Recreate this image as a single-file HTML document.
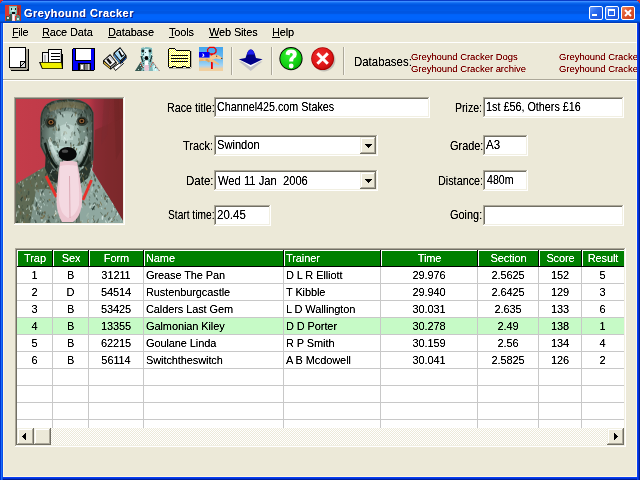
<!DOCTYPE html><html><head><meta charset="utf-8"><style>
html,body{margin:0;padding:0;}body{width:640px;height:480px;overflow:hidden;position:relative;background:#ece9d8;font-family:"Liberation Sans",sans-serif;}
div{box-sizing:border-box;}svg{position:absolute;display:block;}body{will-change:transform;}
</style></head><body>
<svg width="0" height="0" style="position:absolute"><filter id="tc" x="0" y="0" width="1" height="1"><feComponentTransfer><feFuncA type="linear" slope="1.6" intercept="-0.15"/></feComponentTransfer></filter></svg>
<div style="position:absolute;left:0px;top:0px;width:640px;height:480px;background:#0831d9;"></div>
<div style="position:absolute;left:0px;top:23px;width:1px;height:457px;background:#0032d0;"></div>
<div style="position:absolute;left:1px;top:23px;width:1px;height:457px;background:#1a6ef8;"></div>
<div style="position:absolute;left:2px;top:23px;width:1px;height:457px;background:#0a4ee8;"></div>
<div style="position:absolute;left:637px;top:23px;width:1px;height:457px;background:#0a3ef4;"></div>
<div style="position:absolute;left:3px;top:477px;width:634px;height:1px;background:#0a3ef4;"></div>
<div style="position:absolute;left:638px;top:23px;width:1px;height:457px;background:#0032d4;"></div>
<div style="position:absolute;left:3px;top:478px;width:634px;height:1px;background:#0032d4;"></div>
<div style="position:absolute;left:639px;top:23px;width:1px;height:457px;background:#001c94;"></div>
<div style="position:absolute;left:3px;top:479px;width:634px;height:1px;background:#001c94;"></div>
<div style="position:absolute;left:3px;top:23px;width:634px;height:454px;background:#ece9d8;"></div>
<div style="position:absolute;left:3px;top:23px;width:1px;height:454px;background:#fdf6e3;"></div>
<div style="position:absolute;left:3px;top:23px;width:634px;height:1px;background:#fdf6e3;"></div>
<div style="position:absolute;left:3px;top:476px;width:634px;height:1px;background:#fdf6e3;"></div>
<div style="position:absolute;left:636px;top:23px;width:1px;height:454px;background:#fdf6e3;"></div>
<div style="position:absolute;left:0px;top:0px;width:640px;height:23px;background:linear-gradient(180deg,#0a3cc8 0px,#0a3cc8 1px,#3a8cff 1px,#3a8cff 2px,#1a74f4 2px,#1a74f4 3px,#0a62ea 3px,#0a62ea 4px,#005ae6 4px,#005ae6 5px,#0054e0 5px,#0054e0 6px,#0056e4 6px,#0056e4 7px,#0058e6 7px,#0058e6 8px,#0058e6 8px,#0058e6 9px,#0058e6 9px,#0058e6 10px,#005ae8 10px,#005ae8 11px,#0056e2 11px,#0056e2 12px,#0056e2 12px,#0056e2 13px,#0058e6 13px,#0058e6 14px,#0062f8 14px,#0062f8 15px,#0064fc 15px,#0064fc 16px,#0064fc 16px,#0064fc 17px,#0064fc 17px,#0064fc 18px,#0064fc 18px,#0064fc 19px,#0062fa 19px,#0062fa 20px,#005ef2 20px,#005ef2 21px,#0050d6 21px,#0050d6 22px,#003cbc 22px,#003cbc 23px);"></div>
<div style="position:absolute;left:0px;top:0px;width:3px;height:1px;background:#d8322a;"></div>
<div style="position:absolute;left:0px;top:1px;width:1px;height:2px;background:#d8322a;"></div>
<div style="position:absolute;left:1px;top:1px;width:1px;height:1px;background:#6a3a8a;"></div>
<div style="position:absolute;left:637px;top:0px;width:3px;height:1px;background:#d8322a;"></div>
<div style="position:absolute;left:639px;top:1px;width:1px;height:2px;background:#d8322a;"></div>
<div style="position:absolute;left:638px;top:1px;width:1px;height:1px;background:#6a3a8a;"></div>
<svg style="left:5px;top:5px" width="16" height="16" viewBox="0 0 16 16" shape-rendering="crispEdges">
<rect width="16" height="16" fill="#d83830"/><rect x="12" y="0" width="4" height="16" fill="#b83028"/><rect x="13" y="3" width="1" height="9" fill="#902420"/>
<path d="M4 1h8v8h-1v2h-6v-2h-1z" fill="#78b8b0"/>
<rect x="5" y="2" width="6" height="5" fill="#a8dcd4"/>
<rect x="6" y="3" width="1" height="2" fill="#1a2a28"/><rect x="10" y="3" width="1" height="2" fill="#1a2a28"/>
<rect x="7" y="5" width="2" height="1" fill="#e8f8f4"/>
<rect x="7" y="7" width="3" height="2" fill="#080808"/>
<path d="M1 16v-5h3l1-2h2v7z" fill="#3a5a50"/><path d="M15 16v-4l-2-2h-2v6z" fill="#5a8a80"/>
<rect x="2" y="12" width="2" height="2" fill="#c8e8e0"/><rect x="12" y="13" width="2" height="2" fill="#d0f0e8"/>
<rect x="4" y="11" width="1" height="1" fill="#f03020"/><rect x="11" y="11" width="1" height="1" fill="#f03020"/>
<rect x="7" y="9" width="3" height="7" fill="#f4d4dc"/><rect x="8" y="10" width="1" height="5" fill="#ffffff"/>
</svg>
<div style="position:absolute;left:24px;top:7px;font-size:11px;line-height:13px;color:#fff;white-space:pre;filter:url(#tc);font-weight:bold;letter-spacing:0.42px;text-shadow:1px 1px 0 #0a1e8a;">Greyhound Cracker</div>
<div style="position:absolute;left:589px;top:6px;width:14px;height:14px;border:1px solid #fff;border-radius:2px;background:linear-gradient(135deg,#6a9cff 0,#2a6cf0 40%,#1a50d8 100%);"></div>
<div style="position:absolute;left:605px;top:6px;width:14px;height:14px;border:1px solid #fff;border-radius:2px;background:linear-gradient(135deg,#6a9cff 0,#2a6cf0 40%,#1a50d8 100%);"></div>
<div style="position:absolute;left:621px;top:6px;width:14px;height:14px;border:1px solid #fff;border-radius:2px;background:linear-gradient(135deg,#f08a60 0,#e05a30 40%,#c83c18 100%);"></div>
<div style="position:absolute;left:592px;top:14px;width:5px;height:2px;background:#fff;"></div>
<div style="position:absolute;left:608px;top:9px;width:7px;height:7px;border:1px solid #fff;border-top-width:2px;"></div>
<svg style="left:624px;top:9px" width="8" height="8" viewBox="0 0 8 8"><path d="M1 1L7 7M7 1L1 7" stroke="#fff" stroke-width="2"/></svg>
<div style="position:absolute;left:12px;top:26px;font-size:11px;line-height:13px;color:#000;white-space:pre;filter:url(#tc);letter-spacing:-0.4px;"><u>F</u>ile</div>
<div style="position:absolute;left:42px;top:26px;font-size:11px;line-height:13px;color:#000;white-space:pre;filter:url(#tc);letter-spacing:-0.15px;"><u>R</u>ace Data</div>
<div style="position:absolute;left:108px;top:26px;font-size:11px;line-height:13px;color:#000;white-space:pre;filter:url(#tc);letter-spacing:-0.15px;"><u>D</u>atabase</div>
<div style="position:absolute;left:169px;top:26px;font-size:11px;line-height:13px;color:#000;white-space:pre;filter:url(#tc);letter-spacing:-0.15px;"><u>T</u>ools</div>
<div style="position:absolute;left:209px;top:26px;font-size:11px;line-height:13px;color:#000;white-space:pre;filter:url(#tc);letter-spacing:-0.15px;"><u>W</u>eb Sites</div>
<div style="position:absolute;left:272px;top:26px;font-size:11px;line-height:13px;color:#000;white-space:pre;filter:url(#tc);letter-spacing:-0.15px;"><u>H</u>elp</div>
<div style="position:absolute;left:3px;top:42px;width:634px;height:1px;background:#fff;"></div>
<div style="position:absolute;left:3px;top:79px;width:634px;height:1px;background:#aca899;"></div>
<div style="position:absolute;left:3px;top:80px;width:634px;height:1px;background:#fff;"></div>
<div style="position:absolute;left:231px;top:47px;width:1px;height:28px;background:#aca899;"></div>
<div style="position:absolute;left:232px;top:47px;width:1px;height:28px;background:#f8f6ee;"></div>
<div style="position:absolute;left:271px;top:47px;width:1px;height:28px;background:#aca899;"></div>
<div style="position:absolute;left:272px;top:47px;width:1px;height:28px;background:#f8f6ee;"></div>
<div style="position:absolute;left:343px;top:47px;width:1px;height:28px;background:#aca899;"></div>
<div style="position:absolute;left:344px;top:47px;width:1px;height:28px;background:#f8f6ee;"></div>
<svg style="left:0;top:43px" width="640" height="36" viewBox="0 43 640 36" shape-rendering="crispEdges">
<!-- 1 new page -->
<g>
<rect x="11" y="68" width="18" height="3" fill="#000"/>
<rect x="10" y="68" width="18" height="2" fill="#aca899"/>
<rect x="27" y="49" width="2" height="22" fill="#000"/>
<rect x="26" y="49" width="2" height="20" fill="#aca899"/>
<rect x="9" y="47" width="17" height="21" fill="#000"/>
<rect x="10" y="48" width="15" height="19" fill="#fff"/>
<rect x="20" y="61" width="6" height="7" fill="#000"/>
<rect x="21" y="62" width="4" height="5" fill="#d8d8d8"/>
<path d="M21 66L25 62" stroke="#000" stroke-width="1" shape-rendering="auto"/>
</g>
<!-- 2 open folder -->
<g>
<rect x="42" y="52" width="7" height="12" fill="#000"/>
<rect x="43" y="53" width="5" height="10" fill="#f0f0f0"/>
<rect x="44" y="55" width="2" height="8" fill="#c0c0c0"/>
<rect x="48" y="49" width="14" height="14" fill="#000"/>
<rect x="49" y="50" width="12" height="13" fill="#fff"/>
<rect x="60" y="51" width="1" height="12" fill="#c0c0c0"/>
<rect x="51" y="53" width="9" height="1" fill="#000"/>
<rect x="51" y="56" width="9" height="1" fill="#000"/>
<rect x="51" y="59" width="9" height="1" fill="#000"/>
<rect x="62" y="54" width="1" height="15" fill="#000"/>
<path d="M39 62H62L63 69H42Z" fill="#000" shape-rendering="auto"/>
<path d="M40.5 62.8H61.3L62 68.2H42.6Z" fill="#f0f000" shape-rendering="auto"/>
</g>
<!-- 3 floppy -->
<g>
<rect x="72" y="48" width="23" height="23" rx="2" fill="#000"/>
<rect x="73" y="49" width="21" height="21" fill="#0000f8"/>
<rect x="75" y="49" width="16" height="12" fill="#000"/>
<rect x="76" y="49" width="15" height="11" fill="#fff"/>
<rect x="78" y="63" width="13" height="8" fill="#000"/>
<rect x="80" y="64" width="10" height="6" fill="#808080"/>
<rect x="81" y="65" width="2" height="4" fill="#fff"/>
<rect x="84" y="64" width="1" height="6" fill="#404040"/>
<rect x="88" y="64" width="1" height="6" fill="#d0d0d0"/>
</g>
<!-- 4 printer/computer iso -->
<g shape-rendering="auto">
<!-- paper strip -->
<path d="M113.5 67.5L121.5 61.5L123.5 63.5L115.5 70.5Z" fill="#fff" stroke="#000" stroke-width="0.9"/>
<!-- computer -->
<path d="M113.4 53L120.1 47.1L126.6 55.75L120.4 61.7Z" fill="#000"/>
<path d="M114.8 53.2L120.1 48.6L125.2 55.6L120.4 60.2Z" fill="#b8e4fc"/>
<path d="M115.5 54.2L117.3 52.6M116.5 55.5L118.3 53.9M117.5 56.8L119.3 55.2M118.5 58.1L120.3 56.5" stroke="#70b8e8" stroke-width="0.7"/>
<path d="M118 51L120.1 49.2L124 54.5L121.6 56.5Z" fill="#fff"/>
<path d="M118.2 51.6L119.5 50.5L122.3 55.4L123.6 54.3L124.2 55.2L121.4 57.6Z" fill="#000"/>
<path d="M113.4 53L120.4 61.7L120.4 64.6L113.4 56Z" fill="#000"/>
<path d="M114.2 54.6L119.8 61.6L119.8 63.2L114.2 56.2Z" fill="#50a0f0"/>
<path d="M120.4 61.7L126.6 55.75L126.6 58.6L120.4 64.6Z" fill="#000"/>
<path d="M121 62.4L126 57.6L126 58.3L121 63.2Z" fill="#0a60e8"/>
<!-- printer -->
<path d="M103 60.4L110.1 54.1L116.6 62.2L116.6 64.2L110.7 69.8L103 63.6Z" fill="#000"/>
<path d="M104.3 60.4L110.1 55.4L115.3 62L110.3 66.2Z" fill="#fafafa"/>
<path d="M103.8 61.6L110 66.9L110 68.6L103.8 63.2Z" fill="#e8c040"/>
<path d="M110.8 66.9L115.8 62.8L115.8 64L110.8 68.6Z" fill="#b0b0b0"/>
<path d="M106.2 59.6L108.2 57.9L112 62.8L110 64.5Z" fill="#101010"/>
<path d="M108.8 57L110.1 55.9L113.6 60.2L112.4 61.3Z" fill="#c8c8d0"/>
</g>
<!-- 5 dog head -->
<g shape-rendering="auto">
<path d="M135 71L141.5 61L152 61L159.5 71Z" fill="#80b8b8"/>
<path d="M135 71L140 63L143 66L141 71Z" fill="#385850"/>
<path d="M152 64L159.5 71L153 71Z" fill="#c8f0f0"/>
<path d="M141 48Q146 46 152 48L152.5 60L149 63L144 63L141 60Z" fill="#80bcbc"/>
<path d="M144.5 49L148.5 49L149 58L144 58Z" fill="#e0fafa"/>
</g>
<g shape-rendering="crispEdges"><rect x="142" y="65" width="1" height="1" fill="#90d0d0" opacity="0.8"/><rect x="155" y="65" width="1" height="1" fill="#ffffff" opacity="0.8"/><rect x="150" y="55" width="1" height="1" fill="#90d0d0" opacity="0.8"/><rect x="142" y="53" width="1" height="1" fill="#e0fff8" opacity="0.8"/><rect x="150" y="64" width="1" height="1" fill="#90d0d0" opacity="0.8"/><rect x="150" y="59" width="1" height="1" fill="#e0fff8" opacity="0.8"/><rect x="151" y="59" width="1" height="1" fill="#e0fff8" opacity="0.8"/><rect x="140" y="65" width="1" height="1" fill="#ffffff" opacity="0.8"/><rect x="144" y="47" width="1" height="1" fill="#203838" opacity="0.8"/><rect x="150" y="66" width="1" height="1" fill="#e0fff8" opacity="0.8"/><rect x="147" y="69" width="1" height="1" fill="#406860" opacity="0.8"/><rect x="147" y="70" width="1" height="1" fill="#90d0d0" opacity="0.8"/><rect x="149" y="51" width="1" height="1" fill="#203838" opacity="0.8"/><rect x="141" y="55" width="1" height="1" fill="#e0fff8" opacity="0.8"/><rect x="148" y="67" width="1" height="1" fill="#203838" opacity="0.8"/><rect x="148" y="63" width="1" height="1" fill="#406860" opacity="0.8"/><rect x="152" y="65" width="1" height="1" fill="#406860" opacity="0.8"/><rect x="145" y="68" width="1" height="1" fill="#ffffff" opacity="0.8"/><rect x="143" y="66" width="1" height="1" fill="#e0fff8" opacity="0.8"/><rect x="152" y="65" width="1" height="1" fill="#90d0d0" opacity="0.8"/><rect x="138" y="69" width="1" height="1" fill="#e0fff8" opacity="0.8"/><rect x="141" y="67" width="1" height="1" fill="#90d0d0" opacity="0.8"/><rect x="143" y="56" width="1" height="1" fill="#ffffff" opacity="0.8"/><rect x="144" y="60" width="1" height="1" fill="#406860" opacity="0.8"/><rect x="154" y="66" width="1" height="1" fill="#ffffff" opacity="0.8"/><rect x="147" y="69" width="1" height="1" fill="#90d0d0" opacity="0.8"/><rect x="145" y="64" width="1" height="1" fill="#203838" opacity="0.8"/><rect x="151" y="54" width="1" height="1" fill="#ffffff" opacity="0.8"/><rect x="144" y="47" width="1" height="1" fill="#ffffff" opacity="0.8"/><rect x="152" y="48" width="1" height="1" fill="#d8f8f8" opacity="0.8"/><rect x="148" y="56" width="1" height="1" fill="#90d0d0" opacity="0.8"/><rect x="143" y="51" width="1" height="1" fill="#e0fff8" opacity="0.8"/><rect x="145" y="58" width="1" height="1" fill="#d8f8f8" opacity="0.8"/><rect x="147" y="59" width="1" height="1" fill="#406860" opacity="0.8"/><rect x="151" y="59" width="1" height="1" fill="#e0fff8" opacity="0.8"/><rect x="154" y="68" width="1" height="1" fill="#90d0d0" opacity="0.8"/><rect x="151" y="55" width="1" height="1" fill="#406860" opacity="0.8"/><rect x="155" y="70" width="1" height="1" fill="#e0fff8" opacity="0.8"/><rect x="142" y="56" width="1" height="1" fill="#406860" opacity="0.8"/><rect x="143" y="63" width="1" height="1" fill="#203838" opacity="0.8"/><rect x="152" y="57" width="1" height="1" fill="#ffffff" opacity="0.8"/><rect x="148" y="65" width="1" height="1" fill="#203838" opacity="0.8"/><rect x="154" y="65" width="1" height="1" fill="#e0fff8" opacity="0.8"/><rect x="155" y="67" width="1" height="1" fill="#203838" opacity="0.8"/><rect x="149" y="58" width="1" height="1" fill="#e0fff8" opacity="0.8"/><rect x="146" y="66" width="1" height="1" fill="#e0fff8" opacity="0.8"/><rect x="143" y="70" width="1" height="1" fill="#406860" opacity="0.8"/><rect x="143" y="67" width="1" height="1" fill="#406860" opacity="0.8"/><rect x="144" y="65" width="1" height="1" fill="#90d0d0" opacity="0.8"/><rect x="145" y="52" width="1" height="1" fill="#203838" opacity="0.8"/><rect x="144" y="59" width="1" height="1" fill="#ffffff" opacity="0.8"/><rect x="153" y="68" width="1" height="1" fill="#e0fff8" opacity="0.8"/><rect x="151" y="54" width="1" height="1" fill="#e0fff8" opacity="0.8"/><rect x="143" y="54" width="1" height="1" fill="#203838" opacity="0.8"/><rect x="140" y="68" width="1" height="1" fill="#406860" opacity="0.8"/><rect x="155" y="69" width="1" height="1" fill="#ffffff" opacity="0.8"/><rect x="145" y="57" width="1" height="1" fill="#e0fff8" opacity="0.8"/></g>
<g shape-rendering="auto">
<path d="M141 56L143 62M152 56L150 62" stroke="#183030" stroke-width="1.2"/>
<circle cx="142.8" cy="51" r="1.4" fill="#102020"/><circle cx="150" cy="51" r="1.4" fill="#102020"/>
<circle cx="146.4" cy="58" r="1.9" fill="#000"/>
<path d="M144.8 60.5L148.2 60.5L148.8 70.5L144.5 70.5Z" fill="#fff"/>
<path d="M144.6 65L148.6 65L148.8 70.5L144.5 70.5Z" fill="#f0c4d4"/>
<path d="M140.5 62L143 68M152.5 62.5L150 68" stroke="#e03020" stroke-width="1" stroke-dasharray="1 1"/>
<path d="M153 62L159.5 71" stroke="#a03030" stroke-width="0.8" stroke-dasharray="1 1"/>
</g>
<!-- 6 yellow folder -->
<g shape-rendering="crispEdges"><rect x="169" y="49" width="6" height="1" fill="#fff"/><rect x="169" y="50" width="8" height="1" fill="#fff"/><rect x="169" y="51" width="21" height="15" fill="#fff"/><rect x="169" y="66" width="4" height="1" fill="#fff"/><rect x="176" y="66" width="7" height="1" fill="#fff"/><rect x="186" y="66" width="4" height="1" fill="#fff"/><rect x="169" y="49" width="1" height="1" fill="#ffff40"/><rect x="171" y="49" width="1" height="1" fill="#ffff40"/><rect x="173" y="49" width="1" height="1" fill="#ffff40"/><rect x="170" y="50" width="1" height="1" fill="#ffff40"/><rect x="172" y="50" width="1" height="1" fill="#ffff40"/><rect x="174" y="50" width="1" height="1" fill="#ffff40"/><rect x="176" y="50" width="1" height="1" fill="#ffff40"/><rect x="169" y="51" width="1" height="1" fill="#ffff40"/><rect x="171" y="51" width="1" height="1" fill="#ffff40"/><rect x="173" y="51" width="1" height="1" fill="#ffff40"/><rect x="175" y="51" width="1" height="1" fill="#ffff40"/><rect x="177" y="51" width="1" height="1" fill="#ffff40"/><rect x="179" y="51" width="1" height="1" fill="#ffff40"/><rect x="181" y="51" width="1" height="1" fill="#ffff40"/><rect x="183" y="51" width="1" height="1" fill="#ffff40"/><rect x="185" y="51" width="1" height="1" fill="#ffff40"/><rect x="187" y="51" width="1" height="1" fill="#ffff40"/><rect x="189" y="51" width="1" height="1" fill="#ffff40"/><rect x="170" y="52" width="1" height="1" fill="#ffff40"/><rect x="172" y="52" width="1" height="1" fill="#ffff40"/><rect x="174" y="52" width="1" height="1" fill="#ffff40"/><rect x="176" y="52" width="1" height="1" fill="#ffff40"/><rect x="178" y="52" width="1" height="1" fill="#ffff40"/><rect x="180" y="52" width="1" height="1" fill="#ffff40"/><rect x="182" y="52" width="1" height="1" fill="#ffff40"/><rect x="184" y="52" width="1" height="1" fill="#ffff40"/><rect x="186" y="52" width="1" height="1" fill="#ffff40"/><rect x="188" y="52" width="1" height="1" fill="#ffff40"/><rect x="169" y="53" width="1" height="1" fill="#ffff40"/><rect x="171" y="53" width="1" height="1" fill="#ffff40"/><rect x="173" y="53" width="1" height="1" fill="#ffff40"/><rect x="175" y="53" width="1" height="1" fill="#ffff40"/><rect x="177" y="53" width="1" height="1" fill="#ffff40"/><rect x="179" y="53" width="1" height="1" fill="#ffff40"/><rect x="181" y="53" width="1" height="1" fill="#ffff40"/><rect x="183" y="53" width="1" height="1" fill="#ffff40"/><rect x="185" y="53" width="1" height="1" fill="#ffff40"/><rect x="187" y="53" width="1" height="1" fill="#ffff40"/><rect x="189" y="53" width="1" height="1" fill="#ffff40"/><rect x="170" y="54" width="1" height="1" fill="#ffff40"/><rect x="172" y="54" width="1" height="1" fill="#ffff40"/><rect x="174" y="54" width="1" height="1" fill="#ffff40"/><rect x="176" y="54" width="1" height="1" fill="#ffff40"/><rect x="178" y="54" width="1" height="1" fill="#ffff40"/><rect x="180" y="54" width="1" height="1" fill="#ffff40"/><rect x="182" y="54" width="1" height="1" fill="#ffff40"/><rect x="184" y="54" width="1" height="1" fill="#ffff40"/><rect x="186" y="54" width="1" height="1" fill="#ffff40"/><rect x="188" y="54" width="1" height="1" fill="#ffff40"/><rect x="169" y="55" width="1" height="1" fill="#ffff40"/><rect x="171" y="55" width="1" height="1" fill="#ffff40"/><rect x="173" y="55" width="1" height="1" fill="#ffff40"/><rect x="175" y="55" width="1" height="1" fill="#ffff40"/><rect x="177" y="55" width="1" height="1" fill="#ffff40"/><rect x="179" y="55" width="1" height="1" fill="#ffff40"/><rect x="181" y="55" width="1" height="1" fill="#ffff40"/><rect x="183" y="55" width="1" height="1" fill="#ffff40"/><rect x="185" y="55" width="1" height="1" fill="#ffff40"/><rect x="187" y="55" width="1" height="1" fill="#ffff40"/><rect x="189" y="55" width="1" height="1" fill="#ffff40"/><rect x="170" y="56" width="1" height="1" fill="#ffff40"/><rect x="172" y="56" width="1" height="1" fill="#ffff40"/><rect x="174" y="56" width="1" height="1" fill="#ffff40"/><rect x="176" y="56" width="1" height="1" fill="#ffff40"/><rect x="178" y="56" width="1" height="1" fill="#ffff40"/><rect x="180" y="56" width="1" height="1" fill="#ffff40"/><rect x="182" y="56" width="1" height="1" fill="#ffff40"/><rect x="184" y="56" width="1" height="1" fill="#ffff40"/><rect x="186" y="56" width="1" height="1" fill="#ffff40"/><rect x="188" y="56" width="1" height="1" fill="#ffff40"/><rect x="169" y="57" width="1" height="1" fill="#ffff40"/><rect x="171" y="57" width="1" height="1" fill="#ffff40"/><rect x="173" y="57" width="1" height="1" fill="#ffff40"/><rect x="175" y="57" width="1" height="1" fill="#ffff40"/><rect x="177" y="57" width="1" height="1" fill="#ffff40"/><rect x="179" y="57" width="1" height="1" fill="#ffff40"/><rect x="181" y="57" width="1" height="1" fill="#ffff40"/><rect x="183" y="57" width="1" height="1" fill="#ffff40"/><rect x="185" y="57" width="1" height="1" fill="#ffff40"/><rect x="187" y="57" width="1" height="1" fill="#ffff40"/><rect x="189" y="57" width="1" height="1" fill="#ffff40"/><rect x="170" y="58" width="1" height="1" fill="#ffff40"/><rect x="172" y="58" width="1" height="1" fill="#ffff40"/><rect x="174" y="58" width="1" height="1" fill="#ffff40"/><rect x="176" y="58" width="1" height="1" fill="#ffff40"/><rect x="178" y="58" width="1" height="1" fill="#ffff40"/><rect x="180" y="58" width="1" height="1" fill="#ffff40"/><rect x="182" y="58" width="1" height="1" fill="#ffff40"/><rect x="184" y="58" width="1" height="1" fill="#ffff40"/><rect x="186" y="58" width="1" height="1" fill="#ffff40"/><rect x="188" y="58" width="1" height="1" fill="#ffff40"/><rect x="169" y="59" width="1" height="1" fill="#ffff40"/><rect x="171" y="59" width="1" height="1" fill="#ffff40"/><rect x="173" y="59" width="1" height="1" fill="#ffff40"/><rect x="175" y="59" width="1" height="1" fill="#ffff40"/><rect x="177" y="59" width="1" height="1" fill="#ffff40"/><rect x="179" y="59" width="1" height="1" fill="#ffff40"/><rect x="181" y="59" width="1" height="1" fill="#ffff40"/><rect x="183" y="59" width="1" height="1" fill="#ffff40"/><rect x="185" y="59" width="1" height="1" fill="#ffff40"/><rect x="187" y="59" width="1" height="1" fill="#ffff40"/><rect x="189" y="59" width="1" height="1" fill="#ffff40"/><rect x="170" y="60" width="1" height="1" fill="#ffff40"/><rect x="172" y="60" width="1" height="1" fill="#ffff40"/><rect x="174" y="60" width="1" height="1" fill="#ffff40"/><rect x="176" y="60" width="1" height="1" fill="#ffff40"/><rect x="178" y="60" width="1" height="1" fill="#ffff40"/><rect x="180" y="60" width="1" height="1" fill="#ffff40"/><rect x="182" y="60" width="1" height="1" fill="#ffff40"/><rect x="184" y="60" width="1" height="1" fill="#ffff40"/><rect x="186" y="60" width="1" height="1" fill="#ffff40"/><rect x="188" y="60" width="1" height="1" fill="#ffff40"/><rect x="169" y="61" width="1" height="1" fill="#ffff40"/><rect x="171" y="61" width="1" height="1" fill="#ffff40"/><rect x="173" y="61" width="1" height="1" fill="#ffff40"/><rect x="175" y="61" width="1" height="1" fill="#ffff40"/><rect x="177" y="61" width="1" height="1" fill="#ffff40"/><rect x="179" y="61" width="1" height="1" fill="#ffff40"/><rect x="181" y="61" width="1" height="1" fill="#ffff40"/><rect x="183" y="61" width="1" height="1" fill="#ffff40"/><rect x="185" y="61" width="1" height="1" fill="#ffff40"/><rect x="187" y="61" width="1" height="1" fill="#ffff40"/><rect x="189" y="61" width="1" height="1" fill="#ffff40"/><rect x="170" y="62" width="1" height="1" fill="#ffff40"/><rect x="172" y="62" width="1" height="1" fill="#ffff40"/><rect x="174" y="62" width="1" height="1" fill="#ffff40"/><rect x="176" y="62" width="1" height="1" fill="#ffff40"/><rect x="178" y="62" width="1" height="1" fill="#ffff40"/><rect x="180" y="62" width="1" height="1" fill="#ffff40"/><rect x="182" y="62" width="1" height="1" fill="#ffff40"/><rect x="184" y="62" width="1" height="1" fill="#ffff40"/><rect x="186" y="62" width="1" height="1" fill="#ffff40"/><rect x="188" y="62" width="1" height="1" fill="#ffff40"/><rect x="169" y="63" width="1" height="1" fill="#ffff40"/><rect x="171" y="63" width="1" height="1" fill="#ffff40"/><rect x="173" y="63" width="1" height="1" fill="#ffff40"/><rect x="175" y="63" width="1" height="1" fill="#ffff40"/><rect x="177" y="63" width="1" height="1" fill="#ffff40"/><rect x="179" y="63" width="1" height="1" fill="#ffff40"/><rect x="181" y="63" width="1" height="1" fill="#ffff40"/><rect x="183" y="63" width="1" height="1" fill="#ffff40"/><rect x="185" y="63" width="1" height="1" fill="#ffff40"/><rect x="187" y="63" width="1" height="1" fill="#ffff40"/><rect x="189" y="63" width="1" height="1" fill="#ffff40"/><rect x="170" y="64" width="1" height="1" fill="#ffff40"/><rect x="172" y="64" width="1" height="1" fill="#ffff40"/><rect x="174" y="64" width="1" height="1" fill="#ffff40"/><rect x="176" y="64" width="1" height="1" fill="#ffff40"/><rect x="178" y="64" width="1" height="1" fill="#ffff40"/><rect x="180" y="64" width="1" height="1" fill="#ffff40"/><rect x="182" y="64" width="1" height="1" fill="#ffff40"/><rect x="184" y="64" width="1" height="1" fill="#ffff40"/><rect x="186" y="64" width="1" height="1" fill="#ffff40"/><rect x="188" y="64" width="1" height="1" fill="#ffff40"/><rect x="169" y="65" width="1" height="1" fill="#ffff40"/><rect x="171" y="65" width="1" height="1" fill="#ffff40"/><rect x="173" y="65" width="1" height="1" fill="#ffff40"/><rect x="175" y="65" width="1" height="1" fill="#ffff40"/><rect x="177" y="65" width="1" height="1" fill="#ffff40"/><rect x="179" y="65" width="1" height="1" fill="#ffff40"/><rect x="181" y="65" width="1" height="1" fill="#ffff40"/><rect x="183" y="65" width="1" height="1" fill="#ffff40"/><rect x="185" y="65" width="1" height="1" fill="#ffff40"/><rect x="187" y="65" width="1" height="1" fill="#ffff40"/><rect x="189" y="65" width="1" height="1" fill="#ffff40"/><rect x="170" y="66" width="1" height="1" fill="#ffff40"/><rect x="172" y="66" width="1" height="1" fill="#ffff40"/><rect x="176" y="66" width="1" height="1" fill="#ffff40"/><rect x="178" y="66" width="1" height="1" fill="#ffff40"/><rect x="180" y="66" width="1" height="1" fill="#ffff40"/><rect x="182" y="66" width="1" height="1" fill="#ffff40"/><rect x="186" y="66" width="1" height="1" fill="#ffff40"/><rect x="188" y="66" width="1" height="1" fill="#ffff40"/><rect x="171" y="55" width="17" height="1" fill="#000"/><rect x="171" y="58" width="17" height="1" fill="#000"/><rect x="171" y="61" width="17" height="1" fill="#000"/><rect x="169" y="48" width="6" height="1" fill="#000"/><rect x="175" y="49" width="1" height="1" fill="#000"/><rect x="176" y="50" width="1" height="1" fill="#000"/><rect x="177" y="50" width="13" height="1" fill="#000"/><rect x="168" y="49" width="1" height="18" fill="#000"/><rect x="190" y="51" width="1" height="16" fill="#000"/><rect x="169" y="67" width="4" height="1" fill="#000"/><rect x="173" y="66" width="3" height="1" fill="#000"/><rect x="176" y="67" width="7" height="1" fill="#000"/><rect x="183" y="66" width="3" height="1" fill="#000"/><rect x="186" y="67" width="4" height="1" fill="#000"/><rect x="172" y="66" width="1" height="1" fill="#000"/><rect x="175" y="66" width="1" height="1" fill="#000"/><rect x="182" y="66" width="1" height="1" fill="#000"/><rect x="185" y="66" width="1" height="1" fill="#000"/><rect x="169" y="68" width="22" height="1" fill="#b8b4a0"/><rect x="191" y="51" width="1" height="17" fill="#b8b4a0"/></g>
<defs>
<pattern id="dith" width="3" height="2" patternUnits="userSpaceOnUse"><rect width="3" height="2" fill="#fff"/><rect width="1" height="1" fill="#f4f000"/><rect x="2" y="1" width="1" height="1" fill="#f4f000"/></pattern>
<linearGradient id="sky" x1="0" y1="0" x2="0" y2="1"><stop offset="0" stop-color="#40a4ee"/><stop offset="0.5" stop-color="#70bcf0"/><stop offset="0.8" stop-color="#a8d8f4"/><stop offset="1" stop-color="#b0d8f0"/></linearGradient>
<radialGradient id="gr" cx="0.4" cy="0.35" r="0.75"><stop offset="0" stop-color="#30f030"/><stop offset="0.7" stop-color="#10cc10"/><stop offset="1" stop-color="#00a000"/></radialGradient>
<radialGradient id="rd" cx="0.4" cy="0.35" r="0.75"><stop offset="0" stop-color="#f03030"/><stop offset="0.7" stop-color="#dc1414"/><stop offset="1" stop-color="#b00808"/></radialGradient>
<linearGradient id="hat" x1="0" y1="0" x2="0" y2="1"><stop offset="0" stop-color="#4060ff"/><stop offset="0.4" stop-color="#0000c0"/><stop offset="1" stop-color="#000080"/></linearGradient>
</defs>
<!-- 7 race finish -->
<g shape-rendering="auto">
<rect x="199" y="47" width="24" height="24" fill="url(#sky)"/>
<rect x="199" y="66" width="24" height="1.5" fill="#c0d0dc"/>
<rect x="199" y="67.5" width="24" height="3.5" fill="#f0d0a0"/>
<path d="M209.6 47.4H214L216 49.4V52L214 54H209.6L207.6 52V49.4Z" fill="none" stroke="#f00000" stroke-width="1.3"/>
<rect x="211" y="54" width="1.8" height="15" fill="#f00000"/>
<path d="M199 57L204 57.5L210 58L214 60L219.5 64L218.5 65L212 62L205 61L199 61Z" fill="#f0c080"/>
<path d="M209 56.5L214 54.5L218 55L222.5 58L221.5 59.5L216 58.5L211 60Z" fill="#f4c890"/>
<path d="M216 56.2h1.2M221 58.4h1.4" stroke="#603010" stroke-width="1"/>
<path d="M207 58.5L210 61L209 62.5L205 60Z" fill="#d8a060"/>
<rect x="199" y="52" width="10.5" height="5.5" fill="#0000f0"/>
<path d="M202.5 53.6Q204 54.6 203.8 55.8L202.4 56.4" stroke="#fff" stroke-width="1.1" fill="none"/>
<path d="M199 59.5L203 59L204 60.5L199 61.5Z" fill="#e8b070"/>
</g>
<!-- 8 blue hat -->
<g shape-rendering="auto">
<path d="M239 61.5L262.5 61.5L250.7 71Z" fill="#c4c4c8"/>
<path d="M239 59.5L262.5 59.5L250.7 67Z" fill="#fff"/>
<path d="M238.8 59.2L245.5 58L247 53.5Q248 49.6 250.8 49.4Q253.6 49.6 254.6 53.5L256 58L262.6 59.2L250.7 65Z" fill="#000088"/>
<path d="M247 54.5Q248 49.6 250.8 49.4Q253.6 49.6 254.6 54.5Z" fill="#2020f0"/>
<path d="M247.6 56h1.2M250.2 56h1.2M252.8 56h1.2" stroke="#101050" stroke-width="1"/>
</g>
<!-- 9 help -->
<g shape-rendering="auto">
<circle cx="291" cy="58.6" r="11.6" fill="#000"/>
<circle cx="291" cy="58.6" r="10.7" fill="url(#gr)"/>
<path d="M285.6 54.6Q285.6 49.4 291.2 49.4Q296.8 49.4 296.8 54.2Q296.8 57 294 58.6Q293.2 59.2 293.2 61.6H289.2Q289 58 291.6 56.4Q292.8 55.6 292.8 54.6Q292.8 53 291.2 53Q289.6 53 289.6 55.2Z" fill="#fff"/>
<circle cx="291.2" cy="66" r="2.4" fill="#fff"/>
</g>
<!-- 10 stop -->
<g shape-rendering="auto">
<circle cx="324" cy="60" r="11.4" fill="#8a8a8a" opacity="0.45"/>
<circle cx="322.6" cy="58.6" r="11.4" fill="#a80000"/>
<circle cx="322.6" cy="58.6" r="10.6" fill="url(#rd)"/>
<path d="M317.4 53.4L327.8 63.8M327.8 53.4L317.4 63.8" stroke="#fff" stroke-width="3"/>
</g>
</svg>

<div style="position:absolute;left:354.00px;top:55px;font-size:12px;line-height:14px;white-space:pre;transform:scaleX(0.9522);transform-origin:0 0;filter:url(#tc);">Databases:</div>
<div style="position:absolute;left:411px;top:51px;font-size:9.5px;line-height:11.5px;color:#7c0000;white-space:pre;filter:url(#tc);letter-spacing:-0.05px;">Greyhound Cracker Dogs</div>
<div style="position:absolute;left:411px;top:63px;font-size:9.5px;line-height:11.5px;color:#7c0000;white-space:pre;filter:url(#tc);letter-spacing:-0.05px;">Greyhound Cracker archive</div>
<div style="position:absolute;left:0;top:0;width:637px;height:80px;overflow:hidden;">
<div style="position:absolute;left:559px;top:51px;font-size:9.5px;line-height:11.5px;color:#7c0000;white-space:pre;filter:url(#tc);letter-spacing:-0.05px;">Greyhound Cracker</div>
<div style="position:absolute;left:559px;top:63px;font-size:9.5px;line-height:11.5px;color:#7c0000;white-space:pre;filter:url(#tc);letter-spacing:-0.05px;">Greyhound Cracker</div>
</div>
<div style="position:absolute;left:14px;top:97px;width:111px;height:128px;background:#fff;"></div>
<div style="position:absolute;left:14px;top:97px;width:110px;height:127px;background:#aca899;"></div>
<div style="position:absolute;left:15px;top:98px;width:109px;height:126px;background:#f1efe2;"></div>
<div style="position:absolute;left:15px;top:98px;width:108px;height:125px;background:#716f64;"></div>
<div style="position:absolute;left:16px;top:99px;width:107px;height:124px;background:#716f64;"></div>
<svg style="left:16px;top:99px" width="107" height="124" viewBox="16 99 107 124" preserveAspectRatio="none">
<defs>
<linearGradient id="bgd" x1="0" y1="0" x2="1" y2="0">
<stop offset="0" stop-color="#c43c4a"/><stop offset="0.68" stop-color="#bc3846"/><stop offset="0.74" stop-color="#9e3040"/><stop offset="0.86" stop-color="#842a30"/><stop offset="1" stop-color="#742626"/></linearGradient>
<clipPath id="dclip"><path d="M16 184L46 166L47 150L41 146L41 118Q42 106 52 102Q66 98 80 101Q90 104 93 113L93 165L92 170L113 204L123 221L123 223L16 223Z"/></clipPath>
<radialGradient id="hshade" cx="0.5" cy="0.55" r="0.55"><stop offset="0" stop-color="#000" stop-opacity="0"/><stop offset="0.6" stop-color="#000" stop-opacity="0.05"/><stop offset="1" stop-color="#101810" stop-opacity="0.55"/></radialGradient>
<clipPath id="hclip"><path d="M41 146L41 118Q42 106 52 102Q66 98 80 101Q90 104 93 113L93 160L86 166L55 166L47 158Z"/></clipPath>
</defs>
<rect x="16" y="99" width="107" height="124" fill="url(#bgd)"/>
<path d="M95 130L123 118L123 223L120 223L113 204L93 170Z" fill="#7e2a2c" opacity="0.75"/>
<path d="M104 99L110 99L107 135L101 145Z" fill="#7a2a30" opacity="0.45"/>
<path d="M114 99L119 99L121 150L116 160Z" fill="#6a2222" opacity="0.35"/>
<path d="M16 184L46 166L50 160L93 160L92 170L113 204L123 221L123 223L16 223Z" fill="#6a7a70"/>
<path d="M16 184L46 166L52 180L45 223L16 223Z" fill="#5e6a54"/>
<path d="M80 165L93 165L92 170L113 204L123 221L123 223L80 223Z" fill="#8fa8a0"/>
<path d="M36 190Q50 186 60 195L60 223L30 223Z" fill="#7e948a"/>
<path d="M41 146L41 118Q42 106 52 102Q66 98 80 101Q90 104 93 113L93 160L86 166L55 166L47 158Z" fill="#7e968c" stroke="#3e4e46" stroke-width="1.4"/>
<path d="M57 114Q67 108 77 114L80 140L75 148L60 148L55 140Z" fill="#a8c0b8"/>
<path d="M48 140Q53 158 59 166L78 166Q85 156 88 140L80 146L55 146Z" fill="#b8d4cc"/>
<path d="M46 150Q49 166 58 172L58 184L50 180L45 168Z" fill="#24302a"/>
<path d="M90 150Q87 166 79 172L80 184L88 178L92 166Z" fill="#2a362e"/>
<g clip-path="url(#dclip)">
<ellipse cx="64.4" cy="168.4" rx="0.8" ry="1.1" transform="rotate(25 64.4 168.4)" fill="#e8f4f0" opacity="0.53"/>
<ellipse cx="66.9" cy="175.1" rx="0.7" ry="2.3" transform="rotate(-29 66.9 175.1)" fill="#6a5e40" opacity="0.62"/>
<ellipse cx="20.5" cy="220.8" rx="0.4" ry="2.3" transform="rotate(9 20.5 220.8)" fill="#a8bcb0" opacity="0.61"/>
<ellipse cx="19.8" cy="208.1" rx="0.5" ry="1.2" transform="rotate(6 19.8 208.1)" fill="#6a5e40" opacity="0.63"/>
<ellipse cx="47.5" cy="99.6" rx="0.8" ry="2.6" transform="rotate(35 47.5 99.6)" fill="#7a7048" opacity="0.61"/>
<ellipse cx="91.7" cy="138.1" rx="0.5" ry="1.0" transform="rotate(4 91.7 138.1)" fill="#4a5a4a" opacity="0.51"/>
<ellipse cx="47.1" cy="107.3" rx="0.6" ry="2.4" transform="rotate(-20 47.1 107.3)" fill="#7a7048" opacity="0.50"/>
<ellipse cx="120.9" cy="148.3" rx="0.6" ry="1.4" transform="rotate(12 120.9 148.3)" fill="#7a7048" opacity="0.58"/>
<ellipse cx="17.6" cy="149.8" rx="0.8" ry="0.9" transform="rotate(-28 17.6 149.8)" fill="#dceee8" opacity="0.45"/>
<ellipse cx="35.0" cy="168.4" rx="0.6" ry="1.6" transform="rotate(19 35.0 168.4)" fill="#2a3a32" opacity="0.89"/>
<ellipse cx="58.2" cy="221.8" rx="0.6" ry="1.2" transform="rotate(27 58.2 221.8)" fill="#5a6a58" opacity="0.62"/>
<ellipse cx="107.4" cy="178.6" rx="0.6" ry="2.2" transform="rotate(-17 107.4 178.6)" fill="#2a3a32" opacity="0.59"/>
<ellipse cx="47.7" cy="108.1" rx="0.7" ry="1.5" transform="rotate(-34 47.7 108.1)" fill="#5a6a58" opacity="0.75"/>
<ellipse cx="29.6" cy="171.8" rx="0.9" ry="1.1" transform="rotate(-22 29.6 171.8)" fill="#dceee8" opacity="0.70"/>
<ellipse cx="103.5" cy="129.9" rx="0.6" ry="2.0" transform="rotate(4 103.5 129.9)" fill="#7a7048" opacity="0.75"/>
<ellipse cx="67.6" cy="108.7" rx="0.8" ry="1.2" transform="rotate(32 67.6 108.7)" fill="#34463e" opacity="0.52"/>
<ellipse cx="43.5" cy="201.1" rx="0.5" ry="2.6" transform="rotate(30 43.5 201.1)" fill="#4a5a4a" opacity="0.71"/>
<ellipse cx="67.3" cy="180.0" rx="0.4" ry="1.2" transform="rotate(29 67.3 180.0)" fill="#34463e" opacity="0.61"/>
<ellipse cx="44.8" cy="154.3" rx="0.4" ry="2.6" transform="rotate(2 44.8 154.3)" fill="#2a3a32" opacity="0.61"/>
<ellipse cx="30.8" cy="154.8" rx="0.4" ry="1.1" transform="rotate(6 30.8 154.8)" fill="#7a7048" opacity="0.78"/>
<ellipse cx="17.9" cy="211.9" rx="0.8" ry="1.7" transform="rotate(10 17.9 211.9)" fill="#c8e0d8" opacity="0.36"/>
<ellipse cx="50.1" cy="222.9" rx="0.8" ry="2.5" transform="rotate(-32 50.1 222.9)" fill="#5a6a58" opacity="0.65"/>
<ellipse cx="29.9" cy="218.5" rx="0.6" ry="2.4" transform="rotate(28 29.9 218.5)" fill="#34463e" opacity="0.77"/>
<ellipse cx="100.6" cy="206.1" rx="0.4" ry="0.8" transform="rotate(-8 100.6 206.1)" fill="#5a6a58" opacity="0.76"/>
<ellipse cx="25.7" cy="113.3" rx="0.7" ry="2.1" transform="rotate(-8 25.7 113.3)" fill="#6a5e40" opacity="0.79"/>
<ellipse cx="63.1" cy="203.0" rx="0.5" ry="1.7" transform="rotate(7 63.1 203.0)" fill="#5a6a58" opacity="0.51"/>
<ellipse cx="90.7" cy="160.7" rx="0.7" ry="1.3" transform="rotate(-34 90.7 160.7)" fill="#6a5e40" opacity="0.60"/>
<ellipse cx="37.7" cy="120.0" rx="0.5" ry="1.5" transform="rotate(-18 37.7 120.0)" fill="#e8f4f0" opacity="0.55"/>
<ellipse cx="83.9" cy="198.7" rx="0.6" ry="1.8" transform="rotate(-8 83.9 198.7)" fill="#dceee8" opacity="0.70"/>
<ellipse cx="30.6" cy="160.6" rx="0.5" ry="1.3" transform="rotate(32 30.6 160.6)" fill="#c8e0d8" opacity="0.63"/>
<ellipse cx="64.2" cy="133.1" rx="0.8" ry="2.0" transform="rotate(1 64.2 133.1)" fill="#6a5e40" opacity="0.65"/>
<ellipse cx="106.1" cy="176.5" rx="0.5" ry="2.0" transform="rotate(8 106.1 176.5)" fill="#34463e" opacity="0.61"/>
<ellipse cx="53.9" cy="179.5" rx="0.8" ry="0.8" transform="rotate(-3 53.9 179.5)" fill="#7a7048" opacity="0.55"/>
<ellipse cx="41.4" cy="116.5" rx="0.7" ry="1.8" transform="rotate(-27 41.4 116.5)" fill="#7a7048" opacity="0.55"/>
<ellipse cx="55.4" cy="108.7" rx="0.7" ry="2.2" transform="rotate(15 55.4 108.7)" fill="#6a5e40" opacity="0.60"/>
<ellipse cx="19.9" cy="127.1" rx="0.8" ry="1.9" transform="rotate(1 19.9 127.1)" fill="#a8bcb0" opacity="0.63"/>
<ellipse cx="58.1" cy="197.2" rx="0.6" ry="1.5" transform="rotate(27 58.1 197.2)" fill="#c8e0d8" opacity="0.51"/>
<ellipse cx="37.1" cy="209.0" rx="0.9" ry="2.2" transform="rotate(27 37.1 209.0)" fill="#5a6a58" opacity="0.73"/>
<ellipse cx="65.6" cy="179.8" rx="0.5" ry="2.5" transform="rotate(21 65.6 179.8)" fill="#7a7048" opacity="0.85"/>
<ellipse cx="41.9" cy="147.4" rx="0.9" ry="1.4" transform="rotate(20 41.9 147.4)" fill="#4a5a4a" opacity="0.71"/>
<ellipse cx="107.6" cy="142.2" rx="0.9" ry="1.3" transform="rotate(-6 107.6 142.2)" fill="#6a5e40" opacity="0.64"/>
<ellipse cx="39.4" cy="206.6" rx="0.5" ry="2.2" transform="rotate(-12 39.4 206.6)" fill="#34463e" opacity="0.57"/>
<ellipse cx="31.9" cy="163.0" rx="0.4" ry="2.5" transform="rotate(-1 31.9 163.0)" fill="#e8f4f0" opacity="0.73"/>
<ellipse cx="39.7" cy="164.3" rx="0.9" ry="1.7" transform="rotate(-23 39.7 164.3)" fill="#7a7048" opacity="0.72"/>
<ellipse cx="43.4" cy="182.2" rx="0.7" ry="2.5" transform="rotate(25 43.4 182.2)" fill="#a8bcb0" opacity="0.43"/>
<ellipse cx="77.3" cy="123.9" rx="0.4" ry="1.8" transform="rotate(-9 77.3 123.9)" fill="#5a6a58" opacity="0.50"/>
<ellipse cx="114.2" cy="166.5" rx="0.7" ry="0.9" transform="rotate(13 114.2 166.5)" fill="#c8e0d8" opacity="0.55"/>
<ellipse cx="60.3" cy="217.7" rx="0.9" ry="1.4" transform="rotate(-0 60.3 217.7)" fill="#b0c8c0" opacity="0.45"/>
<ellipse cx="116.1" cy="213.1" rx="0.5" ry="2.5" transform="rotate(8 116.1 213.1)" fill="#34463e" opacity="0.58"/>
<ellipse cx="99.4" cy="101.8" rx="0.5" ry="2.1" transform="rotate(-15 99.4 101.8)" fill="#2a3a32" opacity="0.50"/>
<ellipse cx="69.4" cy="161.0" rx="0.8" ry="2.1" transform="rotate(15 69.4 161.0)" fill="#5a6a58" opacity="0.75"/>
<ellipse cx="18.5" cy="177.5" rx="0.7" ry="1.9" transform="rotate(-21 18.5 177.5)" fill="#a8bcb0" opacity="0.41"/>
<ellipse cx="72.7" cy="204.6" rx="0.9" ry="2.3" transform="rotate(17 72.7 204.6)" fill="#2a3a32" opacity="0.59"/>
<ellipse cx="49.8" cy="138.1" rx="0.8" ry="1.0" transform="rotate(-21 49.8 138.1)" fill="#dceee8" opacity="0.66"/>
<ellipse cx="30.2" cy="109.9" rx="0.5" ry="2.2" transform="rotate(-5 30.2 109.9)" fill="#6a5e40" opacity="0.83"/>
<ellipse cx="59.1" cy="184.0" rx="0.6" ry="2.3" transform="rotate(-10 59.1 184.0)" fill="#2a3a32" opacity="0.73"/>
<ellipse cx="91.4" cy="177.7" rx="0.4" ry="1.7" transform="rotate(21 91.4 177.7)" fill="#7a7048" opacity="0.83"/>
<ellipse cx="97.5" cy="175.1" rx="0.8" ry="1.2" transform="rotate(-22 97.5 175.1)" fill="#e8f4f0" opacity="0.41"/>
<ellipse cx="122.0" cy="213.9" rx="0.4" ry="0.9" transform="rotate(13 122.0 213.9)" fill="#34463e" opacity="0.55"/>
<ellipse cx="57.8" cy="151.9" rx="0.8" ry="2.1" transform="rotate(-34 57.8 151.9)" fill="#2a3a32" opacity="0.74"/>
<ellipse cx="35.4" cy="155.3" rx="0.8" ry="1.0" transform="rotate(7 35.4 155.3)" fill="#e8f4f0" opacity="0.72"/>
<ellipse cx="50.6" cy="109.5" rx="0.6" ry="1.9" transform="rotate(-22 50.6 109.5)" fill="#e8f4f0" opacity="0.58"/>
<ellipse cx="97.6" cy="133.7" rx="0.8" ry="1.5" transform="rotate(22 97.6 133.7)" fill="#7a7048" opacity="0.81"/>
<ellipse cx="110.1" cy="185.2" rx="0.6" ry="0.9" transform="rotate(16 110.1 185.2)" fill="#dceee8" opacity="0.51"/>
<ellipse cx="66.2" cy="100.3" rx="0.9" ry="1.3" transform="rotate(-32 66.2 100.3)" fill="#7a7048" opacity="0.86"/>
<ellipse cx="48.0" cy="125.8" rx="0.7" ry="2.6" transform="rotate(-8 48.0 125.8)" fill="#2a3a32" opacity="0.71"/>
<ellipse cx="91.0" cy="193.5" rx="0.6" ry="1.2" transform="rotate(-27 91.0 193.5)" fill="#c8e0d8" opacity="0.40"/>
<ellipse cx="70.0" cy="193.4" rx="0.7" ry="2.4" transform="rotate(-17 70.0 193.4)" fill="#c8e0d8" opacity="0.39"/>
<ellipse cx="70.3" cy="218.9" rx="0.7" ry="0.9" transform="rotate(22 70.3 218.9)" fill="#34463e" opacity="0.76"/>
<ellipse cx="97.2" cy="104.6" rx="0.7" ry="2.3" transform="rotate(33 97.2 104.6)" fill="#dceee8" opacity="0.50"/>
<ellipse cx="79.8" cy="152.3" rx="0.5" ry="1.5" transform="rotate(7 79.8 152.3)" fill="#4a5a4a" opacity="0.71"/>
<ellipse cx="86.1" cy="168.5" rx="0.7" ry="2.2" transform="rotate(-33 86.1 168.5)" fill="#7a7048" opacity="0.80"/>
<ellipse cx="83.7" cy="149.7" rx="0.9" ry="0.9" transform="rotate(17 83.7 149.7)" fill="#c8e0d8" opacity="0.71"/>
<ellipse cx="117.1" cy="108.1" rx="0.4" ry="2.2" transform="rotate(-17 117.1 108.1)" fill="#e8f4f0" opacity="0.64"/>
<ellipse cx="26.5" cy="199.5" rx="0.5" ry="1.9" transform="rotate(22 26.5 199.5)" fill="#dceee8" opacity="0.74"/>
<ellipse cx="82.8" cy="155.5" rx="0.5" ry="1.5" transform="rotate(-24 82.8 155.5)" fill="#34463e" opacity="0.64"/>
<ellipse cx="60.6" cy="173.5" rx="0.5" ry="2.3" transform="rotate(17 60.6 173.5)" fill="#e8f4f0" opacity="0.50"/>
<ellipse cx="47.0" cy="115.0" rx="0.6" ry="1.9" transform="rotate(20 47.0 115.0)" fill="#5a6a58" opacity="0.86"/>
<ellipse cx="45.1" cy="183.9" rx="0.9" ry="1.2" transform="rotate(-15 45.1 183.9)" fill="#5a6a58" opacity="0.58"/>
<ellipse cx="69.7" cy="180.0" rx="0.6" ry="1.3" transform="rotate(-31 69.7 180.0)" fill="#7a7048" opacity="0.52"/>
<ellipse cx="82.7" cy="111.7" rx="0.5" ry="1.1" transform="rotate(29 82.7 111.7)" fill="#34463e" opacity="0.80"/>
<ellipse cx="121.0" cy="159.0" rx="0.4" ry="2.3" transform="rotate(17 121.0 159.0)" fill="#4a5a4a" opacity="0.64"/>
<ellipse cx="28.8" cy="199.3" rx="0.5" ry="1.5" transform="rotate(17 28.8 199.3)" fill="#dceee8" opacity="0.53"/>
<ellipse cx="32.4" cy="202.7" rx="0.6" ry="2.5" transform="rotate(17 32.4 202.7)" fill="#4a5a4a" opacity="0.72"/>
<ellipse cx="55.5" cy="111.0" rx="0.8" ry="1.8" transform="rotate(-5 55.5 111.0)" fill="#c8e0d8" opacity="0.57"/>
<ellipse cx="65.6" cy="201.1" rx="0.6" ry="0.9" transform="rotate(11 65.6 201.1)" fill="#4a5a4a" opacity="0.59"/>
<ellipse cx="93.6" cy="185.1" rx="0.9" ry="1.4" transform="rotate(11 93.6 185.1)" fill="#2a3a32" opacity="0.59"/>
<ellipse cx="50.5" cy="153.7" rx="0.6" ry="2.2" transform="rotate(-4 50.5 153.7)" fill="#7a7048" opacity="0.87"/>
<ellipse cx="50.0" cy="148.5" rx="0.6" ry="1.5" transform="rotate(-10 50.0 148.5)" fill="#a8bcb0" opacity="0.45"/>
<ellipse cx="58.3" cy="147.1" rx="0.7" ry="1.1" transform="rotate(-8 58.3 147.1)" fill="#5a6a58" opacity="0.65"/>
<ellipse cx="35.0" cy="110.1" rx="0.5" ry="0.9" transform="rotate(-20 35.0 110.1)" fill="#4a5a4a" opacity="0.82"/>
<ellipse cx="47.7" cy="101.8" rx="0.4" ry="2.2" transform="rotate(3 47.7 101.8)" fill="#e8f4f0" opacity="0.38"/>
<ellipse cx="24.7" cy="190.4" rx="0.8" ry="1.0" transform="rotate(11 24.7 190.4)" fill="#c8e0d8" opacity="0.36"/>
<ellipse cx="61.2" cy="187.3" rx="0.8" ry="1.4" transform="rotate(-3 61.2 187.3)" fill="#5a6a58" opacity="0.64"/>
<ellipse cx="51.6" cy="116.0" rx="0.8" ry="0.9" transform="rotate(8 51.6 116.0)" fill="#7a7048" opacity="0.53"/>
<ellipse cx="121.5" cy="142.3" rx="0.7" ry="2.5" transform="rotate(27 121.5 142.3)" fill="#6a5e40" opacity="0.83"/>
<ellipse cx="72.1" cy="187.1" rx="0.5" ry="1.2" transform="rotate(29 72.1 187.1)" fill="#e8f4f0" opacity="0.72"/>
<ellipse cx="84.0" cy="183.8" rx="0.4" ry="2.5" transform="rotate(-15 84.0 183.8)" fill="#6a5e40" opacity="0.67"/>
<ellipse cx="49.0" cy="113.2" rx="0.6" ry="0.8" transform="rotate(18 49.0 113.2)" fill="#dceee8" opacity="0.71"/>
<ellipse cx="101.6" cy="137.8" rx="0.7" ry="2.1" transform="rotate(-19 101.6 137.8)" fill="#4a5a4a" opacity="0.59"/>
<ellipse cx="40.0" cy="121.9" rx="0.9" ry="1.9" transform="rotate(31 40.0 121.9)" fill="#2a3a32" opacity="0.86"/>
<ellipse cx="74.9" cy="204.8" rx="0.9" ry="1.8" transform="rotate(-11 74.9 204.8)" fill="#6a5e40" opacity="0.87"/>
<ellipse cx="67.6" cy="126.4" rx="0.7" ry="1.7" transform="rotate(-8 67.6 126.4)" fill="#2a3a32" opacity="0.82"/>
<ellipse cx="45.4" cy="221.8" rx="0.6" ry="2.4" transform="rotate(26 45.4 221.8)" fill="#dceee8" opacity="0.71"/>
<ellipse cx="42.4" cy="151.3" rx="0.8" ry="1.3" transform="rotate(-12 42.4 151.3)" fill="#e8f4f0" opacity="0.41"/>
<ellipse cx="71.2" cy="178.0" rx="0.5" ry="1.8" transform="rotate(-31 71.2 178.0)" fill="#b0c8c0" opacity="0.56"/>
<ellipse cx="37.9" cy="212.6" rx="0.4" ry="2.1" transform="rotate(-16 37.9 212.6)" fill="#2a3a32" opacity="0.53"/>
<ellipse cx="67.4" cy="157.1" rx="0.5" ry="0.8" transform="rotate(0 67.4 157.1)" fill="#a8bcb0" opacity="0.57"/>
<ellipse cx="36.7" cy="183.6" rx="0.5" ry="1.7" transform="rotate(3 36.7 183.6)" fill="#e8f4f0" opacity="0.43"/>
<ellipse cx="105.0" cy="137.6" rx="0.4" ry="2.0" transform="rotate(35 105.0 137.6)" fill="#34463e" opacity="0.72"/>
<ellipse cx="24.0" cy="116.4" rx="0.6" ry="1.0" transform="rotate(20 24.0 116.4)" fill="#e8f4f0" opacity="0.65"/>
<ellipse cx="108.4" cy="187.3" rx="0.9" ry="0.8" transform="rotate(-3 108.4 187.3)" fill="#4a5a4a" opacity="0.73"/>
<ellipse cx="101.5" cy="124.6" rx="0.9" ry="2.1" transform="rotate(31 101.5 124.6)" fill="#4a5a4a" opacity="0.75"/>
<ellipse cx="96.8" cy="167.9" rx="0.9" ry="1.4" transform="rotate(16 96.8 167.9)" fill="#2a3a32" opacity="0.58"/>
<ellipse cx="76.2" cy="188.8" rx="0.7" ry="1.0" transform="rotate(-25 76.2 188.8)" fill="#6a5e40" opacity="0.54"/>
<ellipse cx="91.8" cy="121.3" rx="0.5" ry="1.2" transform="rotate(-29 91.8 121.3)" fill="#6a5e40" opacity="0.74"/>
<ellipse cx="29.3" cy="149.4" rx="0.5" ry="1.2" transform="rotate(-25 29.3 149.4)" fill="#6a5e40" opacity="0.87"/>
<ellipse cx="90.0" cy="158.9" rx="0.9" ry="2.1" transform="rotate(-7 90.0 158.9)" fill="#a8bcb0" opacity="0.36"/>
<ellipse cx="100.5" cy="180.9" rx="0.6" ry="1.4" transform="rotate(-22 100.5 180.9)" fill="#34463e" opacity="0.60"/>
<ellipse cx="75.6" cy="124.4" rx="0.8" ry="1.1" transform="rotate(8 75.6 124.4)" fill="#4a5a4a" opacity="0.83"/>
<ellipse cx="112.6" cy="167.0" rx="0.9" ry="1.2" transform="rotate(5 112.6 167.0)" fill="#5a6a58" opacity="0.71"/>
<ellipse cx="122.8" cy="186.6" rx="0.4" ry="1.2" transform="rotate(9 122.8 186.6)" fill="#a8bcb0" opacity="0.73"/>
<ellipse cx="42.2" cy="170.5" rx="0.8" ry="1.3" transform="rotate(26 42.2 170.5)" fill="#b0c8c0" opacity="0.39"/>
<ellipse cx="64.4" cy="189.5" rx="0.5" ry="1.8" transform="rotate(4 64.4 189.5)" fill="#5a6a58" opacity="0.72"/>
<ellipse cx="113.3" cy="222.0" rx="0.7" ry="0.8" transform="rotate(30 113.3 222.0)" fill="#a8bcb0" opacity="0.41"/>
<ellipse cx="54.9" cy="193.0" rx="0.4" ry="0.9" transform="rotate(3 54.9 193.0)" fill="#2a3a32" opacity="0.57"/>
<ellipse cx="35.3" cy="221.4" rx="0.6" ry="2.1" transform="rotate(12 35.3 221.4)" fill="#dceee8" opacity="0.47"/>
<ellipse cx="79.3" cy="198.7" rx="0.5" ry="1.8" transform="rotate(-33 79.3 198.7)" fill="#2a3a32" opacity="0.66"/>
<ellipse cx="59.4" cy="140.7" rx="0.4" ry="2.0" transform="rotate(-12 59.4 140.7)" fill="#2a3a32" opacity="0.73"/>
<ellipse cx="87.8" cy="116.9" rx="0.9" ry="2.4" transform="rotate(-11 87.8 116.9)" fill="#a8bcb0" opacity="0.39"/>
<ellipse cx="76.4" cy="149.5" rx="0.6" ry="1.5" transform="rotate(25 76.4 149.5)" fill="#6a5e40" opacity="0.84"/>
<ellipse cx="76.6" cy="211.3" rx="0.9" ry="0.8" transform="rotate(-6 76.6 211.3)" fill="#5a6a58" opacity="0.71"/>
<ellipse cx="47.7" cy="175.4" rx="0.7" ry="1.3" transform="rotate(18 47.7 175.4)" fill="#6a5e40" opacity="0.74"/>
<ellipse cx="23.5" cy="114.4" rx="0.5" ry="1.7" transform="rotate(33 23.5 114.4)" fill="#5a6a58" opacity="0.85"/>
<ellipse cx="113.4" cy="166.6" rx="0.8" ry="2.1" transform="rotate(35 113.4 166.6)" fill="#dceee8" opacity="0.70"/>
<ellipse cx="55.5" cy="166.7" rx="0.9" ry="1.8" transform="rotate(17 55.5 166.7)" fill="#2a3a32" opacity="0.59"/>
<ellipse cx="26.5" cy="197.3" rx="0.8" ry="1.3" transform="rotate(-3 26.5 197.3)" fill="#5a6a58" opacity="0.73"/>
<ellipse cx="18.6" cy="120.3" rx="0.7" ry="1.4" transform="rotate(-7 18.6 120.3)" fill="#6a5e40" opacity="0.83"/>
<ellipse cx="20.9" cy="102.9" rx="0.8" ry="2.2" transform="rotate(-25 20.9 102.9)" fill="#b0c8c0" opacity="0.48"/>
<ellipse cx="110.0" cy="124.1" rx="0.6" ry="1.4" transform="rotate(24 110.0 124.1)" fill="#c8e0d8" opacity="0.43"/>
<ellipse cx="34.4" cy="208.1" rx="0.9" ry="2.5" transform="rotate(-18 34.4 208.1)" fill="#dceee8" opacity="0.56"/>
<ellipse cx="85.6" cy="137.0" rx="0.7" ry="1.0" transform="rotate(15 85.6 137.0)" fill="#b0c8c0" opacity="0.70"/>
<ellipse cx="116.3" cy="154.2" rx="0.5" ry="2.0" transform="rotate(-27 116.3 154.2)" fill="#2a3a32" opacity="0.84"/>
<ellipse cx="93.1" cy="161.2" rx="0.7" ry="2.4" transform="rotate(11 93.1 161.2)" fill="#4a5a4a" opacity="0.65"/>
<ellipse cx="40.5" cy="136.3" rx="0.9" ry="1.0" transform="rotate(10 40.5 136.3)" fill="#dceee8" opacity="0.46"/>
<ellipse cx="63.1" cy="164.5" rx="0.6" ry="1.8" transform="rotate(6 63.1 164.5)" fill="#34463e" opacity="0.50"/>
<ellipse cx="76.8" cy="119.4" rx="0.5" ry="1.8" transform="rotate(-15 76.8 119.4)" fill="#dceee8" opacity="0.45"/>
<ellipse cx="112.0" cy="221.5" rx="0.8" ry="0.8" transform="rotate(6 112.0 221.5)" fill="#6a5e40" opacity="0.87"/>
<ellipse cx="22.4" cy="106.9" rx="0.5" ry="0.9" transform="rotate(-1 22.4 106.9)" fill="#b0c8c0" opacity="0.48"/>
<ellipse cx="104.5" cy="177.7" rx="0.7" ry="1.1" transform="rotate(20 104.5 177.7)" fill="#a8bcb0" opacity="0.42"/>
<ellipse cx="41.2" cy="153.6" rx="0.7" ry="2.3" transform="rotate(3 41.2 153.6)" fill="#dceee8" opacity="0.45"/>
<ellipse cx="44.0" cy="124.1" rx="0.5" ry="1.1" transform="rotate(26 44.0 124.1)" fill="#c8e0d8" opacity="0.58"/>
<ellipse cx="17.9" cy="160.5" rx="0.5" ry="0.9" transform="rotate(25 17.9 160.5)" fill="#6a5e40" opacity="0.79"/>
<ellipse cx="35.1" cy="178.3" rx="0.4" ry="1.4" transform="rotate(-25 35.1 178.3)" fill="#7a7048" opacity="0.60"/>
<ellipse cx="49.6" cy="176.0" rx="0.7" ry="2.0" transform="rotate(-0 49.6 176.0)" fill="#4a5a4a" opacity="0.81"/>
<ellipse cx="56.5" cy="129.8" rx="0.6" ry="0.9" transform="rotate(20 56.5 129.8)" fill="#7a7048" opacity="0.83"/>
<ellipse cx="55.0" cy="125.8" rx="0.5" ry="1.9" transform="rotate(18 55.0 125.8)" fill="#c8e0d8" opacity="0.40"/>
<ellipse cx="95.7" cy="163.7" rx="0.6" ry="1.1" transform="rotate(27 95.7 163.7)" fill="#c8e0d8" opacity="0.45"/>
<ellipse cx="47.9" cy="151.6" rx="0.7" ry="2.6" transform="rotate(15 47.9 151.6)" fill="#34463e" opacity="0.77"/>
<ellipse cx="47.6" cy="113.7" rx="0.6" ry="1.5" transform="rotate(30 47.6 113.7)" fill="#e8f4f0" opacity="0.53"/>
<ellipse cx="121.0" cy="174.8" rx="0.7" ry="2.1" transform="rotate(35 121.0 174.8)" fill="#6a5e40" opacity="0.73"/>
<ellipse cx="113.6" cy="208.7" rx="0.6" ry="2.3" transform="rotate(-7 113.6 208.7)" fill="#dceee8" opacity="0.54"/>
<ellipse cx="99.6" cy="125.7" rx="0.6" ry="1.7" transform="rotate(21 99.6 125.7)" fill="#2a3a32" opacity="0.82"/>
<ellipse cx="79.5" cy="193.2" rx="0.5" ry="2.4" transform="rotate(13 79.5 193.2)" fill="#6a5e40" opacity="0.90"/>
<ellipse cx="57.0" cy="108.0" rx="0.8" ry="1.7" transform="rotate(8 57.0 108.0)" fill="#b0c8c0" opacity="0.73"/>
<ellipse cx="70.8" cy="169.4" rx="0.9" ry="1.1" transform="rotate(-10 70.8 169.4)" fill="#dceee8" opacity="0.46"/>
<ellipse cx="54.5" cy="193.9" rx="0.4" ry="1.5" transform="rotate(-12 54.5 193.9)" fill="#c8e0d8" opacity="0.36"/>
<ellipse cx="110.4" cy="139.3" rx="0.6" ry="1.9" transform="rotate(-14 110.4 139.3)" fill="#a8bcb0" opacity="0.62"/>
<ellipse cx="36.1" cy="162.7" rx="0.5" ry="1.8" transform="rotate(-5 36.1 162.7)" fill="#2a3a32" opacity="0.62"/>
<ellipse cx="91.6" cy="131.3" rx="0.8" ry="1.3" transform="rotate(-21 91.6 131.3)" fill="#e8f4f0" opacity="0.41"/>
<ellipse cx="59.4" cy="146.9" rx="0.5" ry="1.9" transform="rotate(-9 59.4 146.9)" fill="#dceee8" opacity="0.39"/>
<ellipse cx="106.8" cy="191.6" rx="0.7" ry="1.3" transform="rotate(33 106.8 191.6)" fill="#34463e" opacity="0.82"/>
<ellipse cx="114.3" cy="125.8" rx="0.7" ry="1.2" transform="rotate(26 114.3 125.8)" fill="#c8e0d8" opacity="0.73"/>
<ellipse cx="25.6" cy="152.0" rx="0.8" ry="1.3" transform="rotate(30 25.6 152.0)" fill="#34463e" opacity="0.70"/>
<ellipse cx="39.7" cy="213.8" rx="0.8" ry="1.7" transform="rotate(15 39.7 213.8)" fill="#2a3a32" opacity="0.64"/>
<ellipse cx="113.1" cy="198.7" rx="0.4" ry="2.1" transform="rotate(4 113.1 198.7)" fill="#4a5a4a" opacity="0.78"/>
<ellipse cx="57.9" cy="144.2" rx="0.5" ry="2.3" transform="rotate(-9 57.9 144.2)" fill="#6a5e40" opacity="0.61"/>
<ellipse cx="93.0" cy="208.9" rx="0.5" ry="1.8" transform="rotate(27 93.0 208.9)" fill="#34463e" opacity="0.64"/>
<ellipse cx="87.5" cy="122.1" rx="0.8" ry="0.9" transform="rotate(28 87.5 122.1)" fill="#5a6a58" opacity="0.64"/>
<ellipse cx="39.2" cy="108.4" rx="0.8" ry="1.3" transform="rotate(-6 39.2 108.4)" fill="#5a6a58" opacity="0.66"/>
<ellipse cx="110.1" cy="146.4" rx="0.6" ry="1.3" transform="rotate(13 110.1 146.4)" fill="#c8e0d8" opacity="0.67"/>
<ellipse cx="66.6" cy="101.6" rx="0.4" ry="1.2" transform="rotate(13 66.6 101.6)" fill="#4a5a4a" opacity="0.59"/>
<ellipse cx="74.2" cy="147.8" rx="0.8" ry="0.9" transform="rotate(19 74.2 147.8)" fill="#6a5e40" opacity="0.84"/>
<ellipse cx="110.6" cy="184.7" rx="0.8" ry="1.4" transform="rotate(27 110.6 184.7)" fill="#b0c8c0" opacity="0.49"/>
<ellipse cx="90.4" cy="184.1" rx="0.7" ry="1.7" transform="rotate(9 90.4 184.1)" fill="#dceee8" opacity="0.41"/>
<ellipse cx="55.5" cy="134.4" rx="0.8" ry="1.5" transform="rotate(10 55.5 134.4)" fill="#a8bcb0" opacity="0.55"/>
<ellipse cx="114.2" cy="190.5" rx="0.8" ry="1.4" transform="rotate(27 114.2 190.5)" fill="#c8e0d8" opacity="0.68"/>
<ellipse cx="70.8" cy="183.2" rx="0.5" ry="0.9" transform="rotate(26 70.8 183.2)" fill="#5a6a58" opacity="0.85"/>
<ellipse cx="70.3" cy="197.8" rx="0.5" ry="2.0" transform="rotate(-9 70.3 197.8)" fill="#7a7048" opacity="0.75"/>
<ellipse cx="107.6" cy="124.4" rx="0.7" ry="2.1" transform="rotate(-6 107.6 124.4)" fill="#2a3a32" opacity="0.73"/>
<ellipse cx="104.9" cy="198.4" rx="0.9" ry="2.0" transform="rotate(-15 104.9 198.4)" fill="#6a5e40" opacity="0.75"/>
<ellipse cx="66.5" cy="185.0" rx="0.7" ry="1.3" transform="rotate(-16 66.5 185.0)" fill="#dceee8" opacity="0.46"/>
<ellipse cx="57.4" cy="183.2" rx="0.5" ry="0.9" transform="rotate(-27 57.4 183.2)" fill="#2a3a32" opacity="0.79"/>
<ellipse cx="94.2" cy="222.2" rx="0.5" ry="2.3" transform="rotate(23 94.2 222.2)" fill="#4a5a4a" opacity="0.86"/>
<ellipse cx="23.2" cy="153.4" rx="0.5" ry="1.5" transform="rotate(16 23.2 153.4)" fill="#b0c8c0" opacity="0.44"/>
<ellipse cx="77.7" cy="182.7" rx="0.5" ry="1.1" transform="rotate(-25 77.7 182.7)" fill="#4a5a4a" opacity="0.82"/>
<ellipse cx="115.9" cy="130.2" rx="0.7" ry="1.3" transform="rotate(27 115.9 130.2)" fill="#34463e" opacity="0.56"/>
<ellipse cx="45.3" cy="148.6" rx="0.4" ry="1.3" transform="rotate(-9 45.3 148.6)" fill="#34463e" opacity="0.69"/>
<ellipse cx="22.9" cy="209.7" rx="0.8" ry="1.1" transform="rotate(-11 22.9 209.7)" fill="#34463e" opacity="0.50"/>
<ellipse cx="122.1" cy="149.7" rx="0.7" ry="0.9" transform="rotate(-7 122.1 149.7)" fill="#4a5a4a" opacity="0.82"/>
<ellipse cx="86.3" cy="176.3" rx="0.8" ry="1.6" transform="rotate(35 86.3 176.3)" fill="#4a5a4a" opacity="0.85"/>
<ellipse cx="93.6" cy="120.8" rx="0.4" ry="1.3" transform="rotate(12 93.6 120.8)" fill="#2a3a32" opacity="0.72"/>
<ellipse cx="75.5" cy="106.8" rx="0.5" ry="2.2" transform="rotate(-9 75.5 106.8)" fill="#2a3a32" opacity="0.53"/>
<ellipse cx="42.2" cy="213.6" rx="0.9" ry="2.2" transform="rotate(23 42.2 213.6)" fill="#4a5a4a" opacity="0.82"/>
<ellipse cx="26.8" cy="216.8" rx="0.4" ry="1.9" transform="rotate(28 26.8 216.8)" fill="#7a7048" opacity="0.66"/>
<ellipse cx="31.1" cy="139.1" rx="0.7" ry="1.5" transform="rotate(22 31.1 139.1)" fill="#a8bcb0" opacity="0.61"/>
<ellipse cx="53.9" cy="133.6" rx="0.5" ry="1.2" transform="rotate(-16 53.9 133.6)" fill="#b0c8c0" opacity="0.59"/>
<ellipse cx="21.0" cy="115.2" rx="0.6" ry="1.1" transform="rotate(-28 21.0 115.2)" fill="#2a3a32" opacity="0.57"/>
<ellipse cx="62.1" cy="100.2" rx="0.8" ry="2.3" transform="rotate(32 62.1 100.2)" fill="#6a5e40" opacity="0.54"/>
<ellipse cx="18.2" cy="120.6" rx="0.9" ry="1.6" transform="rotate(34 18.2 120.6)" fill="#5a6a58" opacity="0.54"/>
<ellipse cx="39.5" cy="149.6" rx="0.9" ry="1.5" transform="rotate(-30 39.5 149.6)" fill="#dceee8" opacity="0.68"/>
<ellipse cx="110.3" cy="195.4" rx="0.7" ry="1.5" transform="rotate(9 110.3 195.4)" fill="#34463e" opacity="0.56"/>
<ellipse cx="38.7" cy="175.4" rx="0.8" ry="1.0" transform="rotate(5 38.7 175.4)" fill="#e8f4f0" opacity="0.55"/>
<ellipse cx="89.8" cy="155.2" rx="0.7" ry="1.5" transform="rotate(0 89.8 155.2)" fill="#e8f4f0" opacity="0.68"/>
<ellipse cx="20.6" cy="213.1" rx="0.9" ry="1.9" transform="rotate(7 20.6 213.1)" fill="#6a5e40" opacity="0.68"/>
<ellipse cx="32.3" cy="157.1" rx="0.6" ry="2.6" transform="rotate(17 32.3 157.1)" fill="#a8bcb0" opacity="0.48"/>
<ellipse cx="108.8" cy="114.7" rx="0.8" ry="2.5" transform="rotate(-22 108.8 114.7)" fill="#e8f4f0" opacity="0.39"/>
<ellipse cx="31.2" cy="113.2" rx="0.8" ry="2.4" transform="rotate(-30 31.2 113.2)" fill="#4a5a4a" opacity="0.90"/>
<ellipse cx="42.8" cy="199.1" rx="0.9" ry="1.7" transform="rotate(-5 42.8 199.1)" fill="#5a6a58" opacity="0.51"/>
<ellipse cx="41.5" cy="112.3" rx="0.4" ry="1.7" transform="rotate(-30 41.5 112.3)" fill="#6a5e40" opacity="0.85"/>
<ellipse cx="109.1" cy="219.6" rx="0.9" ry="1.4" transform="rotate(-23 109.1 219.6)" fill="#2a3a32" opacity="0.82"/>
<ellipse cx="118.2" cy="126.2" rx="0.7" ry="2.3" transform="rotate(-8 118.2 126.2)" fill="#6a5e40" opacity="0.57"/>
<ellipse cx="112.5" cy="107.9" rx="0.9" ry="2.5" transform="rotate(-13 112.5 107.9)" fill="#dceee8" opacity="0.56"/>
<ellipse cx="75.9" cy="222.3" rx="0.7" ry="2.5" transform="rotate(24 75.9 222.3)" fill="#4a5a4a" opacity="0.78"/>
<ellipse cx="38.3" cy="125.0" rx="0.5" ry="1.0" transform="rotate(-2 38.3 125.0)" fill="#dceee8" opacity="0.63"/>
<ellipse cx="116.7" cy="174.6" rx="0.8" ry="1.2" transform="rotate(-30 116.7 174.6)" fill="#2a3a32" opacity="0.50"/>
<ellipse cx="109.1" cy="194.5" rx="0.6" ry="2.3" transform="rotate(-5 109.1 194.5)" fill="#34463e" opacity="0.75"/>
<ellipse cx="64.9" cy="161.8" rx="0.5" ry="1.7" transform="rotate(-6 64.9 161.8)" fill="#b0c8c0" opacity="0.56"/>
<ellipse cx="29.2" cy="207.7" rx="0.6" ry="2.5" transform="rotate(-3 29.2 207.7)" fill="#c8e0d8" opacity="0.62"/>
<ellipse cx="95.5" cy="173.6" rx="0.7" ry="1.9" transform="rotate(-12 95.5 173.6)" fill="#34463e" opacity="0.65"/>
<ellipse cx="44.6" cy="181.1" rx="0.8" ry="1.0" transform="rotate(-6 44.6 181.1)" fill="#5a6a58" opacity="0.60"/>
<ellipse cx="42.9" cy="151.2" rx="0.5" ry="1.6" transform="rotate(11 42.9 151.2)" fill="#5a6a58" opacity="0.54"/>
<ellipse cx="100.5" cy="101.0" rx="0.9" ry="2.4" transform="rotate(-11 100.5 101.0)" fill="#5a6a58" opacity="0.77"/>
<ellipse cx="18.5" cy="177.5" rx="0.7" ry="1.7" transform="rotate(0 18.5 177.5)" fill="#4a5a4a" opacity="0.57"/>
<ellipse cx="22.5" cy="126.6" rx="0.5" ry="1.8" transform="rotate(-19 22.5 126.6)" fill="#6a5e40" opacity="0.67"/>
<ellipse cx="22.2" cy="223.0" rx="0.8" ry="1.7" transform="rotate(6 22.2 223.0)" fill="#dceee8" opacity="0.56"/>
<ellipse cx="71.2" cy="110.9" rx="0.8" ry="1.9" transform="rotate(10 71.2 110.9)" fill="#c8e0d8" opacity="0.42"/>
<ellipse cx="43.1" cy="199.6" rx="0.6" ry="1.5" transform="rotate(-24 43.1 199.6)" fill="#c8e0d8" opacity="0.52"/>
<ellipse cx="105.1" cy="208.4" rx="0.8" ry="1.0" transform="rotate(2 105.1 208.4)" fill="#6a5e40" opacity="0.71"/>
<ellipse cx="48.3" cy="161.9" rx="0.6" ry="1.7" transform="rotate(11 48.3 161.9)" fill="#5a6a58" opacity="0.60"/>
<ellipse cx="53.7" cy="129.5" rx="0.7" ry="1.6" transform="rotate(-20 53.7 129.5)" fill="#6a5e40" opacity="0.52"/>
<ellipse cx="65.2" cy="204.5" rx="0.6" ry="1.7" transform="rotate(33 65.2 204.5)" fill="#5a6a58" opacity="0.56"/>
<ellipse cx="81.5" cy="206.1" rx="0.5" ry="2.2" transform="rotate(-19 81.5 206.1)" fill="#e8f4f0" opacity="0.68"/>
<ellipse cx="94.9" cy="145.7" rx="0.9" ry="1.3" transform="rotate(-27 94.9 145.7)" fill="#5a6a58" opacity="0.51"/>
<ellipse cx="84.8" cy="204.1" rx="0.7" ry="1.8" transform="rotate(-20 84.8 204.1)" fill="#6a5e40" opacity="0.62"/>
<ellipse cx="60.9" cy="210.1" rx="0.9" ry="1.7" transform="rotate(5 60.9 210.1)" fill="#5a6a58" opacity="0.88"/>
<ellipse cx="58.2" cy="136.1" rx="0.6" ry="2.2" transform="rotate(-29 58.2 136.1)" fill="#b0c8c0" opacity="0.44"/>
<ellipse cx="85.4" cy="140.4" rx="0.7" ry="1.8" transform="rotate(-31 85.4 140.4)" fill="#4a5a4a" opacity="0.83"/>
<ellipse cx="58.8" cy="126.6" rx="0.7" ry="2.5" transform="rotate(-10 58.8 126.6)" fill="#4a5a4a" opacity="0.51"/>
<ellipse cx="72.4" cy="189.9" rx="0.9" ry="1.9" transform="rotate(-35 72.4 189.9)" fill="#5a6a58" opacity="0.89"/>
<ellipse cx="55.1" cy="173.2" rx="0.5" ry="0.9" transform="rotate(18 55.1 173.2)" fill="#4a5a4a" opacity="0.58"/>
<ellipse cx="28.6" cy="193.0" rx="0.9" ry="2.3" transform="rotate(6 28.6 193.0)" fill="#34463e" opacity="0.59"/>
<ellipse cx="85.3" cy="145.3" rx="0.8" ry="2.6" transform="rotate(-29 85.3 145.3)" fill="#5a6a58" opacity="0.77"/>
<ellipse cx="51.1" cy="138.4" rx="0.4" ry="2.2" transform="rotate(-31 51.1 138.4)" fill="#b0c8c0" opacity="0.61"/>
<ellipse cx="82.8" cy="167.5" rx="0.7" ry="1.2" transform="rotate(13 82.8 167.5)" fill="#c8e0d8" opacity="0.60"/>
<ellipse cx="104.1" cy="158.4" rx="0.8" ry="0.9" transform="rotate(29 104.1 158.4)" fill="#7a7048" opacity="0.89"/>
<ellipse cx="63.1" cy="192.2" rx="0.8" ry="1.6" transform="rotate(21 63.1 192.2)" fill="#6a5e40" opacity="0.77"/>
<ellipse cx="93.9" cy="202.6" rx="0.5" ry="1.0" transform="rotate(3 93.9 202.6)" fill="#b0c8c0" opacity="0.62"/>
<ellipse cx="49.2" cy="217.3" rx="0.9" ry="1.1" transform="rotate(-12 49.2 217.3)" fill="#2a3a32" opacity="0.54"/>
<ellipse cx="32.6" cy="133.0" rx="0.6" ry="2.1" transform="rotate(-21 32.6 133.0)" fill="#6a5e40" opacity="0.87"/>
<ellipse cx="62.7" cy="198.0" rx="0.7" ry="1.1" transform="rotate(17 62.7 198.0)" fill="#6a5e40" opacity="0.54"/>
<ellipse cx="37.6" cy="141.9" rx="0.6" ry="2.0" transform="rotate(21 37.6 141.9)" fill="#4a5a4a" opacity="0.65"/>
<ellipse cx="79.0" cy="156.3" rx="0.7" ry="1.4" transform="rotate(34 79.0 156.3)" fill="#dceee8" opacity="0.54"/>
<ellipse cx="41.0" cy="131.4" rx="0.5" ry="2.2" transform="rotate(30 41.0 131.4)" fill="#a8bcb0" opacity="0.37"/>
<ellipse cx="42.0" cy="125.5" rx="0.6" ry="2.4" transform="rotate(33 42.0 125.5)" fill="#c8e0d8" opacity="0.57"/>
<ellipse cx="68.1" cy="127.7" rx="0.9" ry="1.1" transform="rotate(0 68.1 127.7)" fill="#c8e0d8" opacity="0.62"/>
<ellipse cx="53.7" cy="118.8" rx="0.8" ry="2.2" transform="rotate(32 53.7 118.8)" fill="#6a5e40" opacity="0.56"/>
<ellipse cx="26.5" cy="196.2" rx="0.5" ry="1.4" transform="rotate(17 26.5 196.2)" fill="#2a3a32" opacity="0.84"/>
<ellipse cx="36.3" cy="119.9" rx="0.8" ry="2.5" transform="rotate(-10 36.3 119.9)" fill="#b0c8c0" opacity="0.63"/>
<ellipse cx="47.1" cy="205.3" rx="0.8" ry="1.1" transform="rotate(-10 47.1 205.3)" fill="#b0c8c0" opacity="0.39"/>
<ellipse cx="87.5" cy="134.5" rx="0.5" ry="1.3" transform="rotate(-16 87.5 134.5)" fill="#4a5a4a" opacity="0.69"/>
<ellipse cx="70.5" cy="207.4" rx="0.8" ry="1.8" transform="rotate(8 70.5 207.4)" fill="#5a6a58" opacity="0.84"/>
<ellipse cx="73.2" cy="180.8" rx="0.7" ry="2.2" transform="rotate(-5 73.2 180.8)" fill="#b0c8c0" opacity="0.47"/>
<ellipse cx="74.1" cy="158.6" rx="0.7" ry="1.7" transform="rotate(31 74.1 158.6)" fill="#b0c8c0" opacity="0.64"/>
<ellipse cx="53.3" cy="127.8" rx="0.6" ry="2.1" transform="rotate(30 53.3 127.8)" fill="#c8e0d8" opacity="0.58"/>
<ellipse cx="16.3" cy="214.7" rx="0.4" ry="2.4" transform="rotate(-13 16.3 214.7)" fill="#dceee8" opacity="0.75"/>
<ellipse cx="87.3" cy="107.4" rx="0.9" ry="2.6" transform="rotate(28 87.3 107.4)" fill="#5a6a58" opacity="0.56"/>
<ellipse cx="114.4" cy="166.2" rx="0.6" ry="1.4" transform="rotate(2 114.4 166.2)" fill="#7a7048" opacity="0.57"/>
<ellipse cx="37.1" cy="186.4" rx="0.9" ry="0.9" transform="rotate(14 37.1 186.4)" fill="#6a5e40" opacity="0.58"/>
<ellipse cx="112.1" cy="110.0" rx="0.9" ry="2.5" transform="rotate(14 112.1 110.0)" fill="#b0c8c0" opacity="0.48"/>
<ellipse cx="117.6" cy="213.7" rx="0.7" ry="2.6" transform="rotate(21 117.6 213.7)" fill="#c8e0d8" opacity="0.59"/>
<ellipse cx="112.1" cy="138.2" rx="0.5" ry="1.0" transform="rotate(29 112.1 138.2)" fill="#5a6a58" opacity="0.56"/>
<ellipse cx="48.2" cy="221.4" rx="0.7" ry="1.7" transform="rotate(13 48.2 221.4)" fill="#2a3a32" opacity="0.83"/>
<ellipse cx="97.0" cy="199.2" rx="0.5" ry="1.5" transform="rotate(-20 97.0 199.2)" fill="#34463e" opacity="0.88"/>
<ellipse cx="53.5" cy="126.2" rx="0.6" ry="1.7" transform="rotate(6 53.5 126.2)" fill="#2a3a32" opacity="0.60"/>
<ellipse cx="88.2" cy="155.4" rx="0.6" ry="1.3" transform="rotate(-25 88.2 155.4)" fill="#6a5e40" opacity="0.57"/>
<ellipse cx="99.9" cy="140.3" rx="0.7" ry="1.8" transform="rotate(7 99.9 140.3)" fill="#7a7048" opacity="0.74"/>
<ellipse cx="18.4" cy="137.5" rx="0.8" ry="2.0" transform="rotate(16 18.4 137.5)" fill="#5a6a58" opacity="0.63"/>
<ellipse cx="73.8" cy="108.7" rx="0.5" ry="1.8" transform="rotate(-32 73.8 108.7)" fill="#dceee8" opacity="0.53"/>
<ellipse cx="87.7" cy="107.7" rx="0.5" ry="2.0" transform="rotate(-6 87.7 107.7)" fill="#6a5e40" opacity="0.90"/>
<ellipse cx="122.2" cy="124.7" rx="0.8" ry="1.7" transform="rotate(17 122.2 124.7)" fill="#a8bcb0" opacity="0.59"/>
<ellipse cx="17.5" cy="160.9" rx="0.5" ry="0.9" transform="rotate(-24 17.5 160.9)" fill="#34463e" opacity="0.67"/>
<ellipse cx="68.7" cy="127.0" rx="0.9" ry="2.1" transform="rotate(-25 68.7 127.0)" fill="#2a3a32" opacity="0.87"/>
<ellipse cx="36.6" cy="115.8" rx="0.5" ry="2.5" transform="rotate(16 36.6 115.8)" fill="#e8f4f0" opacity="0.50"/>
<ellipse cx="109.2" cy="221.0" rx="0.5" ry="1.8" transform="rotate(-13 109.2 221.0)" fill="#c8e0d8" opacity="0.40"/>
<ellipse cx="71.9" cy="200.2" rx="0.4" ry="2.0" transform="rotate(-29 71.9 200.2)" fill="#5a6a58" opacity="0.60"/>
<ellipse cx="114.6" cy="220.0" rx="0.5" ry="1.9" transform="rotate(33 114.6 220.0)" fill="#a8bcb0" opacity="0.42"/>
<ellipse cx="67.7" cy="209.8" rx="0.5" ry="1.6" transform="rotate(24 67.7 209.8)" fill="#4a5a4a" opacity="0.74"/>
<ellipse cx="117.0" cy="220.3" rx="0.5" ry="1.1" transform="rotate(-31 117.0 220.3)" fill="#5a6a58" opacity="0.66"/>
<ellipse cx="94.8" cy="125.2" rx="0.4" ry="1.9" transform="rotate(32 94.8 125.2)" fill="#2a3a32" opacity="0.67"/>
<ellipse cx="18.6" cy="141.4" rx="0.7" ry="1.8" transform="rotate(24 18.6 141.4)" fill="#34463e" opacity="0.63"/>
<ellipse cx="42.8" cy="191.1" rx="0.7" ry="1.6" transform="rotate(6 42.8 191.1)" fill="#2a3a32" opacity="0.85"/>
<ellipse cx="65.3" cy="140.2" rx="0.7" ry="2.4" transform="rotate(9 65.3 140.2)" fill="#dceee8" opacity="0.62"/>
<ellipse cx="66.1" cy="168.6" rx="0.6" ry="1.8" transform="rotate(-13 66.1 168.6)" fill="#dceee8" opacity="0.72"/>
<ellipse cx="91.1" cy="141.1" rx="0.9" ry="1.7" transform="rotate(4 91.1 141.1)" fill="#c8e0d8" opacity="0.49"/>
<ellipse cx="71.0" cy="146.0" rx="0.7" ry="2.3" transform="rotate(-0 71.0 146.0)" fill="#6a5e40" opacity="0.66"/>
<ellipse cx="22.0" cy="138.6" rx="0.6" ry="1.3" transform="rotate(33 22.0 138.6)" fill="#c8e0d8" opacity="0.61"/>
<ellipse cx="25.1" cy="198.2" rx="0.7" ry="2.4" transform="rotate(-17 25.1 198.2)" fill="#6a5e40" opacity="0.82"/>
<ellipse cx="61.6" cy="167.8" rx="0.7" ry="1.4" transform="rotate(-24 61.6 167.8)" fill="#e8f4f0" opacity="0.69"/>
<ellipse cx="69.8" cy="213.9" rx="0.7" ry="2.5" transform="rotate(34 69.8 213.9)" fill="#e8f4f0" opacity="0.67"/>
<ellipse cx="101.3" cy="187.2" rx="0.4" ry="2.1" transform="rotate(-2 101.3 187.2)" fill="#dceee8" opacity="0.40"/>
<ellipse cx="102.5" cy="217.6" rx="0.9" ry="2.4" transform="rotate(8 102.5 217.6)" fill="#e8f4f0" opacity="0.67"/>
<ellipse cx="84.9" cy="107.0" rx="0.5" ry="1.5" transform="rotate(-15 84.9 107.0)" fill="#c8e0d8" opacity="0.45"/>
<ellipse cx="81.3" cy="195.1" rx="0.4" ry="2.1" transform="rotate(-26 81.3 195.1)" fill="#7a7048" opacity="0.75"/>
<ellipse cx="108.8" cy="194.3" rx="0.6" ry="2.0" transform="rotate(31 108.8 194.3)" fill="#c8e0d8" opacity="0.58"/>
<ellipse cx="57.1" cy="142.8" rx="0.7" ry="1.2" transform="rotate(34 57.1 142.8)" fill="#2a3a32" opacity="0.70"/>
<ellipse cx="28.6" cy="118.0" rx="0.7" ry="2.0" transform="rotate(-22 28.6 118.0)" fill="#6a5e40" opacity="0.61"/>
<ellipse cx="116.8" cy="140.0" rx="0.9" ry="1.9" transform="rotate(32 116.8 140.0)" fill="#c8e0d8" opacity="0.47"/>
<ellipse cx="98.8" cy="140.3" rx="0.8" ry="1.0" transform="rotate(-30 98.8 140.3)" fill="#5a6a58" opacity="0.90"/>
<ellipse cx="21.4" cy="192.8" rx="0.6" ry="1.2" transform="rotate(6 21.4 192.8)" fill="#4a5a4a" opacity="0.58"/>
<ellipse cx="23.5" cy="105.5" rx="0.5" ry="1.8" transform="rotate(25 23.5 105.5)" fill="#5a6a58" opacity="0.84"/>
<ellipse cx="114.5" cy="196.9" rx="0.8" ry="2.0" transform="rotate(-5 114.5 196.9)" fill="#c8e0d8" opacity="0.40"/>
<ellipse cx="75.4" cy="178.5" rx="0.4" ry="0.8" transform="rotate(-6 75.4 178.5)" fill="#b0c8c0" opacity="0.58"/>
<ellipse cx="35.5" cy="221.4" rx="0.8" ry="2.1" transform="rotate(-16 35.5 221.4)" fill="#2a3a32" opacity="0.72"/>
<ellipse cx="50.2" cy="194.1" rx="0.6" ry="1.0" transform="rotate(-5 50.2 194.1)" fill="#c8e0d8" opacity="0.53"/>
<ellipse cx="118.2" cy="209.2" rx="0.8" ry="1.9" transform="rotate(-2 118.2 209.2)" fill="#34463e" opacity="0.50"/>
<ellipse cx="122.5" cy="160.8" rx="0.7" ry="2.0" transform="rotate(10 122.5 160.8)" fill="#dceee8" opacity="0.51"/>
<ellipse cx="21.0" cy="187.1" rx="0.8" ry="1.5" transform="rotate(-7 21.0 187.1)" fill="#34463e" opacity="0.73"/>
<ellipse cx="94.2" cy="175.8" rx="0.6" ry="1.9" transform="rotate(-1 94.2 175.8)" fill="#2a3a32" opacity="0.84"/>
<ellipse cx="121.3" cy="113.9" rx="0.8" ry="1.8" transform="rotate(15 121.3 113.9)" fill="#2a3a32" opacity="0.83"/>
<ellipse cx="109.1" cy="122.8" rx="0.6" ry="1.5" transform="rotate(-4 109.1 122.8)" fill="#34463e" opacity="0.78"/>
<ellipse cx="64.5" cy="138.1" rx="0.8" ry="1.0" transform="rotate(9 64.5 138.1)" fill="#e8f4f0" opacity="0.70"/>
<ellipse cx="82.9" cy="167.3" rx="0.7" ry="1.5" transform="rotate(20 82.9 167.3)" fill="#a8bcb0" opacity="0.74"/>
<ellipse cx="95.3" cy="135.7" rx="0.7" ry="1.6" transform="rotate(12 95.3 135.7)" fill="#a8bcb0" opacity="0.61"/>
<ellipse cx="40.2" cy="194.5" rx="0.6" ry="0.8" transform="rotate(15 40.2 194.5)" fill="#7a7048" opacity="0.64"/>
<ellipse cx="98.0" cy="131.2" rx="0.8" ry="2.5" transform="rotate(-14 98.0 131.2)" fill="#2a3a32" opacity="0.85"/>
<ellipse cx="62.4" cy="160.8" rx="0.8" ry="1.9" transform="rotate(-8 62.4 160.8)" fill="#2a3a32" opacity="0.83"/>
<ellipse cx="97.5" cy="191.6" rx="0.5" ry="1.5" transform="rotate(13 97.5 191.6)" fill="#4a5a4a" opacity="0.60"/>
<ellipse cx="18.7" cy="192.3" rx="0.6" ry="2.2" transform="rotate(-33 18.7 192.3)" fill="#7a7048" opacity="0.70"/>
<ellipse cx="118.0" cy="139.6" rx="0.6" ry="2.3" transform="rotate(-15 118.0 139.6)" fill="#e8f4f0" opacity="0.62"/>
<ellipse cx="31.5" cy="174.1" rx="0.5" ry="0.8" transform="rotate(-4 31.5 174.1)" fill="#5a6a58" opacity="0.72"/>
<ellipse cx="62.3" cy="105.4" rx="0.6" ry="2.3" transform="rotate(13 62.3 105.4)" fill="#5a6a58" opacity="0.78"/>
<ellipse cx="45.3" cy="143.4" rx="0.8" ry="1.5" transform="rotate(-7 45.3 143.4)" fill="#34463e" opacity="0.72"/>
<ellipse cx="83.0" cy="202.5" rx="0.8" ry="1.0" transform="rotate(-27 83.0 202.5)" fill="#2a3a32" opacity="0.57"/>
<ellipse cx="95.1" cy="131.8" rx="0.6" ry="1.3" transform="rotate(12 95.1 131.8)" fill="#7a7048" opacity="0.73"/>
<ellipse cx="82.8" cy="143.9" rx="0.9" ry="0.8" transform="rotate(14 82.8 143.9)" fill="#2a3a32" opacity="0.84"/>
<ellipse cx="100.3" cy="133.9" rx="0.5" ry="1.9" transform="rotate(-19 100.3 133.9)" fill="#4a5a4a" opacity="0.59"/>
<ellipse cx="119.2" cy="141.3" rx="0.8" ry="1.9" transform="rotate(-22 119.2 141.3)" fill="#6a5e40" opacity="0.57"/>
<ellipse cx="66.6" cy="174.0" rx="0.5" ry="1.5" transform="rotate(-19 66.6 174.0)" fill="#4a5a4a" opacity="0.85"/>
<ellipse cx="92.9" cy="104.8" rx="0.4" ry="2.5" transform="rotate(13 92.9 104.8)" fill="#c8e0d8" opacity="0.66"/>
<ellipse cx="50.7" cy="172.6" rx="0.5" ry="0.9" transform="rotate(25 50.7 172.6)" fill="#e8f4f0" opacity="0.59"/>
<ellipse cx="18.2" cy="185.4" rx="0.4" ry="2.0" transform="rotate(-24 18.2 185.4)" fill="#4a5a4a" opacity="0.52"/>
<ellipse cx="99.4" cy="126.4" rx="0.5" ry="1.3" transform="rotate(-18 99.4 126.4)" fill="#2a3a32" opacity="0.64"/>
<ellipse cx="17.7" cy="137.5" rx="0.7" ry="1.0" transform="rotate(-24 17.7 137.5)" fill="#4a5a4a" opacity="0.57"/>
<ellipse cx="36.3" cy="166.6" rx="0.5" ry="2.1" transform="rotate(-4 36.3 166.6)" fill="#a8bcb0" opacity="0.67"/>
<ellipse cx="103.4" cy="143.9" rx="0.8" ry="2.2" transform="rotate(2 103.4 143.9)" fill="#6a5e40" opacity="0.71"/>
<ellipse cx="40.0" cy="101.8" rx="0.7" ry="1.6" transform="rotate(-32 40.0 101.8)" fill="#34463e" opacity="0.76"/>
<ellipse cx="55.3" cy="213.4" rx="0.6" ry="1.6" transform="rotate(17 55.3 213.4)" fill="#6a5e40" opacity="0.78"/>
<ellipse cx="75.2" cy="208.2" rx="0.7" ry="2.5" transform="rotate(-18 75.2 208.2)" fill="#dceee8" opacity="0.38"/>
<ellipse cx="71.1" cy="137.4" rx="0.5" ry="1.8" transform="rotate(32 71.1 137.4)" fill="#a8bcb0" opacity="0.49"/>
<ellipse cx="108.7" cy="198.0" rx="0.7" ry="2.4" transform="rotate(34 108.7 198.0)" fill="#c8e0d8" opacity="0.53"/>
<ellipse cx="74.5" cy="105.9" rx="0.5" ry="2.0" transform="rotate(28 74.5 105.9)" fill="#c8e0d8" opacity="0.54"/>
<ellipse cx="63.8" cy="166.4" rx="0.8" ry="0.8" transform="rotate(8 63.8 166.4)" fill="#5a6a58" opacity="0.87"/>
<ellipse cx="114.9" cy="173.9" rx="0.5" ry="1.8" transform="rotate(32 114.9 173.9)" fill="#4a5a4a" opacity="0.63"/>
<ellipse cx="84.1" cy="131.5" rx="0.8" ry="0.9" transform="rotate(-31 84.1 131.5)" fill="#dceee8" opacity="0.65"/>
<ellipse cx="31.0" cy="124.0" rx="0.8" ry="2.6" transform="rotate(10 31.0 124.0)" fill="#2a3a32" opacity="0.85"/>
<ellipse cx="112.4" cy="191.0" rx="0.7" ry="0.9" transform="rotate(30 112.4 191.0)" fill="#34463e" opacity="0.75"/>
<ellipse cx="57.0" cy="201.1" rx="0.4" ry="2.0" transform="rotate(-6 57.0 201.1)" fill="#7a7048" opacity="0.76"/>
<ellipse cx="79.2" cy="132.5" rx="0.5" ry="1.2" transform="rotate(-22 79.2 132.5)" fill="#34463e" opacity="0.53"/>
<ellipse cx="106.4" cy="185.9" rx="0.6" ry="0.8" transform="rotate(-13 106.4 185.9)" fill="#e8f4f0" opacity="0.72"/>
<ellipse cx="78.9" cy="114.1" rx="0.6" ry="1.5" transform="rotate(34 78.9 114.1)" fill="#34463e" opacity="0.51"/>
<ellipse cx="31.9" cy="172.5" rx="0.7" ry="2.0" transform="rotate(-34 31.9 172.5)" fill="#dceee8" opacity="0.43"/>
<ellipse cx="83.1" cy="154.6" rx="0.5" ry="0.9" transform="rotate(26 83.1 154.6)" fill="#34463e" opacity="0.53"/>
<ellipse cx="66.1" cy="203.7" rx="0.6" ry="2.4" transform="rotate(-10 66.1 203.7)" fill="#7a7048" opacity="0.57"/>
<ellipse cx="23.2" cy="133.3" rx="0.8" ry="1.1" transform="rotate(10 23.2 133.3)" fill="#34463e" opacity="0.60"/>
<ellipse cx="30.8" cy="141.4" rx="0.6" ry="1.1" transform="rotate(-19 30.8 141.4)" fill="#c8e0d8" opacity="0.59"/>
<ellipse cx="62.8" cy="108.1" rx="0.5" ry="1.5" transform="rotate(2 62.8 108.1)" fill="#34463e" opacity="0.57"/>
<ellipse cx="76.8" cy="162.0" rx="0.8" ry="0.9" transform="rotate(34 76.8 162.0)" fill="#6a5e40" opacity="0.62"/>
<ellipse cx="116.1" cy="151.4" rx="0.5" ry="2.0" transform="rotate(-15 116.1 151.4)" fill="#e8f4f0" opacity="0.47"/>
<ellipse cx="101.6" cy="208.3" rx="0.5" ry="1.3" transform="rotate(-32 101.6 208.3)" fill="#c8e0d8" opacity="0.71"/>
<ellipse cx="96.3" cy="196.3" rx="0.5" ry="1.4" transform="rotate(26 96.3 196.3)" fill="#dceee8" opacity="0.60"/>
<ellipse cx="75.7" cy="114.0" rx="0.8" ry="2.5" transform="rotate(7 75.7 114.0)" fill="#7a7048" opacity="0.64"/>
<ellipse cx="77.7" cy="209.4" rx="0.6" ry="1.1" transform="rotate(32 77.7 209.4)" fill="#e8f4f0" opacity="0.61"/>
<ellipse cx="76.4" cy="115.3" rx="0.9" ry="1.2" transform="rotate(6 76.4 115.3)" fill="#c8e0d8" opacity="0.52"/>
<ellipse cx="57.7" cy="132.2" rx="0.5" ry="2.0" transform="rotate(-9 57.7 132.2)" fill="#c8e0d8" opacity="0.46"/>
<ellipse cx="106.9" cy="123.6" rx="0.7" ry="2.0" transform="rotate(-27 106.9 123.6)" fill="#4a5a4a" opacity="0.79"/>
<ellipse cx="84.6" cy="157.2" rx="0.6" ry="1.2" transform="rotate(15 84.6 157.2)" fill="#34463e" opacity="0.53"/>
<ellipse cx="93.3" cy="205.2" rx="0.8" ry="1.2" transform="rotate(4 93.3 205.2)" fill="#e8f4f0" opacity="0.46"/>
<ellipse cx="99.6" cy="165.8" rx="0.5" ry="1.9" transform="rotate(-21 99.6 165.8)" fill="#7a7048" opacity="0.89"/>
<ellipse cx="19.8" cy="150.3" rx="0.7" ry="1.4" transform="rotate(12 19.8 150.3)" fill="#7a7048" opacity="0.58"/>
<ellipse cx="55.5" cy="214.7" rx="0.8" ry="1.8" transform="rotate(13 55.5 214.7)" fill="#7a7048" opacity="0.83"/>
<ellipse cx="55.8" cy="113.0" rx="0.8" ry="1.9" transform="rotate(-28 55.8 113.0)" fill="#c8e0d8" opacity="0.54"/>
<ellipse cx="33.1" cy="142.2" rx="0.7" ry="1.0" transform="rotate(-11 33.1 142.2)" fill="#7a7048" opacity="0.83"/>
<ellipse cx="94.0" cy="208.6" rx="0.6" ry="1.8" transform="rotate(-31 94.0 208.6)" fill="#5a6a58" opacity="0.60"/>
<ellipse cx="63.5" cy="134.5" rx="0.7" ry="1.3" transform="rotate(-2 63.5 134.5)" fill="#2a3a32" opacity="0.50"/>
<ellipse cx="70.5" cy="162.3" rx="0.9" ry="1.0" transform="rotate(-9 70.5 162.3)" fill="#2a3a32" opacity="0.64"/>
<ellipse cx="94.0" cy="108.2" rx="0.6" ry="2.5" transform="rotate(-7 94.0 108.2)" fill="#6a5e40" opacity="0.82"/>
<ellipse cx="58.6" cy="158.5" rx="0.7" ry="0.9" transform="rotate(-7 58.6 158.5)" fill="#34463e" opacity="0.52"/>
<ellipse cx="32.1" cy="117.5" rx="0.6" ry="2.0" transform="rotate(-25 32.1 117.5)" fill="#5a6a58" opacity="0.59"/>
<ellipse cx="57.1" cy="212.1" rx="0.5" ry="1.0" transform="rotate(-1 57.1 212.1)" fill="#c8e0d8" opacity="0.70"/>
<ellipse cx="111.3" cy="191.9" rx="0.9" ry="1.1" transform="rotate(-12 111.3 191.9)" fill="#7a7048" opacity="0.56"/>
<ellipse cx="46.1" cy="105.0" rx="0.7" ry="0.9" transform="rotate(-27 46.1 105.0)" fill="#e8f4f0" opacity="0.66"/>
<ellipse cx="66.3" cy="210.7" rx="0.6" ry="1.1" transform="rotate(29 66.3 210.7)" fill="#dceee8" opacity="0.68"/>
<ellipse cx="48.8" cy="150.8" rx="0.5" ry="1.6" transform="rotate(-24 48.8 150.8)" fill="#c8e0d8" opacity="0.52"/>
<ellipse cx="22.5" cy="150.7" rx="0.7" ry="2.3" transform="rotate(-18 22.5 150.7)" fill="#c8e0d8" opacity="0.68"/>
<ellipse cx="74.5" cy="134.2" rx="0.8" ry="2.1" transform="rotate(-23 74.5 134.2)" fill="#5a6a58" opacity="0.63"/>
<ellipse cx="52.0" cy="151.1" rx="0.5" ry="1.0" transform="rotate(-27 52.0 151.1)" fill="#dceee8" opacity="0.54"/>
<ellipse cx="104.4" cy="160.5" rx="0.7" ry="1.2" transform="rotate(-30 104.4 160.5)" fill="#b0c8c0" opacity="0.43"/>
<ellipse cx="42.5" cy="110.1" rx="0.8" ry="1.9" transform="rotate(19 42.5 110.1)" fill="#5a6a58" opacity="0.75"/>
<ellipse cx="119.8" cy="149.4" rx="0.5" ry="1.0" transform="rotate(20 119.8 149.4)" fill="#b0c8c0" opacity="0.71"/>
<ellipse cx="65.8" cy="168.6" rx="0.7" ry="1.5" transform="rotate(24 65.8 168.6)" fill="#7a7048" opacity="0.77"/>
<ellipse cx="42.9" cy="138.1" rx="0.5" ry="1.5" transform="rotate(-14 42.9 138.1)" fill="#2a3a32" opacity="0.87"/>
<ellipse cx="31.2" cy="178.1" rx="0.4" ry="1.7" transform="rotate(19 31.2 178.1)" fill="#c8e0d8" opacity="0.56"/>
<ellipse cx="23.2" cy="185.7" rx="0.6" ry="1.3" transform="rotate(21 23.2 185.7)" fill="#b0c8c0" opacity="0.72"/>
<ellipse cx="38.4" cy="169.6" rx="0.8" ry="0.9" transform="rotate(-27 38.4 169.6)" fill="#e8f4f0" opacity="0.43"/>
<ellipse cx="80.5" cy="100.9" rx="0.6" ry="1.7" transform="rotate(-13 80.5 100.9)" fill="#5a6a58" opacity="0.70"/>
<ellipse cx="43.6" cy="115.5" rx="0.5" ry="1.9" transform="rotate(-11 43.6 115.5)" fill="#a8bcb0" opacity="0.40"/>
<ellipse cx="86.2" cy="161.5" rx="0.8" ry="1.8" transform="rotate(34 86.2 161.5)" fill="#5a6a58" opacity="0.56"/>
<ellipse cx="118.3" cy="193.0" rx="0.7" ry="1.0" transform="rotate(-13 118.3 193.0)" fill="#e8f4f0" opacity="0.40"/>
<ellipse cx="109.2" cy="198.9" rx="0.4" ry="2.3" transform="rotate(20 109.2 198.9)" fill="#a8bcb0" opacity="0.58"/>
<ellipse cx="31.5" cy="104.8" rx="0.7" ry="1.1" transform="rotate(-25 31.5 104.8)" fill="#4a5a4a" opacity="0.55"/>
<ellipse cx="83.2" cy="174.6" rx="0.4" ry="1.8" transform="rotate(-35 83.2 174.6)" fill="#4a5a4a" opacity="0.82"/>
<ellipse cx="110.6" cy="107.6" rx="0.7" ry="1.5" transform="rotate(12 110.6 107.6)" fill="#7a7048" opacity="0.74"/>
<ellipse cx="37.8" cy="156.3" rx="0.7" ry="1.9" transform="rotate(3 37.8 156.3)" fill="#7a7048" opacity="0.69"/>
<ellipse cx="73.7" cy="159.7" rx="0.8" ry="1.1" transform="rotate(-8 73.7 159.7)" fill="#dceee8" opacity="0.68"/>
<ellipse cx="120.5" cy="121.1" rx="0.5" ry="1.0" transform="rotate(-20 120.5 121.1)" fill="#e8f4f0" opacity="0.72"/>
<ellipse cx="40.7" cy="210.6" rx="0.5" ry="1.0" transform="rotate(29 40.7 210.6)" fill="#e8f4f0" opacity="0.69"/>
<ellipse cx="106.6" cy="165.7" rx="0.7" ry="2.2" transform="rotate(19 106.6 165.7)" fill="#6a5e40" opacity="0.51"/>
<ellipse cx="117.8" cy="207.6" rx="0.9" ry="1.8" transform="rotate(2 117.8 207.6)" fill="#dceee8" opacity="0.41"/>
<ellipse cx="74.9" cy="210.0" rx="0.6" ry="1.4" transform="rotate(-33 74.9 210.0)" fill="#dceee8" opacity="0.69"/>
<ellipse cx="49.3" cy="116.0" rx="0.4" ry="1.0" transform="rotate(-23 49.3 116.0)" fill="#5a6a58" opacity="0.65"/>
<ellipse cx="97.9" cy="127.6" rx="0.4" ry="1.6" transform="rotate(-9 97.9 127.6)" fill="#c8e0d8" opacity="0.43"/>
<ellipse cx="106.0" cy="104.5" rx="0.8" ry="1.3" transform="rotate(21 106.0 104.5)" fill="#34463e" opacity="0.69"/>
<ellipse cx="114.4" cy="173.5" rx="0.8" ry="1.2" transform="rotate(34 114.4 173.5)" fill="#c8e0d8" opacity="0.42"/>
<ellipse cx="29.0" cy="136.5" rx="0.8" ry="2.4" transform="rotate(-21 29.0 136.5)" fill="#5a6a58" opacity="0.77"/>
<ellipse cx="70.6" cy="105.3" rx="0.8" ry="0.9" transform="rotate(-7 70.6 105.3)" fill="#4a5a4a" opacity="0.82"/>
<ellipse cx="60.5" cy="150.1" rx="0.4" ry="0.9" transform="rotate(-19 60.5 150.1)" fill="#5a6a58" opacity="0.64"/>
<ellipse cx="60.1" cy="166.7" rx="0.4" ry="1.6" transform="rotate(-9 60.1 166.7)" fill="#5a6a58" opacity="0.72"/>
<ellipse cx="78.2" cy="197.8" rx="0.5" ry="1.3" transform="rotate(-14 78.2 197.8)" fill="#5a6a58" opacity="0.52"/>
<ellipse cx="19.2" cy="158.6" rx="0.4" ry="1.7" transform="rotate(-4 19.2 158.6)" fill="#34463e" opacity="0.64"/>
<ellipse cx="26.9" cy="196.4" rx="0.6" ry="1.3" transform="rotate(-8 26.9 196.4)" fill="#6a5e40" opacity="0.54"/>
<ellipse cx="119.6" cy="185.5" rx="0.7" ry="1.8" transform="rotate(-3 119.6 185.5)" fill="#dceee8" opacity="0.62"/>
<ellipse cx="72.2" cy="200.6" rx="0.7" ry="1.8" transform="rotate(23 72.2 200.6)" fill="#c8e0d8" opacity="0.68"/>
<ellipse cx="111.1" cy="173.3" rx="0.5" ry="1.8" transform="rotate(-23 111.1 173.3)" fill="#34463e" opacity="0.88"/>
<ellipse cx="96.7" cy="159.6" rx="0.8" ry="1.4" transform="rotate(-5 96.7 159.6)" fill="#b0c8c0" opacity="0.68"/>
<ellipse cx="56.5" cy="184.9" rx="0.7" ry="2.5" transform="rotate(-3 56.5 184.9)" fill="#c8e0d8" opacity="0.51"/>
<ellipse cx="91.0" cy="108.6" rx="0.9" ry="2.4" transform="rotate(-28 91.0 108.6)" fill="#2a3a32" opacity="0.64"/>
<ellipse cx="29.3" cy="154.3" rx="0.7" ry="1.5" transform="rotate(-22 29.3 154.3)" fill="#7a7048" opacity="0.70"/>
<ellipse cx="72.2" cy="115.5" rx="0.5" ry="2.3" transform="rotate(29 72.2 115.5)" fill="#34463e" opacity="0.87"/>
<ellipse cx="42.2" cy="156.0" rx="0.7" ry="1.3" transform="rotate(11 42.2 156.0)" fill="#a8bcb0" opacity="0.63"/>
<ellipse cx="29.9" cy="214.6" rx="0.4" ry="1.0" transform="rotate(-28 29.9 214.6)" fill="#c8e0d8" opacity="0.61"/>
<ellipse cx="109.5" cy="167.0" rx="0.8" ry="1.7" transform="rotate(15 109.5 167.0)" fill="#4a5a4a" opacity="0.89"/>
<ellipse cx="98.1" cy="162.2" rx="0.5" ry="2.1" transform="rotate(14 98.1 162.2)" fill="#5a6a58" opacity="0.74"/>
<ellipse cx="43.5" cy="216.9" rx="0.8" ry="2.5" transform="rotate(32 43.5 216.9)" fill="#7a7048" opacity="0.88"/>
<ellipse cx="106.8" cy="200.8" rx="0.4" ry="2.1" transform="rotate(30 106.8 200.8)" fill="#34463e" opacity="0.85"/>
<ellipse cx="58.1" cy="162.5" rx="0.7" ry="1.6" transform="rotate(34 58.1 162.5)" fill="#c8e0d8" opacity="0.71"/>
<ellipse cx="87.2" cy="185.0" rx="0.8" ry="1.5" transform="rotate(18 87.2 185.0)" fill="#7a7048" opacity="0.89"/>
<ellipse cx="59.3" cy="216.0" rx="0.4" ry="1.0" transform="rotate(3 59.3 216.0)" fill="#6a5e40" opacity="0.77"/>
<ellipse cx="58.6" cy="129.4" rx="0.5" ry="1.9" transform="rotate(22 58.6 129.4)" fill="#2a3a32" opacity="0.89"/>
<ellipse cx="102.1" cy="182.1" rx="0.6" ry="1.4" transform="rotate(8 102.1 182.1)" fill="#dceee8" opacity="0.64"/>
<ellipse cx="23.6" cy="181.3" rx="0.6" ry="1.6" transform="rotate(-31 23.6 181.3)" fill="#7a7048" opacity="0.72"/>
<ellipse cx="23.9" cy="213.3" rx="0.7" ry="1.9" transform="rotate(-34 23.9 213.3)" fill="#e8f4f0" opacity="0.53"/>
<ellipse cx="108.3" cy="174.9" rx="0.6" ry="1.7" transform="rotate(-12 108.3 174.9)" fill="#34463e" opacity="0.76"/>
<ellipse cx="37.2" cy="103.3" rx="0.4" ry="1.5" transform="rotate(28 37.2 103.3)" fill="#2a3a32" opacity="0.68"/>
<ellipse cx="50.9" cy="142.6" rx="0.7" ry="2.4" transform="rotate(-30 50.9 142.6)" fill="#e8f4f0" opacity="0.48"/>
<ellipse cx="95.6" cy="191.3" rx="0.9" ry="1.4" transform="rotate(21 95.6 191.3)" fill="#5a6a58" opacity="0.67"/>
<ellipse cx="36.9" cy="164.8" rx="0.6" ry="2.0" transform="rotate(-6 36.9 164.8)" fill="#34463e" opacity="0.71"/>
<ellipse cx="107.5" cy="174.8" rx="0.8" ry="1.3" transform="rotate(-11 107.5 174.8)" fill="#b0c8c0" opacity="0.38"/>
<ellipse cx="98.4" cy="185.9" rx="0.8" ry="1.0" transform="rotate(-31 98.4 185.9)" fill="#4a5a4a" opacity="0.80"/>
<ellipse cx="105.9" cy="221.7" rx="0.6" ry="1.6" transform="rotate(-27 105.9 221.7)" fill="#dceee8" opacity="0.68"/>
<ellipse cx="57.0" cy="137.8" rx="0.7" ry="0.9" transform="rotate(-8 57.0 137.8)" fill="#c8e0d8" opacity="0.74"/>
<ellipse cx="43.8" cy="126.0" rx="0.7" ry="2.6" transform="rotate(24 43.8 126.0)" fill="#5a6a58" opacity="0.67"/>
<ellipse cx="38.4" cy="191.4" rx="0.4" ry="0.9" transform="rotate(6 38.4 191.4)" fill="#b0c8c0" opacity="0.39"/>
<ellipse cx="117.5" cy="114.7" rx="0.8" ry="1.0" transform="rotate(23 117.5 114.7)" fill="#a8bcb0" opacity="0.58"/>
<ellipse cx="98.3" cy="190.0" rx="0.7" ry="0.9" transform="rotate(14 98.3 190.0)" fill="#e8f4f0" opacity="0.36"/>
<ellipse cx="115.0" cy="183.1" rx="0.8" ry="2.1" transform="rotate(-6 115.0 183.1)" fill="#7a7048" opacity="0.57"/>
<ellipse cx="29.5" cy="162.9" rx="0.6" ry="1.0" transform="rotate(-14 29.5 162.9)" fill="#b0c8c0" opacity="0.63"/>
<ellipse cx="37.9" cy="212.9" rx="0.4" ry="1.9" transform="rotate(34 37.9 212.9)" fill="#34463e" opacity="0.80"/>
<ellipse cx="33.5" cy="105.1" rx="0.4" ry="1.3" transform="rotate(35 33.5 105.1)" fill="#5a6a58" opacity="0.66"/>
<ellipse cx="17.9" cy="204.1" rx="0.6" ry="2.5" transform="rotate(-9 17.9 204.1)" fill="#5a6a58" opacity="0.67"/>
<ellipse cx="104.5" cy="165.0" rx="0.5" ry="1.7" transform="rotate(8 104.5 165.0)" fill="#34463e" opacity="0.64"/>
<ellipse cx="29.5" cy="139.0" rx="0.9" ry="2.5" transform="rotate(-24 29.5 139.0)" fill="#dceee8" opacity="0.45"/>
<ellipse cx="114.8" cy="166.1" rx="0.7" ry="1.1" transform="rotate(-20 114.8 166.1)" fill="#4a5a4a" opacity="0.84"/>
<ellipse cx="16.3" cy="212.7" rx="0.8" ry="1.2" transform="rotate(31 16.3 212.7)" fill="#b0c8c0" opacity="0.37"/>
<ellipse cx="40.1" cy="143.6" rx="0.8" ry="1.3" transform="rotate(22 40.1 143.6)" fill="#2a3a32" opacity="0.68"/>
<ellipse cx="42.1" cy="147.8" rx="0.6" ry="1.2" transform="rotate(-9 42.1 147.8)" fill="#c8e0d8" opacity="0.57"/>
<ellipse cx="31.2" cy="159.2" rx="0.4" ry="1.8" transform="rotate(-15 31.2 159.2)" fill="#c8e0d8" opacity="0.54"/>
<ellipse cx="90.2" cy="150.7" rx="0.8" ry="1.6" transform="rotate(9 90.2 150.7)" fill="#34463e" opacity="0.52"/>
<ellipse cx="121.0" cy="128.3" rx="0.5" ry="0.8" transform="rotate(-20 121.0 128.3)" fill="#6a5e40" opacity="0.88"/>
<ellipse cx="24.9" cy="198.6" rx="0.5" ry="0.8" transform="rotate(32 24.9 198.6)" fill="#6a5e40" opacity="0.67"/>
<ellipse cx="18.6" cy="130.7" rx="0.6" ry="1.1" transform="rotate(-14 18.6 130.7)" fill="#a8bcb0" opacity="0.40"/>
<ellipse cx="19.0" cy="206.6" rx="0.8" ry="1.7" transform="rotate(-22 19.0 206.6)" fill="#e8f4f0" opacity="0.70"/>
<ellipse cx="105.0" cy="138.3" rx="0.5" ry="2.6" transform="rotate(-2 105.0 138.3)" fill="#6a5e40" opacity="0.81"/>
<ellipse cx="62.1" cy="206.4" rx="0.7" ry="1.3" transform="rotate(30 62.1 206.4)" fill="#dceee8" opacity="0.70"/>
<ellipse cx="22.8" cy="182.9" rx="0.6" ry="1.8" transform="rotate(4 22.8 182.9)" fill="#a8bcb0" opacity="0.60"/>
<ellipse cx="122.2" cy="192.7" rx="0.6" ry="1.6" transform="rotate(25 122.2 192.7)" fill="#2a3a32" opacity="0.80"/>
<ellipse cx="21.9" cy="196.8" rx="0.5" ry="2.1" transform="rotate(13 21.9 196.8)" fill="#6a5e40" opacity="0.83"/>
<ellipse cx="70.4" cy="180.1" rx="0.7" ry="2.4" transform="rotate(8 70.4 180.1)" fill="#34463e" opacity="0.83"/>
<ellipse cx="33.1" cy="133.3" rx="0.4" ry="1.8" transform="rotate(5 33.1 133.3)" fill="#a8bcb0" opacity="0.73"/>
<ellipse cx="53.1" cy="110.9" rx="0.7" ry="0.9" transform="rotate(-17 53.1 110.9)" fill="#dceee8" opacity="0.59"/>
<ellipse cx="59.8" cy="214.4" rx="0.8" ry="1.0" transform="rotate(-6 59.8 214.4)" fill="#2a3a32" opacity="0.58"/>
<ellipse cx="58.9" cy="179.2" rx="0.8" ry="2.4" transform="rotate(8 58.9 179.2)" fill="#4a5a4a" opacity="0.60"/>
<ellipse cx="46.0" cy="174.2" rx="0.8" ry="2.0" transform="rotate(26 46.0 174.2)" fill="#2a3a32" opacity="0.60"/>
<ellipse cx="53.0" cy="217.3" rx="0.8" ry="2.1" transform="rotate(-32 53.0 217.3)" fill="#4a5a4a" opacity="0.82"/>
<ellipse cx="78.3" cy="129.7" rx="0.5" ry="2.2" transform="rotate(-25 78.3 129.7)" fill="#2a3a32" opacity="0.81"/>
<ellipse cx="54.9" cy="214.6" rx="0.7" ry="1.9" transform="rotate(30 54.9 214.6)" fill="#dceee8" opacity="0.59"/>
<ellipse cx="50.7" cy="146.0" rx="0.8" ry="1.1" transform="rotate(-8 50.7 146.0)" fill="#2a3a32" opacity="0.90"/>
<ellipse cx="87.2" cy="129.1" rx="0.7" ry="1.7" transform="rotate(3 87.2 129.1)" fill="#2a3a32" opacity="0.84"/>
<ellipse cx="75.2" cy="183.1" rx="0.6" ry="1.8" transform="rotate(-14 75.2 183.1)" fill="#5a6a58" opacity="0.74"/>
<ellipse cx="27.4" cy="215.1" rx="0.8" ry="1.1" transform="rotate(-3 27.4 215.1)" fill="#6a5e40" opacity="0.71"/>
<ellipse cx="25.1" cy="127.3" rx="0.8" ry="1.1" transform="rotate(11 25.1 127.3)" fill="#2a3a32" opacity="0.50"/>
<ellipse cx="78.6" cy="183.9" rx="0.7" ry="1.7" transform="rotate(-25 78.6 183.9)" fill="#e8f4f0" opacity="0.54"/>
<ellipse cx="72.3" cy="133.2" rx="0.5" ry="2.2" transform="rotate(3 72.3 133.2)" fill="#4a5a4a" opacity="0.75"/>
<ellipse cx="55.9" cy="152.6" rx="0.6" ry="2.6" transform="rotate(32 55.9 152.6)" fill="#a8bcb0" opacity="0.42"/>
<ellipse cx="122.5" cy="176.0" rx="0.8" ry="2.2" transform="rotate(-13 122.5 176.0)" fill="#34463e" opacity="0.55"/>
<ellipse cx="40.6" cy="194.0" rx="0.7" ry="1.8" transform="rotate(9 40.6 194.0)" fill="#e8f4f0" opacity="0.59"/>
<ellipse cx="75.9" cy="110.2" rx="0.5" ry="1.7" transform="rotate(33 75.9 110.2)" fill="#c8e0d8" opacity="0.52"/>
<ellipse cx="70.7" cy="143.4" rx="0.7" ry="1.1" transform="rotate(15 70.7 143.4)" fill="#2a3a32" opacity="0.57"/>
<ellipse cx="122.7" cy="110.0" rx="0.4" ry="2.4" transform="rotate(-21 122.7 110.0)" fill="#c8e0d8" opacity="0.57"/>
<ellipse cx="100.0" cy="219.5" rx="0.7" ry="1.0" transform="rotate(26 100.0 219.5)" fill="#b0c8c0" opacity="0.53"/>
<ellipse cx="66.4" cy="167.6" rx="0.7" ry="2.6" transform="rotate(-22 66.4 167.6)" fill="#a8bcb0" opacity="0.52"/>
<ellipse cx="52.5" cy="162.8" rx="0.6" ry="1.7" transform="rotate(-11 52.5 162.8)" fill="#7a7048" opacity="0.60"/>
<ellipse cx="38.3" cy="127.6" rx="0.9" ry="1.9" transform="rotate(10 38.3 127.6)" fill="#4a5a4a" opacity="0.69"/>
<ellipse cx="34.9" cy="175.8" rx="0.6" ry="2.6" transform="rotate(-5 34.9 175.8)" fill="#b0c8c0" opacity="0.49"/>
<ellipse cx="122.2" cy="174.3" rx="0.7" ry="1.5" transform="rotate(-4 122.2 174.3)" fill="#e8f4f0" opacity="0.70"/>
<ellipse cx="71.9" cy="166.9" rx="0.4" ry="2.6" transform="rotate(-29 71.9 166.9)" fill="#2a3a32" opacity="0.80"/>
<ellipse cx="21.6" cy="200.5" rx="0.6" ry="1.0" transform="rotate(30 21.6 200.5)" fill="#34463e" opacity="0.82"/>
<ellipse cx="118.9" cy="139.5" rx="0.7" ry="2.5" transform="rotate(-1 118.9 139.5)" fill="#e8f4f0" opacity="0.48"/>
<ellipse cx="107.5" cy="172.3" rx="0.5" ry="1.7" transform="rotate(-9 107.5 172.3)" fill="#a8bcb0" opacity="0.45"/>
<ellipse cx="114.9" cy="158.9" rx="0.4" ry="1.2" transform="rotate(-1 114.9 158.9)" fill="#6a5e40" opacity="0.80"/>
<ellipse cx="81.7" cy="105.8" rx="0.7" ry="2.0" transform="rotate(-19 81.7 105.8)" fill="#6a5e40" opacity="0.78"/>
<ellipse cx="96.3" cy="222.5" rx="0.4" ry="1.1" transform="rotate(1 96.3 222.5)" fill="#6a5e40" opacity="0.68"/>
<ellipse cx="85.1" cy="111.8" rx="0.8" ry="2.4" transform="rotate(-33 85.1 111.8)" fill="#34463e" opacity="0.52"/>
<ellipse cx="79.0" cy="139.6" rx="0.8" ry="1.8" transform="rotate(-4 79.0 139.6)" fill="#5a6a58" opacity="0.75"/>
<ellipse cx="105.7" cy="196.4" rx="0.7" ry="1.2" transform="rotate(-29 105.7 196.4)" fill="#34463e" opacity="0.84"/>
<ellipse cx="43.1" cy="100.0" rx="0.6" ry="2.2" transform="rotate(-3 43.1 100.0)" fill="#7a7048" opacity="0.88"/>
<ellipse cx="58.7" cy="114.4" rx="0.6" ry="1.7" transform="rotate(-13 58.7 114.4)" fill="#b0c8c0" opacity="0.63"/>
<ellipse cx="57.9" cy="194.8" rx="0.7" ry="1.6" transform="rotate(23 57.9 194.8)" fill="#6a5e40" opacity="0.62"/>
<ellipse cx="110.3" cy="101.2" rx="0.8" ry="1.6" transform="rotate(13 110.3 101.2)" fill="#5a6a58" opacity="0.67"/>
<ellipse cx="75.0" cy="112.0" rx="0.4" ry="1.9" transform="rotate(-5 75.0 112.0)" fill="#4a5a4a" opacity="0.80"/>
<ellipse cx="54.0" cy="170.1" rx="0.9" ry="0.8" transform="rotate(-26 54.0 170.1)" fill="#e8f4f0" opacity="0.44"/>
<ellipse cx="119.2" cy="144.6" rx="0.6" ry="1.8" transform="rotate(-23 119.2 144.6)" fill="#7a7048" opacity="0.70"/>
<ellipse cx="64.2" cy="101.4" rx="0.5" ry="1.8" transform="rotate(-34 64.2 101.4)" fill="#2a3a32" opacity="0.69"/>
<ellipse cx="71.9" cy="126.7" rx="0.7" ry="1.6" transform="rotate(7 71.9 126.7)" fill="#b0c8c0" opacity="0.56"/>
<ellipse cx="76.3" cy="179.1" rx="0.8" ry="1.0" transform="rotate(-21 76.3 179.1)" fill="#5a6a58" opacity="0.65"/>
<ellipse cx="111.7" cy="211.3" rx="0.7" ry="1.2" transform="rotate(11 111.7 211.3)" fill="#5a6a58" opacity="0.54"/>
<ellipse cx="74.8" cy="174.3" rx="0.5" ry="0.8" transform="rotate(28 74.8 174.3)" fill="#2a3a32" opacity="0.57"/>
<ellipse cx="66.0" cy="161.8" rx="0.8" ry="2.2" transform="rotate(18 66.0 161.8)" fill="#5a6a58" opacity="0.75"/>
<ellipse cx="93.6" cy="219.5" rx="0.5" ry="1.2" transform="rotate(-15 93.6 219.5)" fill="#6a5e40" opacity="0.71"/>
<ellipse cx="40.9" cy="198.6" rx="0.9" ry="1.7" transform="rotate(-16 40.9 198.6)" fill="#4a5a4a" opacity="0.50"/>
<ellipse cx="30.7" cy="211.0" rx="0.9" ry="1.1" transform="rotate(11 30.7 211.0)" fill="#b0c8c0" opacity="0.67"/>
<ellipse cx="53.2" cy="178.6" rx="0.4" ry="1.7" transform="rotate(-23 53.2 178.6)" fill="#5a6a58" opacity="0.83"/>
<ellipse cx="56.5" cy="160.5" rx="0.8" ry="1.6" transform="rotate(30 56.5 160.5)" fill="#b0c8c0" opacity="0.62"/>
<ellipse cx="121.3" cy="173.6" rx="0.7" ry="2.1" transform="rotate(31 121.3 173.6)" fill="#a8bcb0" opacity="0.52"/>
<ellipse cx="109.5" cy="121.3" rx="0.6" ry="1.5" transform="rotate(26 109.5 121.3)" fill="#5a6a58" opacity="0.53"/>
<ellipse cx="122.4" cy="141.5" rx="0.5" ry="1.8" transform="rotate(25 122.4 141.5)" fill="#5a6a58" opacity="0.75"/>
<ellipse cx="66.3" cy="156.8" rx="0.6" ry="1.1" transform="rotate(17 66.3 156.8)" fill="#5a6a58" opacity="0.67"/>
<ellipse cx="84.5" cy="155.4" rx="0.8" ry="1.3" transform="rotate(11 84.5 155.4)" fill="#dceee8" opacity="0.59"/>
<ellipse cx="53.2" cy="203.8" rx="0.5" ry="2.1" transform="rotate(-23 53.2 203.8)" fill="#6a5e40" opacity="0.77"/>
<ellipse cx="57.2" cy="145.9" rx="0.5" ry="2.0" transform="rotate(-24 57.2 145.9)" fill="#4a5a4a" opacity="0.60"/>
<ellipse cx="100.0" cy="131.7" rx="0.9" ry="2.3" transform="rotate(14 100.0 131.7)" fill="#2a3a32" opacity="0.85"/>
<ellipse cx="115.5" cy="150.2" rx="0.6" ry="1.5" transform="rotate(5 115.5 150.2)" fill="#34463e" opacity="0.51"/>
<ellipse cx="119.7" cy="159.6" rx="0.5" ry="1.9" transform="rotate(24 119.7 159.6)" fill="#c8e0d8" opacity="0.54"/>
<ellipse cx="87.3" cy="128.2" rx="0.7" ry="1.2" transform="rotate(17 87.3 128.2)" fill="#6a5e40" opacity="0.73"/>
<ellipse cx="107.2" cy="140.2" rx="0.4" ry="2.5" transform="rotate(12 107.2 140.2)" fill="#34463e" opacity="0.71"/>
<ellipse cx="51.2" cy="188.7" rx="0.7" ry="1.9" transform="rotate(24 51.2 188.7)" fill="#7a7048" opacity="0.79"/>
<ellipse cx="56.3" cy="127.9" rx="0.8" ry="1.7" transform="rotate(-33 56.3 127.9)" fill="#7a7048" opacity="0.55"/>
<ellipse cx="33.1" cy="110.7" rx="0.6" ry="1.1" transform="rotate(12 33.1 110.7)" fill="#c8e0d8" opacity="0.56"/>
<ellipse cx="71.1" cy="184.4" rx="0.8" ry="1.5" transform="rotate(22 71.1 184.4)" fill="#4a5a4a" opacity="0.51"/>
<ellipse cx="27.3" cy="152.6" rx="0.5" ry="2.3" transform="rotate(-3 27.3 152.6)" fill="#2a3a32" opacity="0.78"/>
<ellipse cx="62.6" cy="115.7" rx="0.6" ry="2.0" transform="rotate(-23 62.6 115.7)" fill="#2a3a32" opacity="0.69"/>
<ellipse cx="88.6" cy="104.2" rx="0.5" ry="1.4" transform="rotate(-8 88.6 104.2)" fill="#34463e" opacity="0.82"/>
<ellipse cx="49.8" cy="192.2" rx="0.9" ry="0.9" transform="rotate(-31 49.8 192.2)" fill="#6a5e40" opacity="0.50"/>
<ellipse cx="110.0" cy="166.5" rx="0.8" ry="1.8" transform="rotate(26 110.0 166.5)" fill="#a8bcb0" opacity="0.67"/>
<ellipse cx="83.2" cy="111.1" rx="0.6" ry="1.7" transform="rotate(-20 83.2 111.1)" fill="#e8f4f0" opacity="0.61"/>
<ellipse cx="72.3" cy="105.8" rx="0.8" ry="2.5" transform="rotate(33 72.3 105.8)" fill="#7a7048" opacity="0.75"/>
<ellipse cx="51.4" cy="162.7" rx="0.4" ry="2.2" transform="rotate(-7 51.4 162.7)" fill="#7a7048" opacity="0.66"/>
<ellipse cx="66.2" cy="132.7" rx="0.6" ry="1.9" transform="rotate(-29 66.2 132.7)" fill="#7a7048" opacity="0.56"/>
<ellipse cx="110.3" cy="104.6" rx="0.6" ry="2.4" transform="rotate(-32 110.3 104.6)" fill="#e8f4f0" opacity="0.47"/>
<ellipse cx="113.6" cy="160.9" rx="0.6" ry="2.5" transform="rotate(-8 113.6 160.9)" fill="#a8bcb0" opacity="0.63"/>
<ellipse cx="27.6" cy="206.1" rx="0.5" ry="1.1" transform="rotate(-16 27.6 206.1)" fill="#2a3a32" opacity="0.57"/>
<ellipse cx="20.4" cy="179.0" rx="0.5" ry="2.5" transform="rotate(12 20.4 179.0)" fill="#b0c8c0" opacity="0.64"/>
<ellipse cx="28.8" cy="166.3" rx="0.7" ry="1.0" transform="rotate(-15 28.8 166.3)" fill="#b0c8c0" opacity="0.73"/>
<ellipse cx="22.0" cy="121.8" rx="0.4" ry="1.9" transform="rotate(9 22.0 121.8)" fill="#34463e" opacity="0.82"/>
<ellipse cx="55.0" cy="189.9" rx="0.7" ry="2.0" transform="rotate(-26 55.0 189.9)" fill="#34463e" opacity="0.65"/>
<ellipse cx="43.6" cy="194.3" rx="0.4" ry="2.2" transform="rotate(-21 43.6 194.3)" fill="#e8f4f0" opacity="0.63"/>
<ellipse cx="34.4" cy="138.7" rx="0.6" ry="1.2" transform="rotate(-9 34.4 138.7)" fill="#c8e0d8" opacity="0.65"/>
<ellipse cx="33.0" cy="155.7" rx="0.8" ry="1.0" transform="rotate(5 33.0 155.7)" fill="#4a5a4a" opacity="0.86"/>
<ellipse cx="85.5" cy="202.1" rx="0.5" ry="1.5" transform="rotate(-35 85.5 202.1)" fill="#a8bcb0" opacity="0.54"/>
<ellipse cx="120.6" cy="140.5" rx="0.6" ry="2.4" transform="rotate(28 120.6 140.5)" fill="#2a3a32" opacity="0.61"/>
<ellipse cx="19.1" cy="173.6" rx="0.5" ry="2.2" transform="rotate(16 19.1 173.6)" fill="#7a7048" opacity="0.72"/>
<ellipse cx="87.3" cy="153.4" rx="0.4" ry="1.3" transform="rotate(29 87.3 153.4)" fill="#4a5a4a" opacity="0.89"/>
<ellipse cx="117.3" cy="213.9" rx="0.6" ry="1.3" transform="rotate(-31 117.3 213.9)" fill="#dceee8" opacity="0.66"/>
<ellipse cx="47.8" cy="201.2" rx="0.7" ry="1.2" transform="rotate(-4 47.8 201.2)" fill="#34463e" opacity="0.64"/>
<ellipse cx="81.6" cy="166.0" rx="0.5" ry="1.3" transform="rotate(2 81.6 166.0)" fill="#e8f4f0" opacity="0.57"/>
<ellipse cx="32.7" cy="158.9" rx="0.6" ry="1.1" transform="rotate(34 32.7 158.9)" fill="#5a6a58" opacity="0.90"/>
<ellipse cx="56.1" cy="220.7" rx="0.9" ry="1.8" transform="rotate(21 56.1 220.7)" fill="#a8bcb0" opacity="0.64"/>
<ellipse cx="121.5" cy="197.3" rx="0.9" ry="2.5" transform="rotate(-25 121.5 197.3)" fill="#4a5a4a" opacity="0.64"/>
<ellipse cx="88.0" cy="217.0" rx="0.6" ry="1.4" transform="rotate(2 88.0 217.0)" fill="#a8bcb0" opacity="0.67"/>
<ellipse cx="21.6" cy="112.7" rx="0.7" ry="1.4" transform="rotate(-5 21.6 112.7)" fill="#b0c8c0" opacity="0.58"/>
<ellipse cx="38.6" cy="204.1" rx="0.9" ry="0.8" transform="rotate(10 38.6 204.1)" fill="#b0c8c0" opacity="0.54"/>
<ellipse cx="52.2" cy="183.1" rx="0.7" ry="1.1" transform="rotate(-2 52.2 183.1)" fill="#34463e" opacity="0.79"/>
<ellipse cx="98.6" cy="143.3" rx="0.7" ry="1.9" transform="rotate(20 98.6 143.3)" fill="#34463e" opacity="0.70"/>
<ellipse cx="34.3" cy="116.7" rx="0.6" ry="1.9" transform="rotate(15 34.3 116.7)" fill="#6a5e40" opacity="0.66"/>
<ellipse cx="28.4" cy="107.9" rx="0.6" ry="1.9" transform="rotate(7 28.4 107.9)" fill="#6a5e40" opacity="0.59"/>
<ellipse cx="53.4" cy="116.4" rx="0.4" ry="2.1" transform="rotate(-1 53.4 116.4)" fill="#b0c8c0" opacity="0.35"/>
<ellipse cx="83.0" cy="106.2" rx="0.7" ry="0.8" transform="rotate(-3 83.0 106.2)" fill="#6a5e40" opacity="0.58"/>
<ellipse cx="23.5" cy="116.1" rx="0.6" ry="2.2" transform="rotate(-0 23.5 116.1)" fill="#5a6a58" opacity="0.73"/>
<ellipse cx="113.3" cy="158.7" rx="0.4" ry="1.9" transform="rotate(-15 113.3 158.7)" fill="#2a3a32" opacity="0.57"/>
<ellipse cx="113.6" cy="126.4" rx="0.6" ry="1.9" transform="rotate(-22 113.6 126.4)" fill="#34463e" opacity="0.75"/>
<ellipse cx="114.1" cy="130.5" rx="0.4" ry="1.2" transform="rotate(7 114.1 130.5)" fill="#a8bcb0" opacity="0.44"/>
<ellipse cx="90.3" cy="206.7" rx="0.7" ry="1.8" transform="rotate(13 90.3 206.7)" fill="#dceee8" opacity="0.67"/>
<ellipse cx="44.5" cy="216.0" rx="0.4" ry="1.8" transform="rotate(-31 44.5 216.0)" fill="#6a5e40" opacity="0.53"/>
<ellipse cx="109.8" cy="217.9" rx="0.6" ry="1.5" transform="rotate(-35 109.8 217.9)" fill="#5a6a58" opacity="0.75"/>
<ellipse cx="49.1" cy="107.3" rx="0.8" ry="1.4" transform="rotate(8 49.1 107.3)" fill="#34463e" opacity="0.50"/>
<ellipse cx="66.1" cy="123.8" rx="0.6" ry="2.2" transform="rotate(18 66.1 123.8)" fill="#e8f4f0" opacity="0.49"/>
<ellipse cx="95.2" cy="142.6" rx="0.6" ry="0.9" transform="rotate(-15 95.2 142.6)" fill="#6a5e40" opacity="0.67"/>
<ellipse cx="101.2" cy="104.1" rx="0.7" ry="2.1" transform="rotate(13 101.2 104.1)" fill="#34463e" opacity="0.79"/>
<ellipse cx="114.3" cy="172.7" rx="0.5" ry="1.7" transform="rotate(-9 114.3 172.7)" fill="#a8bcb0" opacity="0.53"/>
<ellipse cx="22.7" cy="170.6" rx="0.7" ry="1.2" transform="rotate(-35 22.7 170.6)" fill="#4a5a4a" opacity="0.75"/>
<ellipse cx="58.4" cy="183.3" rx="0.7" ry="1.4" transform="rotate(-8 58.4 183.3)" fill="#34463e" opacity="0.87"/>
<ellipse cx="63.4" cy="201.7" rx="0.6" ry="2.4" transform="rotate(34 63.4 201.7)" fill="#7a7048" opacity="0.70"/>
<ellipse cx="103.0" cy="181.8" rx="0.7" ry="1.5" transform="rotate(-32 103.0 181.8)" fill="#c8e0d8" opacity="0.74"/>
<ellipse cx="99.3" cy="172.7" rx="0.9" ry="2.4" transform="rotate(6 99.3 172.7)" fill="#dceee8" opacity="0.64"/>
<ellipse cx="25.7" cy="218.8" rx="0.6" ry="1.7" transform="rotate(-1 25.7 218.8)" fill="#5a6a58" opacity="0.51"/>
<ellipse cx="32.4" cy="120.6" rx="0.8" ry="1.7" transform="rotate(-16 32.4 120.6)" fill="#7a7048" opacity="0.62"/>
<ellipse cx="48.1" cy="217.2" rx="0.4" ry="1.1" transform="rotate(-12 48.1 217.2)" fill="#7a7048" opacity="0.73"/>
<ellipse cx="89.4" cy="200.0" rx="0.7" ry="0.9" transform="rotate(-16 89.4 200.0)" fill="#5a6a58" opacity="0.51"/>
<ellipse cx="25.4" cy="191.8" rx="0.9" ry="1.7" transform="rotate(-11 25.4 191.8)" fill="#5a6a58" opacity="0.79"/>
<ellipse cx="22.6" cy="109.2" rx="0.5" ry="0.9" transform="rotate(35 22.6 109.2)" fill="#dceee8" opacity="0.57"/>
<ellipse cx="47.6" cy="165.6" rx="0.4" ry="1.0" transform="rotate(16 47.6 165.6)" fill="#34463e" opacity="0.73"/>
<ellipse cx="49.6" cy="150.4" rx="0.8" ry="0.9" transform="rotate(-34 49.6 150.4)" fill="#2a3a32" opacity="0.73"/>
<ellipse cx="80.6" cy="222.6" rx="0.7" ry="1.9" transform="rotate(24 80.6 222.6)" fill="#7a7048" opacity="0.65"/>
<ellipse cx="113.9" cy="217.5" rx="0.4" ry="2.5" transform="rotate(34 113.9 217.5)" fill="#6a5e40" opacity="0.58"/>
<ellipse cx="106.5" cy="179.2" rx="0.4" ry="1.7" transform="rotate(-16 106.5 179.2)" fill="#5a6a58" opacity="0.55"/>
<ellipse cx="98.6" cy="187.8" rx="0.4" ry="1.7" transform="rotate(-30 98.6 187.8)" fill="#5a6a58" opacity="0.66"/>
<ellipse cx="112.3" cy="164.1" rx="0.8" ry="1.2" transform="rotate(-10 112.3 164.1)" fill="#6a5e40" opacity="0.63"/>
<ellipse cx="55.3" cy="125.3" rx="0.5" ry="1.9" transform="rotate(10 55.3 125.3)" fill="#6a5e40" opacity="0.69"/>
<ellipse cx="39.1" cy="205.6" rx="0.5" ry="1.6" transform="rotate(-29 39.1 205.6)" fill="#e8f4f0" opacity="0.64"/>
<ellipse cx="47.1" cy="140.9" rx="0.7" ry="2.3" transform="rotate(-20 47.1 140.9)" fill="#5a6a58" opacity="0.65"/>
<ellipse cx="97.2" cy="118.2" rx="0.7" ry="1.4" transform="rotate(-22 97.2 118.2)" fill="#c8e0d8" opacity="0.40"/>
<ellipse cx="105.2" cy="202.5" rx="0.6" ry="1.1" transform="rotate(31 105.2 202.5)" fill="#c8e0d8" opacity="0.37"/>
<ellipse cx="50.4" cy="174.9" rx="0.8" ry="1.1" transform="rotate(-13 50.4 174.9)" fill="#5a6a58" opacity="0.58"/>
<ellipse cx="28.0" cy="153.5" rx="0.8" ry="1.4" transform="rotate(-26 28.0 153.5)" fill="#2a3a32" opacity="0.54"/>
<ellipse cx="23.2" cy="218.3" rx="0.5" ry="1.0" transform="rotate(-7 23.2 218.3)" fill="#2a3a32" opacity="0.71"/>
<ellipse cx="35.1" cy="177.0" rx="0.5" ry="0.9" transform="rotate(8 35.1 177.0)" fill="#34463e" opacity="0.89"/>
<ellipse cx="118.6" cy="197.7" rx="0.8" ry="1.4" transform="rotate(13 118.6 197.7)" fill="#c8e0d8" opacity="0.75"/>
<ellipse cx="69.3" cy="110.0" rx="0.6" ry="1.1" transform="rotate(25 69.3 110.0)" fill="#c8e0d8" opacity="0.51"/>
<ellipse cx="50.3" cy="104.8" rx="0.5" ry="2.2" transform="rotate(-5 50.3 104.8)" fill="#34463e" opacity="0.79"/>
<ellipse cx="120.2" cy="193.9" rx="0.7" ry="1.9" transform="rotate(32 120.2 193.9)" fill="#c8e0d8" opacity="0.51"/>
<ellipse cx="104.3" cy="140.9" rx="0.4" ry="2.2" transform="rotate(-17 104.3 140.9)" fill="#e8f4f0" opacity="0.75"/>
<ellipse cx="113.9" cy="166.6" rx="0.9" ry="2.4" transform="rotate(-26 113.9 166.6)" fill="#5a6a58" opacity="0.85"/>
<ellipse cx="54.1" cy="197.0" rx="0.6" ry="1.5" transform="rotate(13 54.1 197.0)" fill="#a8bcb0" opacity="0.58"/>
<ellipse cx="40.2" cy="201.8" rx="0.8" ry="0.8" transform="rotate(-20 40.2 201.8)" fill="#dceee8" opacity="0.63"/>
<ellipse cx="99.5" cy="187.4" rx="0.6" ry="1.0" transform="rotate(21 99.5 187.4)" fill="#6a5e40" opacity="0.88"/>
<ellipse cx="56.7" cy="192.8" rx="0.5" ry="1.5" transform="rotate(-21 56.7 192.8)" fill="#34463e" opacity="0.85"/>
<ellipse cx="69.3" cy="192.5" rx="0.8" ry="2.1" transform="rotate(33 69.3 192.5)" fill="#dceee8" opacity="0.69"/>
<ellipse cx="25.7" cy="149.5" rx="0.8" ry="1.0" transform="rotate(-25 25.7 149.5)" fill="#34463e" opacity="0.87"/>
<ellipse cx="21.0" cy="124.5" rx="0.4" ry="1.1" transform="rotate(-5 21.0 124.5)" fill="#34463e" opacity="0.75"/>
<ellipse cx="89.6" cy="174.9" rx="0.8" ry="1.8" transform="rotate(-17 89.6 174.9)" fill="#5a6a58" opacity="0.60"/>
<ellipse cx="64.9" cy="197.4" rx="0.4" ry="2.2" transform="rotate(-14 64.9 197.4)" fill="#c8e0d8" opacity="0.52"/>
<ellipse cx="75.4" cy="187.6" rx="0.5" ry="1.7" transform="rotate(16 75.4 187.6)" fill="#7a7048" opacity="0.60"/>
<ellipse cx="33.7" cy="146.3" rx="0.8" ry="2.4" transform="rotate(34 33.7 146.3)" fill="#c8e0d8" opacity="0.51"/>
<ellipse cx="75.2" cy="221.2" rx="0.8" ry="2.4" transform="rotate(9 75.2 221.2)" fill="#c8e0d8" opacity="0.38"/>
<ellipse cx="79.1" cy="207.5" rx="0.7" ry="1.5" transform="rotate(-29 79.1 207.5)" fill="#b0c8c0" opacity="0.60"/>
<ellipse cx="53.2" cy="205.5" rx="0.6" ry="2.5" transform="rotate(7 53.2 205.5)" fill="#b0c8c0" opacity="0.38"/>
<ellipse cx="43.6" cy="180.4" rx="0.6" ry="2.4" transform="rotate(-9 43.6 180.4)" fill="#5a6a58" opacity="0.54"/>
<ellipse cx="101.5" cy="121.7" rx="0.4" ry="2.5" transform="rotate(-9 101.5 121.7)" fill="#4a5a4a" opacity="0.59"/>
<ellipse cx="91.0" cy="103.2" rx="0.5" ry="2.3" transform="rotate(15 91.0 103.2)" fill="#4a5a4a" opacity="0.72"/>
<ellipse cx="73.5" cy="145.3" rx="0.6" ry="1.4" transform="rotate(25 73.5 145.3)" fill="#4a5a4a" opacity="0.87"/>
<ellipse cx="111.0" cy="160.7" rx="0.7" ry="1.2" transform="rotate(17 111.0 160.7)" fill="#a8bcb0" opacity="0.62"/>
<ellipse cx="17.9" cy="163.5" rx="0.4" ry="2.1" transform="rotate(-32 17.9 163.5)" fill="#34463e" opacity="0.68"/>
<ellipse cx="73.4" cy="102.8" rx="0.5" ry="1.0" transform="rotate(29 73.4 102.8)" fill="#2a3a32" opacity="0.89"/>
<ellipse cx="110.0" cy="100.9" rx="0.9" ry="1.7" transform="rotate(20 110.0 100.9)" fill="#7a7048" opacity="0.66"/>
<ellipse cx="24.7" cy="168.4" rx="0.8" ry="2.2" transform="rotate(18 24.7 168.4)" fill="#34463e" opacity="0.89"/>
<ellipse cx="61.2" cy="170.1" rx="0.8" ry="2.0" transform="rotate(-19 61.2 170.1)" fill="#a8bcb0" opacity="0.36"/>
<ellipse cx="47.5" cy="158.0" rx="0.6" ry="2.4" transform="rotate(32 47.5 158.0)" fill="#2a3a32" opacity="0.81"/>
<ellipse cx="25.0" cy="110.4" rx="0.7" ry="1.2" transform="rotate(-14 25.0 110.4)" fill="#34463e" opacity="0.63"/>
<ellipse cx="101.2" cy="179.6" rx="0.8" ry="1.8" transform="rotate(25 101.2 179.6)" fill="#c8e0d8" opacity="0.67"/>
<ellipse cx="60.9" cy="108.5" rx="0.7" ry="1.7" transform="rotate(22 60.9 108.5)" fill="#6a5e40" opacity="0.80"/>
<ellipse cx="107.3" cy="202.1" rx="0.5" ry="1.2" transform="rotate(17 107.3 202.1)" fill="#34463e" opacity="0.88"/>
<ellipse cx="103.5" cy="142.6" rx="0.5" ry="2.4" transform="rotate(-24 103.5 142.6)" fill="#b0c8c0" opacity="0.60"/>
<ellipse cx="105.2" cy="216.3" rx="0.7" ry="1.0" transform="rotate(-5 105.2 216.3)" fill="#7a7048" opacity="0.71"/>
<ellipse cx="101.6" cy="213.7" rx="0.4" ry="2.4" transform="rotate(-33 101.6 213.7)" fill="#5a6a58" opacity="0.86"/>
<ellipse cx="93.4" cy="216.8" rx="0.6" ry="1.8" transform="rotate(28 93.4 216.8)" fill="#5a6a58" opacity="0.76"/>
<ellipse cx="102.8" cy="141.3" rx="0.4" ry="0.8" transform="rotate(22 102.8 141.3)" fill="#34463e" opacity="0.59"/>
<ellipse cx="56.4" cy="146.9" rx="0.8" ry="1.4" transform="rotate(17 56.4 146.9)" fill="#dceee8" opacity="0.45"/>
<ellipse cx="86.6" cy="107.7" rx="0.6" ry="1.6" transform="rotate(-17 86.6 107.7)" fill="#6a5e40" opacity="0.77"/>
<ellipse cx="120.4" cy="157.8" rx="0.9" ry="1.3" transform="rotate(-25 120.4 157.8)" fill="#6a5e40" opacity="0.58"/>
<ellipse cx="57.4" cy="208.0" rx="0.7" ry="2.1" transform="rotate(-8 57.4 208.0)" fill="#b0c8c0" opacity="0.41"/>
<ellipse cx="112.9" cy="203.4" rx="0.7" ry="1.8" transform="rotate(-20 112.9 203.4)" fill="#dceee8" opacity="0.69"/>
<ellipse cx="111.9" cy="196.5" rx="0.9" ry="1.6" transform="rotate(-1 111.9 196.5)" fill="#5a6a58" opacity="0.88"/>
<ellipse cx="99.7" cy="205.5" rx="0.4" ry="1.7" transform="rotate(-3 99.7 205.5)" fill="#2a3a32" opacity="0.68"/>
<ellipse cx="98.5" cy="148.7" rx="0.7" ry="2.0" transform="rotate(-22 98.5 148.7)" fill="#34463e" opacity="0.57"/>
<ellipse cx="59.8" cy="160.2" rx="0.7" ry="1.2" transform="rotate(-35 59.8 160.2)" fill="#7a7048" opacity="0.60"/>
<ellipse cx="105.6" cy="114.7" rx="0.7" ry="1.9" transform="rotate(17 105.6 114.7)" fill="#a8bcb0" opacity="0.74"/>
<ellipse cx="28.1" cy="189.6" rx="0.7" ry="0.8" transform="rotate(-35 28.1 189.6)" fill="#6a5e40" opacity="0.67"/>
<ellipse cx="70.1" cy="170.2" rx="0.7" ry="2.0" transform="rotate(5 70.1 170.2)" fill="#6a5e40" opacity="0.63"/>
<ellipse cx="116.6" cy="153.7" rx="0.9" ry="2.0" transform="rotate(10 116.6 153.7)" fill="#7a7048" opacity="0.75"/>
<ellipse cx="52.7" cy="151.2" rx="0.7" ry="1.9" transform="rotate(22 52.7 151.2)" fill="#c8e0d8" opacity="0.69"/>
<ellipse cx="47.1" cy="119.5" rx="0.7" ry="2.2" transform="rotate(34 47.1 119.5)" fill="#4a5a4a" opacity="0.72"/>
<ellipse cx="79.2" cy="150.8" rx="0.7" ry="1.7" transform="rotate(25 79.2 150.8)" fill="#dceee8" opacity="0.66"/>
<ellipse cx="43.0" cy="150.2" rx="0.6" ry="2.4" transform="rotate(29 43.0 150.2)" fill="#a8bcb0" opacity="0.60"/>
<ellipse cx="57.4" cy="187.7" rx="0.5" ry="1.6" transform="rotate(16 57.4 187.7)" fill="#c8e0d8" opacity="0.56"/>
<ellipse cx="75.0" cy="197.9" rx="0.7" ry="2.0" transform="rotate(25 75.0 197.9)" fill="#6a5e40" opacity="0.73"/>
<ellipse cx="97.5" cy="147.5" rx="0.4" ry="1.9" transform="rotate(-34 97.5 147.5)" fill="#7a7048" opacity="0.53"/>
<ellipse cx="94.9" cy="179.3" rx="0.5" ry="1.4" transform="rotate(8 94.9 179.3)" fill="#7a7048" opacity="0.55"/>
<ellipse cx="81.1" cy="165.5" rx="0.6" ry="2.5" transform="rotate(-2 81.1 165.5)" fill="#5a6a58" opacity="0.57"/>
<ellipse cx="77.5" cy="161.4" rx="0.7" ry="1.6" transform="rotate(-29 77.5 161.4)" fill="#4a5a4a" opacity="0.55"/>
<ellipse cx="41.1" cy="218.0" rx="0.6" ry="1.2" transform="rotate(0 41.1 218.0)" fill="#6a5e40" opacity="0.89"/>
<ellipse cx="102.2" cy="167.5" rx="0.7" ry="1.6" transform="rotate(29 102.2 167.5)" fill="#6a5e40" opacity="0.55"/>
<ellipse cx="42.2" cy="215.0" rx="0.5" ry="1.2" transform="rotate(-31 42.2 215.0)" fill="#7a7048" opacity="0.73"/>
<ellipse cx="105.2" cy="177.8" rx="0.6" ry="1.2" transform="rotate(-8 105.2 177.8)" fill="#dceee8" opacity="0.55"/>
<ellipse cx="35.2" cy="190.0" rx="0.5" ry="1.6" transform="rotate(-2 35.2 190.0)" fill="#dceee8" opacity="0.47"/>
<ellipse cx="71.4" cy="170.5" rx="0.9" ry="2.0" transform="rotate(-28 71.4 170.5)" fill="#7a7048" opacity="0.55"/>
<ellipse cx="56.9" cy="201.6" rx="0.7" ry="1.3" transform="rotate(25 56.9 201.6)" fill="#dceee8" opacity="0.43"/>
<ellipse cx="81.2" cy="115.2" rx="0.9" ry="1.7" transform="rotate(6 81.2 115.2)" fill="#2a3a32" opacity="0.89"/>
<ellipse cx="104.9" cy="215.8" rx="0.8" ry="1.7" transform="rotate(31 104.9 215.8)" fill="#4a5a4a" opacity="0.65"/>
<ellipse cx="23.2" cy="147.2" rx="0.6" ry="2.2" transform="rotate(25 23.2 147.2)" fill="#c8e0d8" opacity="0.55"/>
<ellipse cx="91.8" cy="163.0" rx="0.8" ry="1.2" transform="rotate(27 91.8 163.0)" fill="#6a5e40" opacity="0.84"/>
<ellipse cx="20.1" cy="161.0" rx="0.8" ry="1.0" transform="rotate(-5 20.1 161.0)" fill="#5a6a58" opacity="0.87"/>
<ellipse cx="38.2" cy="190.8" rx="0.7" ry="1.6" transform="rotate(-12 38.2 190.8)" fill="#6a5e40" opacity="0.60"/>
<ellipse cx="97.9" cy="220.8" rx="0.7" ry="2.5" transform="rotate(18 97.9 220.8)" fill="#4a5a4a" opacity="0.66"/>
<ellipse cx="66.9" cy="155.6" rx="0.5" ry="0.8" transform="rotate(-13 66.9 155.6)" fill="#6a5e40" opacity="0.90"/>
<ellipse cx="41.7" cy="190.5" rx="0.8" ry="1.0" transform="rotate(-11 41.7 190.5)" fill="#b0c8c0" opacity="0.60"/>
<ellipse cx="94.6" cy="136.0" rx="0.7" ry="2.0" transform="rotate(9 94.6 136.0)" fill="#a8bcb0" opacity="0.71"/>
<ellipse cx="38.6" cy="168.9" rx="0.9" ry="2.2" transform="rotate(-16 38.6 168.9)" fill="#c8e0d8" opacity="0.60"/>
<ellipse cx="87.4" cy="121.8" rx="0.7" ry="0.8" transform="rotate(-30 87.4 121.8)" fill="#34463e" opacity="0.85"/>
<ellipse cx="110.3" cy="167.2" rx="0.8" ry="1.7" transform="rotate(19 110.3 167.2)" fill="#6a5e40" opacity="0.60"/>
<ellipse cx="95.7" cy="203.9" rx="0.7" ry="2.2" transform="rotate(-28 95.7 203.9)" fill="#5a6a58" opacity="0.70"/>
<ellipse cx="88.1" cy="118.4" rx="0.6" ry="2.4" transform="rotate(-15 88.1 118.4)" fill="#c8e0d8" opacity="0.59"/>
<ellipse cx="104.6" cy="131.2" rx="0.4" ry="1.8" transform="rotate(-11 104.6 131.2)" fill="#a8bcb0" opacity="0.70"/>
<ellipse cx="89.8" cy="197.2" rx="0.4" ry="1.3" transform="rotate(-4 89.8 197.2)" fill="#34463e" opacity="0.61"/>
<ellipse cx="55.1" cy="102.4" rx="0.7" ry="2.3" transform="rotate(-14 55.1 102.4)" fill="#c8e0d8" opacity="0.59"/>
<ellipse cx="97.6" cy="134.8" rx="0.8" ry="0.9" transform="rotate(-32 97.6 134.8)" fill="#6a5e40" opacity="0.87"/>
<ellipse cx="89.7" cy="131.7" rx="0.6" ry="1.7" transform="rotate(-27 89.7 131.7)" fill="#b0c8c0" opacity="0.56"/>
<ellipse cx="39.4" cy="107.8" rx="0.8" ry="1.7" transform="rotate(26 39.4 107.8)" fill="#34463e" opacity="0.73"/>
<ellipse cx="115.0" cy="149.6" rx="0.7" ry="2.2" transform="rotate(2 115.0 149.6)" fill="#5a6a58" opacity="0.73"/>
<ellipse cx="71.5" cy="180.6" rx="0.9" ry="1.1" transform="rotate(35 71.5 180.6)" fill="#6a5e40" opacity="0.79"/>
<ellipse cx="86.2" cy="194.8" rx="0.9" ry="1.5" transform="rotate(22 86.2 194.8)" fill="#b0c8c0" opacity="0.41"/>
<ellipse cx="118.3" cy="168.9" rx="0.8" ry="1.1" transform="rotate(2 118.3 168.9)" fill="#e8f4f0" opacity="0.36"/>
<ellipse cx="73.3" cy="100.6" rx="0.4" ry="0.9" transform="rotate(5 73.3 100.6)" fill="#34463e" opacity="0.80"/>
<ellipse cx="80.8" cy="165.5" rx="0.5" ry="1.0" transform="rotate(4 80.8 165.5)" fill="#34463e" opacity="0.81"/>
<ellipse cx="94.2" cy="114.3" rx="0.6" ry="2.0" transform="rotate(-24 94.2 114.3)" fill="#4a5a4a" opacity="0.66"/>
<ellipse cx="100.5" cy="144.3" rx="0.5" ry="1.6" transform="rotate(3 100.5 144.3)" fill="#e8f4f0" opacity="0.42"/>
<ellipse cx="113.7" cy="141.4" rx="0.8" ry="2.2" transform="rotate(-26 113.7 141.4)" fill="#34463e" opacity="0.60"/>
<ellipse cx="49.5" cy="119.8" rx="0.7" ry="2.3" transform="rotate(-24 49.5 119.8)" fill="#6a5e40" opacity="0.59"/>
<ellipse cx="95.9" cy="190.6" rx="0.8" ry="1.7" transform="rotate(21 95.9 190.6)" fill="#5a6a58" opacity="0.80"/>
<ellipse cx="103.2" cy="151.5" rx="0.9" ry="2.3" transform="rotate(-6 103.2 151.5)" fill="#34463e" opacity="0.74"/>
<ellipse cx="21.9" cy="178.6" rx="0.5" ry="1.4" transform="rotate(23 21.9 178.6)" fill="#e8f4f0" opacity="0.39"/>
<ellipse cx="81.3" cy="143.1" rx="0.5" ry="2.0" transform="rotate(1 81.3 143.1)" fill="#2a3a32" opacity="0.85"/>
<ellipse cx="65.0" cy="146.3" rx="0.5" ry="2.3" transform="rotate(16 65.0 146.3)" fill="#b0c8c0" opacity="0.74"/>
<ellipse cx="44.2" cy="189.0" rx="0.8" ry="1.2" transform="rotate(-6 44.2 189.0)" fill="#5a6a58" opacity="0.70"/>
<ellipse cx="33.8" cy="160.3" rx="0.8" ry="1.7" transform="rotate(15 33.8 160.3)" fill="#a8bcb0" opacity="0.64"/>
<ellipse cx="20.7" cy="182.1" rx="0.4" ry="1.2" transform="rotate(0 20.7 182.1)" fill="#e8f4f0" opacity="0.63"/>
<ellipse cx="50.6" cy="139.6" rx="0.8" ry="1.6" transform="rotate(-23 50.6 139.6)" fill="#6a5e40" opacity="0.80"/>
<ellipse cx="17.4" cy="206.0" rx="0.8" ry="2.0" transform="rotate(6 17.4 206.0)" fill="#4a5a4a" opacity="0.73"/>
<ellipse cx="111.8" cy="195.1" rx="0.9" ry="2.0" transform="rotate(14 111.8 195.1)" fill="#c8e0d8" opacity="0.64"/>
<ellipse cx="33.2" cy="117.0" rx="0.7" ry="2.5" transform="rotate(30 33.2 117.0)" fill="#c8e0d8" opacity="0.67"/>
<ellipse cx="120.9" cy="161.2" rx="0.4" ry="1.8" transform="rotate(-2 120.9 161.2)" fill="#7a7048" opacity="0.72"/>
<ellipse cx="54.5" cy="201.9" rx="0.5" ry="1.5" transform="rotate(-9 54.5 201.9)" fill="#2a3a32" opacity="0.52"/>
<ellipse cx="101.0" cy="203.6" rx="0.5" ry="2.5" transform="rotate(-27 101.0 203.6)" fill="#7a7048" opacity="0.77"/>
<ellipse cx="95.1" cy="143.3" rx="0.6" ry="1.3" transform="rotate(-27 95.1 143.3)" fill="#7a7048" opacity="0.76"/>
<ellipse cx="96.5" cy="105.6" rx="0.4" ry="1.3" transform="rotate(22 96.5 105.6)" fill="#b0c8c0" opacity="0.36"/>
<ellipse cx="41.9" cy="220.3" rx="0.7" ry="1.2" transform="rotate(1 41.9 220.3)" fill="#dceee8" opacity="0.70"/>
<ellipse cx="108.3" cy="185.5" rx="0.9" ry="1.6" transform="rotate(17 108.3 185.5)" fill="#c8e0d8" opacity="0.73"/>
<ellipse cx="43.1" cy="122.3" rx="0.6" ry="2.1" transform="rotate(0 43.1 122.3)" fill="#b0c8c0" opacity="0.64"/>
<ellipse cx="117.5" cy="190.8" rx="0.6" ry="1.8" transform="rotate(-27 117.5 190.8)" fill="#a8bcb0" opacity="0.63"/>
<ellipse cx="105.8" cy="173.0" rx="0.9" ry="2.4" transform="rotate(-10 105.8 173.0)" fill="#a8bcb0" opacity="0.55"/>
<ellipse cx="96.6" cy="122.6" rx="0.9" ry="2.3" transform="rotate(19 96.6 122.6)" fill="#34463e" opacity="0.85"/>
<ellipse cx="24.7" cy="140.2" rx="0.6" ry="1.5" transform="rotate(-9 24.7 140.2)" fill="#6a5e40" opacity="0.53"/>
<ellipse cx="23.4" cy="115.4" rx="0.6" ry="1.9" transform="rotate(-5 23.4 115.4)" fill="#a8bcb0" opacity="0.50"/>
<ellipse cx="21.6" cy="198.4" rx="0.7" ry="2.3" transform="rotate(32 21.6 198.4)" fill="#2a3a32" opacity="0.75"/>
<ellipse cx="71.9" cy="184.7" rx="0.5" ry="0.8" transform="rotate(29 71.9 184.7)" fill="#34463e" opacity="0.82"/>
<ellipse cx="31.7" cy="185.6" rx="0.7" ry="1.2" transform="rotate(-14 31.7 185.6)" fill="#6a5e40" opacity="0.57"/>
<ellipse cx="92.1" cy="208.7" rx="0.5" ry="1.1" transform="rotate(-30 92.1 208.7)" fill="#34463e" opacity="0.89"/>
<ellipse cx="48.5" cy="187.1" rx="0.5" ry="2.2" transform="rotate(-1 48.5 187.1)" fill="#6a5e40" opacity="0.64"/>
<ellipse cx="69.6" cy="104.1" rx="0.8" ry="1.3" transform="rotate(1 69.6 104.1)" fill="#5a6a58" opacity="0.65"/>
<ellipse cx="109.3" cy="123.3" rx="0.7" ry="2.3" transform="rotate(32 109.3 123.3)" fill="#e8f4f0" opacity="0.74"/>
<ellipse cx="101.6" cy="123.1" rx="0.5" ry="2.1" transform="rotate(-34 101.6 123.1)" fill="#34463e" opacity="0.67"/>
<ellipse cx="45.1" cy="213.2" rx="0.6" ry="1.4" transform="rotate(-12 45.1 213.2)" fill="#4a5a4a" opacity="0.73"/>
<ellipse cx="67.5" cy="164.0" rx="0.5" ry="2.2" transform="rotate(-18 67.5 164.0)" fill="#4a5a4a" opacity="0.57"/>
<ellipse cx="60.3" cy="113.1" rx="0.6" ry="2.0" transform="rotate(-21 60.3 113.1)" fill="#2a3a32" opacity="0.87"/>
<ellipse cx="81.4" cy="174.1" rx="0.5" ry="1.1" transform="rotate(-24 81.4 174.1)" fill="#6a5e40" opacity="0.75"/>
<ellipse cx="95.2" cy="179.9" rx="0.9" ry="1.9" transform="rotate(-8 95.2 179.9)" fill="#4a5a4a" opacity="0.86"/>
<ellipse cx="112.2" cy="191.9" rx="0.4" ry="1.0" transform="rotate(-23 112.2 191.9)" fill="#4a5a4a" opacity="0.77"/>
<ellipse cx="107.7" cy="165.5" rx="0.5" ry="0.9" transform="rotate(33 107.7 165.5)" fill="#4a5a4a" opacity="0.54"/>
<ellipse cx="108.1" cy="196.8" rx="0.8" ry="1.0" transform="rotate(3 108.1 196.8)" fill="#5a6a58" opacity="0.89"/>
<ellipse cx="19.0" cy="183.6" rx="0.5" ry="1.7" transform="rotate(-8 19.0 183.6)" fill="#c8e0d8" opacity="0.37"/>
<ellipse cx="88.5" cy="189.1" rx="0.5" ry="1.4" transform="rotate(-34 88.5 189.1)" fill="#34463e" opacity="0.85"/>
<ellipse cx="38.5" cy="161.0" rx="0.9" ry="1.4" transform="rotate(13 38.5 161.0)" fill="#34463e" opacity="0.58"/>
<ellipse cx="76.0" cy="160.5" rx="0.9" ry="1.5" transform="rotate(12 76.0 160.5)" fill="#a8bcb0" opacity="0.63"/>
<ellipse cx="96.2" cy="115.3" rx="0.7" ry="1.4" transform="rotate(-24 96.2 115.3)" fill="#5a6a58" opacity="0.80"/>
<ellipse cx="43.7" cy="222.5" rx="0.7" ry="2.2" transform="rotate(29 43.7 222.5)" fill="#b0c8c0" opacity="0.55"/>
<ellipse cx="19.7" cy="148.6" rx="0.8" ry="1.9" transform="rotate(2 19.7 148.6)" fill="#4a5a4a" opacity="0.57"/>
<ellipse cx="44.7" cy="119.8" rx="0.5" ry="1.6" transform="rotate(13 44.7 119.8)" fill="#2a3a32" opacity="0.90"/>
<ellipse cx="62.6" cy="102.8" rx="0.7" ry="0.8" transform="rotate(2 62.6 102.8)" fill="#2a3a32" opacity="0.53"/>
<ellipse cx="106.5" cy="203.5" rx="0.5" ry="2.5" transform="rotate(24 106.5 203.5)" fill="#b0c8c0" opacity="0.69"/>
<ellipse cx="35.0" cy="186.8" rx="0.5" ry="1.3" transform="rotate(33 35.0 186.8)" fill="#5a6a58" opacity="0.78"/>
<ellipse cx="21.6" cy="115.0" rx="0.5" ry="2.2" transform="rotate(-20 21.6 115.0)" fill="#6a5e40" opacity="0.51"/>
<ellipse cx="38.0" cy="141.3" rx="0.7" ry="2.5" transform="rotate(-18 38.0 141.3)" fill="#dceee8" opacity="0.75"/>
<ellipse cx="115.6" cy="152.2" rx="0.6" ry="1.3" transform="rotate(-4 115.6 152.2)" fill="#7a7048" opacity="0.90"/>
<ellipse cx="48.1" cy="119.1" rx="0.5" ry="2.2" transform="rotate(-5 48.1 119.1)" fill="#7a7048" opacity="0.69"/>
<ellipse cx="73.0" cy="164.2" rx="0.8" ry="0.9" transform="rotate(4 73.0 164.2)" fill="#34463e" opacity="0.89"/>
<ellipse cx="97.6" cy="101.2" rx="0.5" ry="2.6" transform="rotate(-23 97.6 101.2)" fill="#4a5a4a" opacity="0.69"/>
<ellipse cx="35.3" cy="185.1" rx="0.4" ry="2.0" transform="rotate(-4 35.3 185.1)" fill="#c8e0d8" opacity="0.47"/>
<ellipse cx="113.0" cy="200.5" rx="0.6" ry="1.4" transform="rotate(28 113.0 200.5)" fill="#b0c8c0" opacity="0.36"/>
<ellipse cx="100.8" cy="166.4" rx="0.9" ry="1.4" transform="rotate(14 100.8 166.4)" fill="#c8e0d8" opacity="0.74"/>
<ellipse cx="64.5" cy="115.0" rx="0.4" ry="1.4" transform="rotate(15 64.5 115.0)" fill="#c8e0d8" opacity="0.68"/>
<ellipse cx="123.0" cy="106.9" rx="0.9" ry="1.2" transform="rotate(-20 123.0 106.9)" fill="#5a6a58" opacity="0.63"/>
<ellipse cx="121.5" cy="107.0" rx="0.9" ry="2.6" transform="rotate(27 121.5 107.0)" fill="#34463e" opacity="0.61"/>
<ellipse cx="37.0" cy="185.4" rx="0.6" ry="0.9" transform="rotate(-29 37.0 185.4)" fill="#6a5e40" opacity="0.51"/>
<ellipse cx="65.8" cy="183.7" rx="0.9" ry="2.3" transform="rotate(-26 65.8 183.7)" fill="#e8f4f0" opacity="0.38"/>
<ellipse cx="41.6" cy="181.6" rx="0.7" ry="0.9" transform="rotate(-21 41.6 181.6)" fill="#e8f4f0" opacity="0.40"/>
<ellipse cx="54.3" cy="185.6" rx="0.8" ry="2.1" transform="rotate(28 54.3 185.6)" fill="#7a7048" opacity="0.67"/>
<ellipse cx="35.4" cy="152.0" rx="0.6" ry="2.3" transform="rotate(-19 35.4 152.0)" fill="#dceee8" opacity="0.60"/>
<ellipse cx="44.7" cy="163.5" rx="0.8" ry="1.5" transform="rotate(-0 44.7 163.5)" fill="#5a6a58" opacity="0.89"/>
<ellipse cx="44.6" cy="212.3" rx="0.8" ry="1.2" transform="rotate(35 44.6 212.3)" fill="#6a5e40" opacity="0.80"/>
<ellipse cx="51.9" cy="99.9" rx="0.6" ry="1.5" transform="rotate(15 51.9 99.9)" fill="#4a5a4a" opacity="0.76"/>
<ellipse cx="34.9" cy="176.6" rx="0.8" ry="1.1" transform="rotate(18 34.9 176.6)" fill="#2a3a32" opacity="0.52"/>
<ellipse cx="104.0" cy="143.2" rx="0.6" ry="0.8" transform="rotate(-8 104.0 143.2)" fill="#2a3a32" opacity="0.85"/>
<ellipse cx="107.4" cy="213.8" rx="0.5" ry="2.3" transform="rotate(24 107.4 213.8)" fill="#6a5e40" opacity="0.72"/>
<ellipse cx="119.6" cy="155.9" rx="0.4" ry="1.7" transform="rotate(4 119.6 155.9)" fill="#2a3a32" opacity="0.79"/>
<ellipse cx="93.6" cy="203.8" rx="0.6" ry="1.6" transform="rotate(29 93.6 203.8)" fill="#2a3a32" opacity="0.53"/>
<ellipse cx="30.0" cy="221.0" rx="0.6" ry="1.7" transform="rotate(-15 30.0 221.0)" fill="#4a5a4a" opacity="0.52"/>
<ellipse cx="91.4" cy="169.7" rx="0.5" ry="2.3" transform="rotate(-23 91.4 169.7)" fill="#c8e0d8" opacity="0.75"/>
<ellipse cx="111.9" cy="160.4" rx="0.7" ry="2.5" transform="rotate(10 111.9 160.4)" fill="#a8bcb0" opacity="0.37"/>
<ellipse cx="37.1" cy="174.7" rx="0.6" ry="2.2" transform="rotate(-5 37.1 174.7)" fill="#4a5a4a" opacity="0.70"/>
<ellipse cx="85.8" cy="182.8" rx="0.6" ry="1.3" transform="rotate(-1 85.8 182.8)" fill="#2a3a32" opacity="0.79"/>
<ellipse cx="70.5" cy="137.2" rx="0.6" ry="1.0" transform="rotate(-30 70.5 137.2)" fill="#34463e" opacity="0.80"/>
<ellipse cx="28.0" cy="174.2" rx="0.5" ry="1.7" transform="rotate(22 28.0 174.2)" fill="#e8f4f0" opacity="0.47"/>
<ellipse cx="35.9" cy="199.1" rx="0.7" ry="2.3" transform="rotate(-22 35.9 199.1)" fill="#c8e0d8" opacity="0.72"/>
<ellipse cx="74.3" cy="154.0" rx="0.5" ry="1.9" transform="rotate(19 74.3 154.0)" fill="#e8f4f0" opacity="0.40"/>
<ellipse cx="107.1" cy="120.3" rx="0.5" ry="1.2" transform="rotate(-2 107.1 120.3)" fill="#e8f4f0" opacity="0.38"/>
<ellipse cx="100.9" cy="179.7" rx="0.6" ry="1.5" transform="rotate(19 100.9 179.7)" fill="#34463e" opacity="0.65"/>
<ellipse cx="101.7" cy="161.8" rx="0.5" ry="1.2" transform="rotate(22 101.7 161.8)" fill="#a8bcb0" opacity="0.60"/>
<ellipse cx="39.3" cy="165.2" rx="0.6" ry="1.8" transform="rotate(-13 39.3 165.2)" fill="#b0c8c0" opacity="0.47"/>
<ellipse cx="47.9" cy="186.5" rx="0.8" ry="0.8" transform="rotate(-14 47.9 186.5)" fill="#b0c8c0" opacity="0.69"/>
<ellipse cx="115.7" cy="148.5" rx="0.4" ry="0.9" transform="rotate(9 115.7 148.5)" fill="#c8e0d8" opacity="0.55"/>
<ellipse cx="110.0" cy="107.8" rx="0.5" ry="1.8" transform="rotate(2 110.0 107.8)" fill="#4a5a4a" opacity="0.85"/>
<ellipse cx="31.7" cy="128.5" rx="0.5" ry="2.0" transform="rotate(-6 31.7 128.5)" fill="#6a5e40" opacity="0.73"/>
<ellipse cx="47.8" cy="167.9" rx="0.7" ry="1.0" transform="rotate(-31 47.8 167.9)" fill="#2a3a32" opacity="0.67"/>
<ellipse cx="42.3" cy="127.9" rx="0.8" ry="2.2" transform="rotate(-26 42.3 127.9)" fill="#e8f4f0" opacity="0.36"/>
<ellipse cx="45.7" cy="186.2" rx="0.6" ry="1.8" transform="rotate(19 45.7 186.2)" fill="#34463e" opacity="0.78"/>
<ellipse cx="16.0" cy="142.9" rx="0.7" ry="2.1" transform="rotate(3 16.0 142.9)" fill="#34463e" opacity="0.70"/>
<ellipse cx="24.3" cy="156.0" rx="0.8" ry="1.3" transform="rotate(14 24.3 156.0)" fill="#6a5e40" opacity="0.66"/>
<ellipse cx="109.4" cy="153.5" rx="0.7" ry="2.3" transform="rotate(6 109.4 153.5)" fill="#6a5e40" opacity="0.69"/>
<ellipse cx="35.0" cy="178.1" rx="0.6" ry="2.0" transform="rotate(-19 35.0 178.1)" fill="#34463e" opacity="0.51"/>
<ellipse cx="71.4" cy="220.9" rx="0.5" ry="2.6" transform="rotate(32 71.4 220.9)" fill="#7a7048" opacity="0.63"/>
<ellipse cx="57.5" cy="143.6" rx="0.9" ry="0.9" transform="rotate(-5 57.5 143.6)" fill="#b0c8c0" opacity="0.43"/>
<ellipse cx="71.7" cy="134.5" rx="0.8" ry="2.6" transform="rotate(-5 71.7 134.5)" fill="#5a6a58" opacity="0.88"/>
<ellipse cx="17.9" cy="155.0" rx="0.4" ry="2.3" transform="rotate(34 17.9 155.0)" fill="#7a7048" opacity="0.78"/>
<ellipse cx="46.3" cy="99.2" rx="0.8" ry="1.8" transform="rotate(11 46.3 99.2)" fill="#b0c8c0" opacity="0.62"/>
<ellipse cx="74.5" cy="198.1" rx="0.7" ry="1.6" transform="rotate(-17 74.5 198.1)" fill="#6a5e40" opacity="0.77"/>
<ellipse cx="94.4" cy="205.8" rx="0.6" ry="1.7" transform="rotate(7 94.4 205.8)" fill="#e8f4f0" opacity="0.60"/>
<ellipse cx="80.4" cy="140.9" rx="0.7" ry="1.4" transform="rotate(-13 80.4 140.9)" fill="#a8bcb0" opacity="0.43"/>
<ellipse cx="17.7" cy="162.9" rx="0.5" ry="1.1" transform="rotate(25 17.7 162.9)" fill="#c8e0d8" opacity="0.37"/>
<ellipse cx="113.0" cy="151.6" rx="0.5" ry="1.7" transform="rotate(-10 113.0 151.6)" fill="#2a3a32" opacity="0.85"/>
<ellipse cx="30.0" cy="170.6" rx="0.6" ry="1.0" transform="rotate(32 30.0 170.6)" fill="#2a3a32" opacity="0.62"/>
<ellipse cx="42.8" cy="159.3" rx="0.9" ry="1.2" transform="rotate(11 42.8 159.3)" fill="#c8e0d8" opacity="0.75"/>
<ellipse cx="111.5" cy="99.4" rx="0.8" ry="1.3" transform="rotate(-2 111.5 99.4)" fill="#e8f4f0" opacity="0.44"/>
<ellipse cx="58.8" cy="109.6" rx="0.7" ry="2.0" transform="rotate(-27 58.8 109.6)" fill="#b0c8c0" opacity="0.54"/>
<ellipse cx="84.1" cy="105.7" rx="0.7" ry="2.4" transform="rotate(-31 84.1 105.7)" fill="#2a3a32" opacity="0.78"/>
<ellipse cx="104.0" cy="194.7" rx="0.6" ry="2.4" transform="rotate(1 104.0 194.7)" fill="#4a5a4a" opacity="0.52"/>
<ellipse cx="43.5" cy="162.5" rx="0.5" ry="2.6" transform="rotate(-15 43.5 162.5)" fill="#2a3a32" opacity="0.68"/>
<ellipse cx="36.4" cy="204.5" rx="0.8" ry="2.5" transform="rotate(9 36.4 204.5)" fill="#2a3a32" opacity="0.75"/>
<ellipse cx="74.6" cy="132.7" rx="0.7" ry="1.2" transform="rotate(14 74.6 132.7)" fill="#2a3a32" opacity="0.54"/>
<ellipse cx="19.6" cy="169.2" rx="0.4" ry="2.4" transform="rotate(-14 19.6 169.2)" fill="#2a3a32" opacity="0.58"/>
<ellipse cx="68.5" cy="159.2" rx="0.4" ry="2.4" transform="rotate(-23 68.5 159.2)" fill="#2a3a32" opacity="0.59"/>
<ellipse cx="77.9" cy="181.6" rx="0.8" ry="1.9" transform="rotate(8 77.9 181.6)" fill="#a8bcb0" opacity="0.52"/>
<ellipse cx="115.7" cy="168.6" rx="0.8" ry="2.2" transform="rotate(4 115.7 168.6)" fill="#a8bcb0" opacity="0.74"/>
<ellipse cx="22.1" cy="103.8" rx="0.9" ry="2.4" transform="rotate(-2 22.1 103.8)" fill="#6a5e40" opacity="0.67"/>
<ellipse cx="98.4" cy="154.1" rx="0.4" ry="1.2" transform="rotate(34 98.4 154.1)" fill="#7a7048" opacity="0.85"/>
<ellipse cx="101.0" cy="113.9" rx="0.5" ry="0.8" transform="rotate(34 101.0 113.9)" fill="#6a5e40" opacity="0.60"/>
<ellipse cx="37.8" cy="200.2" rx="0.7" ry="1.8" transform="rotate(33 37.8 200.2)" fill="#b0c8c0" opacity="0.46"/>
<ellipse cx="106.4" cy="178.2" rx="0.6" ry="1.1" transform="rotate(26 106.4 178.2)" fill="#4a5a4a" opacity="0.82"/>
<ellipse cx="121.2" cy="220.1" rx="0.5" ry="2.3" transform="rotate(26 121.2 220.1)" fill="#c8e0d8" opacity="0.41"/>
<ellipse cx="113.6" cy="199.9" rx="0.8" ry="2.3" transform="rotate(23 113.6 199.9)" fill="#c8e0d8" opacity="0.74"/>
<ellipse cx="67.4" cy="107.4" rx="0.7" ry="2.6" transform="rotate(14 67.4 107.4)" fill="#b0c8c0" opacity="0.52"/>
<ellipse cx="53.1" cy="128.8" rx="0.9" ry="1.8" transform="rotate(31 53.1 128.8)" fill="#5a6a58" opacity="0.55"/>
<ellipse cx="122.5" cy="215.7" rx="0.8" ry="2.0" transform="rotate(3 122.5 215.7)" fill="#6a5e40" opacity="0.51"/>
<ellipse cx="120.1" cy="179.3" rx="0.4" ry="2.5" transform="rotate(32 120.1 179.3)" fill="#5a6a58" opacity="0.67"/>
<ellipse cx="21.6" cy="105.1" rx="0.5" ry="1.3" transform="rotate(20 21.6 105.1)" fill="#e8f4f0" opacity="0.71"/>
<ellipse cx="88.0" cy="221.5" rx="0.9" ry="2.6" transform="rotate(10 88.0 221.5)" fill="#7a7048" opacity="0.55"/>
<ellipse cx="110.3" cy="187.5" rx="0.9" ry="2.1" transform="rotate(-26 110.3 187.5)" fill="#2a3a32" opacity="0.57"/>
<ellipse cx="89.8" cy="204.1" rx="0.9" ry="1.6" transform="rotate(-19 89.8 204.1)" fill="#34463e" opacity="0.52"/>
<ellipse cx="90.4" cy="205.6" rx="0.6" ry="1.9" transform="rotate(-0 90.4 205.6)" fill="#a8bcb0" opacity="0.57"/>
<ellipse cx="56.5" cy="193.6" rx="0.7" ry="1.0" transform="rotate(21 56.5 193.6)" fill="#dceee8" opacity="0.72"/>
<ellipse cx="69.2" cy="197.0" rx="0.6" ry="1.1" transform="rotate(29 69.2 197.0)" fill="#dceee8" opacity="0.54"/>
<ellipse cx="102.1" cy="133.4" rx="0.6" ry="2.4" transform="rotate(13 102.1 133.4)" fill="#7a7048" opacity="0.75"/>
<ellipse cx="68.9" cy="154.9" rx="0.8" ry="1.4" transform="rotate(-27 68.9 154.9)" fill="#a8bcb0" opacity="0.55"/>
<ellipse cx="115.6" cy="146.8" rx="0.6" ry="2.0" transform="rotate(5 115.6 146.8)" fill="#b0c8c0" opacity="0.38"/>
<ellipse cx="73.7" cy="148.1" rx="0.9" ry="1.6" transform="rotate(30 73.7 148.1)" fill="#4a5a4a" opacity="0.74"/>
<ellipse cx="84.1" cy="181.5" rx="0.9" ry="0.9" transform="rotate(-12 84.1 181.5)" fill="#5a6a58" opacity="0.72"/>
<ellipse cx="24.6" cy="145.1" rx="0.9" ry="1.3" transform="rotate(25 24.6 145.1)" fill="#b0c8c0" opacity="0.55"/>
<ellipse cx="22.5" cy="156.3" rx="0.4" ry="2.6" transform="rotate(-22 22.5 156.3)" fill="#5a6a58" opacity="0.83"/>
<ellipse cx="65.9" cy="142.2" rx="0.9" ry="1.6" transform="rotate(3 65.9 142.2)" fill="#2a3a32" opacity="0.73"/>
<ellipse cx="49.1" cy="220.5" rx="0.5" ry="2.1" transform="rotate(-16 49.1 220.5)" fill="#2a3a32" opacity="0.58"/>
<ellipse cx="53.7" cy="99.7" rx="0.5" ry="2.5" transform="rotate(-16 53.7 99.7)" fill="#4a5a4a" opacity="0.68"/>
<ellipse cx="104.2" cy="129.1" rx="0.4" ry="1.1" transform="rotate(22 104.2 129.1)" fill="#7a7048" opacity="0.53"/>
<ellipse cx="55.7" cy="212.2" rx="0.6" ry="2.3" transform="rotate(-7 55.7 212.2)" fill="#e8f4f0" opacity="0.66"/>
<ellipse cx="25.5" cy="166.2" rx="0.5" ry="2.3" transform="rotate(23 25.5 166.2)" fill="#6a5e40" opacity="0.83"/>
<ellipse cx="84.0" cy="158.3" rx="0.7" ry="1.7" transform="rotate(-4 84.0 158.3)" fill="#34463e" opacity="0.82"/>
<ellipse cx="43.3" cy="122.3" rx="0.5" ry="1.9" transform="rotate(-3 43.3 122.3)" fill="#5a6a58" opacity="0.79"/>
<ellipse cx="117.4" cy="178.4" rx="0.8" ry="2.6" transform="rotate(16 117.4 178.4)" fill="#b0c8c0" opacity="0.57"/>
<ellipse cx="47.3" cy="174.8" rx="0.5" ry="2.3" transform="rotate(-5 47.3 174.8)" fill="#5a6a58" opacity="0.57"/>
<ellipse cx="22.5" cy="216.8" rx="0.7" ry="2.1" transform="rotate(13 22.5 216.8)" fill="#4a5a4a" opacity="0.77"/>
<ellipse cx="32.4" cy="166.5" rx="0.5" ry="2.2" transform="rotate(-21 32.4 166.5)" fill="#34463e" opacity="0.78"/>
<ellipse cx="21.7" cy="172.5" rx="0.9" ry="1.3" transform="rotate(11 21.7 172.5)" fill="#5a6a58" opacity="0.90"/>
<ellipse cx="87.6" cy="214.7" rx="0.8" ry="2.4" transform="rotate(31 87.6 214.7)" fill="#a8bcb0" opacity="0.72"/>
<ellipse cx="41.3" cy="207.2" rx="0.7" ry="1.4" transform="rotate(8 41.3 207.2)" fill="#e8f4f0" opacity="0.53"/>
<ellipse cx="21.9" cy="206.8" rx="0.5" ry="2.2" transform="rotate(20 21.9 206.8)" fill="#4a5a4a" opacity="0.84"/>
<ellipse cx="76.8" cy="106.7" rx="0.7" ry="1.0" transform="rotate(-4 76.8 106.7)" fill="#c8e0d8" opacity="0.43"/>
<ellipse cx="90.7" cy="106.4" rx="0.5" ry="2.4" transform="rotate(28 90.7 106.4)" fill="#2a3a32" opacity="0.74"/>
<ellipse cx="56.5" cy="101.9" rx="0.6" ry="2.3" transform="rotate(-29 56.5 101.9)" fill="#e8f4f0" opacity="0.52"/>
<ellipse cx="30.1" cy="99.5" rx="0.7" ry="1.9" transform="rotate(10 30.1 99.5)" fill="#6a5e40" opacity="0.90"/>
<ellipse cx="22.5" cy="116.3" rx="0.5" ry="2.1" transform="rotate(7 22.5 116.3)" fill="#7a7048" opacity="0.86"/>
<ellipse cx="38.7" cy="162.6" rx="0.6" ry="1.3" transform="rotate(9 38.7 162.6)" fill="#e8f4f0" opacity="0.44"/>
<ellipse cx="46.1" cy="222.4" rx="0.4" ry="1.6" transform="rotate(7 46.1 222.4)" fill="#6a5e40" opacity="0.81"/>
<ellipse cx="66.6" cy="108.3" rx="0.8" ry="2.3" transform="rotate(-17 66.6 108.3)" fill="#b0c8c0" opacity="0.48"/>
<ellipse cx="94.8" cy="110.7" rx="0.8" ry="2.2" transform="rotate(20 94.8 110.7)" fill="#4a5a4a" opacity="0.52"/>
<ellipse cx="77.9" cy="112.3" rx="0.5" ry="1.4" transform="rotate(-2 77.9 112.3)" fill="#a8bcb0" opacity="0.71"/>
<ellipse cx="107.6" cy="117.1" rx="0.7" ry="1.6" transform="rotate(-17 107.6 117.1)" fill="#c8e0d8" opacity="0.70"/>
<ellipse cx="65.2" cy="108.8" rx="0.7" ry="2.4" transform="rotate(27 65.2 108.8)" fill="#2a3a32" opacity="0.65"/>
<ellipse cx="114.1" cy="220.1" rx="0.6" ry="1.3" transform="rotate(19 114.1 220.1)" fill="#5a6a58" opacity="0.80"/>
<ellipse cx="101.9" cy="197.1" rx="0.7" ry="1.7" transform="rotate(28 101.9 197.1)" fill="#c8e0d8" opacity="0.59"/>
<ellipse cx="63.8" cy="140.6" rx="0.4" ry="2.0" transform="rotate(-29 63.8 140.6)" fill="#e8f4f0" opacity="0.55"/>
<ellipse cx="66.5" cy="125.2" rx="0.5" ry="1.8" transform="rotate(3 66.5 125.2)" fill="#2a3a32" opacity="0.78"/>
<ellipse cx="93.3" cy="132.7" rx="0.6" ry="2.2" transform="rotate(-20 93.3 132.7)" fill="#5a6a58" opacity="0.66"/>
<ellipse cx="55.3" cy="99.1" rx="0.4" ry="1.9" transform="rotate(-5 55.3 99.1)" fill="#6a5e40" opacity="0.70"/>
<ellipse cx="32.2" cy="205.9" rx="0.5" ry="1.6" transform="rotate(11 32.2 205.9)" fill="#b0c8c0" opacity="0.72"/>
<ellipse cx="20.5" cy="172.2" rx="0.4" ry="1.0" transform="rotate(-21 20.5 172.2)" fill="#dceee8" opacity="0.73"/>
<ellipse cx="56.7" cy="167.6" rx="0.5" ry="2.4" transform="rotate(12 56.7 167.6)" fill="#2a3a32" opacity="0.67"/>
<ellipse cx="54.0" cy="157.3" rx="0.5" ry="2.4" transform="rotate(28 54.0 157.3)" fill="#5a6a58" opacity="0.84"/>
<ellipse cx="67.1" cy="140.0" rx="0.5" ry="1.5" transform="rotate(24 67.1 140.0)" fill="#e8f4f0" opacity="0.57"/>
<ellipse cx="104.7" cy="118.5" rx="0.6" ry="1.9" transform="rotate(-14 104.7 118.5)" fill="#4a5a4a" opacity="0.70"/>
<ellipse cx="87.6" cy="197.7" rx="0.7" ry="2.0" transform="rotate(-16 87.6 197.7)" fill="#b0c8c0" opacity="0.40"/>
<ellipse cx="111.6" cy="153.6" rx="0.6" ry="1.8" transform="rotate(11 111.6 153.6)" fill="#34463e" opacity="0.55"/>
<ellipse cx="67.7" cy="100.1" rx="0.6" ry="2.5" transform="rotate(-20 67.7 100.1)" fill="#dceee8" opacity="0.62"/>
<ellipse cx="104.0" cy="151.3" rx="0.9" ry="1.9" transform="rotate(5 104.0 151.3)" fill="#dceee8" opacity="0.37"/>
<ellipse cx="80.3" cy="131.5" rx="0.4" ry="1.5" transform="rotate(-26 80.3 131.5)" fill="#5a6a58" opacity="0.63"/>
<ellipse cx="83.2" cy="179.0" rx="0.6" ry="2.2" transform="rotate(-12 83.2 179.0)" fill="#7a7048" opacity="0.86"/>
<ellipse cx="122.4" cy="212.9" rx="0.4" ry="1.3" transform="rotate(10 122.4 212.9)" fill="#4a5a4a" opacity="0.80"/>
<ellipse cx="112.5" cy="132.0" rx="0.7" ry="1.3" transform="rotate(-16 112.5 132.0)" fill="#e8f4f0" opacity="0.51"/>
<ellipse cx="28.9" cy="125.2" rx="0.8" ry="2.2" transform="rotate(-9 28.9 125.2)" fill="#7a7048" opacity="0.62"/>
<ellipse cx="30.0" cy="161.1" rx="0.5" ry="1.3" transform="rotate(-18 30.0 161.1)" fill="#dceee8" opacity="0.69"/>
<ellipse cx="57.5" cy="184.0" rx="0.9" ry="2.3" transform="rotate(-11 57.5 184.0)" fill="#4a5a4a" opacity="0.89"/>
<ellipse cx="98.6" cy="166.0" rx="0.4" ry="2.2" transform="rotate(-25 98.6 166.0)" fill="#34463e" opacity="0.84"/>
<ellipse cx="32.6" cy="218.1" rx="0.5" ry="0.9" transform="rotate(24 32.6 218.1)" fill="#c8e0d8" opacity="0.65"/>
<ellipse cx="105.9" cy="123.4" rx="0.5" ry="1.1" transform="rotate(34 105.9 123.4)" fill="#2a3a32" opacity="0.90"/>
<ellipse cx="17.1" cy="113.7" rx="0.7" ry="1.5" transform="rotate(-22 17.1 113.7)" fill="#7a7048" opacity="0.80"/>
<ellipse cx="32.9" cy="106.2" rx="0.6" ry="1.9" transform="rotate(-10 32.9 106.2)" fill="#4a5a4a" opacity="0.55"/>
<ellipse cx="109.3" cy="220.7" rx="0.5" ry="2.5" transform="rotate(29 109.3 220.7)" fill="#e8f4f0" opacity="0.51"/>
<ellipse cx="77.9" cy="217.5" rx="0.5" ry="2.1" transform="rotate(-4 77.9 217.5)" fill="#5a6a58" opacity="0.80"/>
<ellipse cx="91.7" cy="123.0" rx="0.8" ry="1.4" transform="rotate(19 91.7 123.0)" fill="#a8bcb0" opacity="0.58"/>
<ellipse cx="94.4" cy="195.2" rx="0.7" ry="2.5" transform="rotate(-20 94.4 195.2)" fill="#4a5a4a" opacity="0.72"/>
<ellipse cx="54.7" cy="142.0" rx="0.8" ry="1.2" transform="rotate(-13 54.7 142.0)" fill="#2a3a32" opacity="0.58"/>
<ellipse cx="110.3" cy="122.8" rx="0.6" ry="2.1" transform="rotate(-19 110.3 122.8)" fill="#5a6a58" opacity="0.53"/>
<ellipse cx="117.1" cy="118.3" rx="0.6" ry="1.1" transform="rotate(-3 117.1 118.3)" fill="#6a5e40" opacity="0.84"/>
<ellipse cx="55.9" cy="117.3" rx="0.5" ry="1.5" transform="rotate(-10 55.9 117.3)" fill="#34463e" opacity="0.75"/>
<ellipse cx="26.2" cy="157.6" rx="0.6" ry="2.4" transform="rotate(-33 26.2 157.6)" fill="#4a5a4a" opacity="0.53"/>
<ellipse cx="93.6" cy="207.8" rx="0.8" ry="2.6" transform="rotate(31 93.6 207.8)" fill="#2a3a32" opacity="0.89"/>
<ellipse cx="28.5" cy="101.6" rx="0.6" ry="2.4" transform="rotate(30 28.5 101.6)" fill="#2a3a32" opacity="0.58"/>
<ellipse cx="50.0" cy="141.1" rx="0.8" ry="1.3" transform="rotate(-30 50.0 141.1)" fill="#6a5e40" opacity="0.90"/>
<ellipse cx="88.4" cy="221.0" rx="0.4" ry="1.7" transform="rotate(19 88.4 221.0)" fill="#e8f4f0" opacity="0.56"/>
<ellipse cx="103.1" cy="107.8" rx="0.5" ry="2.4" transform="rotate(-11 103.1 107.8)" fill="#6a5e40" opacity="0.81"/>
<ellipse cx="71.5" cy="220.4" rx="0.5" ry="1.8" transform="rotate(-2 71.5 220.4)" fill="#6a5e40" opacity="0.78"/>
<ellipse cx="51.8" cy="170.7" rx="0.5" ry="2.1" transform="rotate(21 51.8 170.7)" fill="#c8e0d8" opacity="0.61"/>
<ellipse cx="74.8" cy="100.8" rx="0.7" ry="1.4" transform="rotate(7 74.8 100.8)" fill="#b0c8c0" opacity="0.45"/>
<ellipse cx="100.2" cy="205.4" rx="0.4" ry="1.1" transform="rotate(1 100.2 205.4)" fill="#e8f4f0" opacity="0.57"/>
<ellipse cx="111.1" cy="219.8" rx="0.7" ry="2.2" transform="rotate(27 111.1 219.8)" fill="#dceee8" opacity="0.64"/>
<ellipse cx="73.6" cy="102.4" rx="0.8" ry="1.4" transform="rotate(-25 73.6 102.4)" fill="#e8f4f0" opacity="0.63"/>
<ellipse cx="37.8" cy="120.1" rx="0.8" ry="1.2" transform="rotate(-23 37.8 120.1)" fill="#2a3a32" opacity="0.75"/>
<ellipse cx="96.3" cy="120.4" rx="0.5" ry="0.9" transform="rotate(-7 96.3 120.4)" fill="#6a5e40" opacity="0.57"/>
<ellipse cx="20.8" cy="190.6" rx="0.7" ry="1.6" transform="rotate(22 20.8 190.6)" fill="#6a5e40" opacity="0.55"/>
<ellipse cx="65.0" cy="194.7" rx="0.8" ry="2.2" transform="rotate(-29 65.0 194.7)" fill="#c8e0d8" opacity="0.70"/>
<ellipse cx="105.2" cy="151.8" rx="0.8" ry="2.1" transform="rotate(30 105.2 151.8)" fill="#4a5a4a" opacity="0.82"/>
<ellipse cx="116.7" cy="184.1" rx="0.6" ry="1.6" transform="rotate(1 116.7 184.1)" fill="#e8f4f0" opacity="0.68"/>
<ellipse cx="112.1" cy="167.5" rx="0.6" ry="1.3" transform="rotate(-26 112.1 167.5)" fill="#c8e0d8" opacity="0.62"/>
<ellipse cx="23.9" cy="222.9" rx="0.7" ry="1.9" transform="rotate(30 23.9 222.9)" fill="#7a7048" opacity="0.77"/>
<ellipse cx="63.7" cy="167.1" rx="0.4" ry="2.1" transform="rotate(-22 63.7 167.1)" fill="#2a3a32" opacity="0.68"/>
<ellipse cx="104.2" cy="119.0" rx="0.6" ry="1.3" transform="rotate(3 104.2 119.0)" fill="#dceee8" opacity="0.74"/>
<ellipse cx="110.0" cy="112.8" rx="0.8" ry="1.0" transform="rotate(-5 110.0 112.8)" fill="#34463e" opacity="0.77"/>
<ellipse cx="38.5" cy="122.7" rx="0.7" ry="2.2" transform="rotate(29 38.5 122.7)" fill="#2a3a32" opacity="0.69"/>
<ellipse cx="26.0" cy="180.0" rx="0.8" ry="2.2" transform="rotate(-33 26.0 180.0)" fill="#5a6a58" opacity="0.87"/>
<ellipse cx="92.2" cy="189.2" rx="0.9" ry="2.6" transform="rotate(12 92.2 189.2)" fill="#dceee8" opacity="0.37"/>
<ellipse cx="73.9" cy="110.0" rx="0.7" ry="1.9" transform="rotate(-34 73.9 110.0)" fill="#c8e0d8" opacity="0.41"/>
<ellipse cx="113.2" cy="102.4" rx="0.5" ry="2.2" transform="rotate(-2 113.2 102.4)" fill="#34463e" opacity="0.55"/>
<ellipse cx="59.9" cy="99.1" rx="0.5" ry="0.9" transform="rotate(-20 59.9 99.1)" fill="#5a6a58" opacity="0.72"/>
<ellipse cx="70.4" cy="116.8" rx="0.8" ry="1.5" transform="rotate(-4 70.4 116.8)" fill="#b0c8c0" opacity="0.73"/>
<ellipse cx="83.0" cy="201.3" rx="0.7" ry="1.2" transform="rotate(-5 83.0 201.3)" fill="#4a5a4a" opacity="0.61"/>
<ellipse cx="57.5" cy="156.1" rx="0.7" ry="2.3" transform="rotate(-24 57.5 156.1)" fill="#2a3a32" opacity="0.78"/>
<ellipse cx="16.8" cy="222.7" rx="0.7" ry="2.2" transform="rotate(31 16.8 222.7)" fill="#2a3a32" opacity="0.83"/>
<ellipse cx="116.5" cy="168.9" rx="0.7" ry="2.3" transform="rotate(-6 116.5 168.9)" fill="#2a3a32" opacity="0.72"/>
<ellipse cx="91.9" cy="220.8" rx="0.9" ry="2.1" transform="rotate(21 91.9 220.8)" fill="#b0c8c0" opacity="0.52"/>
<ellipse cx="113.4" cy="112.6" rx="0.6" ry="1.1" transform="rotate(26 113.4 112.6)" fill="#c8e0d8" opacity="0.50"/>
<ellipse cx="48.4" cy="116.7" rx="0.7" ry="1.4" transform="rotate(26 48.4 116.7)" fill="#2a3a32" opacity="0.54"/>
<ellipse cx="54.5" cy="151.2" rx="0.6" ry="2.1" transform="rotate(8 54.5 151.2)" fill="#c8e0d8" opacity="0.50"/>
<ellipse cx="94.3" cy="126.2" rx="0.7" ry="1.8" transform="rotate(34 94.3 126.2)" fill="#5a6a58" opacity="0.66"/>
<ellipse cx="82.0" cy="193.9" rx="0.9" ry="1.3" transform="rotate(2 82.0 193.9)" fill="#c8e0d8" opacity="0.61"/>
<ellipse cx="24.0" cy="151.1" rx="0.5" ry="1.1" transform="rotate(24 24.0 151.1)" fill="#a8bcb0" opacity="0.63"/>
<ellipse cx="47.4" cy="221.2" rx="0.9" ry="1.9" transform="rotate(-15 47.4 221.2)" fill="#4a5a4a" opacity="0.65"/>
<ellipse cx="91.6" cy="205.3" rx="0.6" ry="1.2" transform="rotate(5 91.6 205.3)" fill="#c8e0d8" opacity="0.41"/>
<ellipse cx="90.5" cy="124.9" rx="0.7" ry="2.1" transform="rotate(23 90.5 124.9)" fill="#a8bcb0" opacity="0.41"/>
<ellipse cx="74.7" cy="190.3" rx="0.8" ry="2.1" transform="rotate(11 74.7 190.3)" fill="#2a3a32" opacity="0.89"/>
<ellipse cx="53.4" cy="142.3" rx="0.5" ry="1.3" transform="rotate(22 53.4 142.3)" fill="#34463e" opacity="0.77"/>
<ellipse cx="62.3" cy="134.2" rx="0.5" ry="2.1" transform="rotate(25 62.3 134.2)" fill="#dceee8" opacity="0.46"/>
<ellipse cx="45.0" cy="101.2" rx="0.5" ry="1.1" transform="rotate(11 45.0 101.2)" fill="#4a5a4a" opacity="0.77"/>
<ellipse cx="107.1" cy="105.1" rx="0.7" ry="2.5" transform="rotate(17 107.1 105.1)" fill="#a8bcb0" opacity="0.48"/>
<ellipse cx="82.5" cy="173.5" rx="0.6" ry="1.0" transform="rotate(-1 82.5 173.5)" fill="#c8e0d8" opacity="0.62"/>
<ellipse cx="61.3" cy="183.3" rx="0.6" ry="2.2" transform="rotate(-11 61.3 183.3)" fill="#2a3a32" opacity="0.71"/>
<ellipse cx="105.7" cy="129.9" rx="0.9" ry="1.3" transform="rotate(-11 105.7 129.9)" fill="#6a5e40" opacity="0.57"/>
<ellipse cx="27.3" cy="162.6" rx="0.6" ry="1.4" transform="rotate(25 27.3 162.6)" fill="#7a7048" opacity="0.54"/>
<ellipse cx="26.5" cy="176.7" rx="0.6" ry="0.9" transform="rotate(-8 26.5 176.7)" fill="#7a7048" opacity="0.86"/>
<ellipse cx="68.7" cy="183.1" rx="0.5" ry="1.4" transform="rotate(30 68.7 183.1)" fill="#2a3a32" opacity="0.82"/>
<ellipse cx="62.2" cy="212.7" rx="0.5" ry="1.6" transform="rotate(9 62.2 212.7)" fill="#c8e0d8" opacity="0.61"/>
<ellipse cx="79.1" cy="143.6" rx="0.5" ry="2.3" transform="rotate(20 79.1 143.6)" fill="#6a5e40" opacity="0.73"/>
<ellipse cx="36.2" cy="171.7" rx="0.5" ry="1.8" transform="rotate(-22 36.2 171.7)" fill="#4a5a4a" opacity="0.83"/>
<ellipse cx="101.8" cy="196.4" rx="0.6" ry="1.7" transform="rotate(-23 101.8 196.4)" fill="#5a6a58" opacity="0.51"/>
<ellipse cx="90.4" cy="115.1" rx="0.5" ry="1.1" transform="rotate(7 90.4 115.1)" fill="#34463e" opacity="0.76"/>
<ellipse cx="63.6" cy="183.7" rx="0.6" ry="1.2" transform="rotate(-5 63.6 183.7)" fill="#5a6a58" opacity="0.75"/>
<ellipse cx="30.5" cy="182.3" rx="0.6" ry="2.0" transform="rotate(4 30.5 182.3)" fill="#6a5e40" opacity="0.53"/>
<ellipse cx="120.9" cy="156.4" rx="0.9" ry="1.4" transform="rotate(-14 120.9 156.4)" fill="#e8f4f0" opacity="0.68"/>
<ellipse cx="21.6" cy="152.7" rx="0.8" ry="1.6" transform="rotate(34 21.6 152.7)" fill="#7a7048" opacity="0.51"/>
<ellipse cx="57.0" cy="141.7" rx="0.8" ry="2.4" transform="rotate(-16 57.0 141.7)" fill="#a8bcb0" opacity="0.55"/>
<ellipse cx="26.9" cy="179.5" rx="0.6" ry="1.0" transform="rotate(6 26.9 179.5)" fill="#dceee8" opacity="0.41"/>
<ellipse cx="54.7" cy="143.1" rx="0.6" ry="2.3" transform="rotate(27 54.7 143.1)" fill="#5a6a58" opacity="0.54"/>
<ellipse cx="79.6" cy="174.1" rx="0.6" ry="1.6" transform="rotate(17 79.6 174.1)" fill="#b0c8c0" opacity="0.73"/>
<ellipse cx="96.8" cy="108.5" rx="0.7" ry="1.3" transform="rotate(-29 96.8 108.5)" fill="#6a5e40" opacity="0.58"/>
<ellipse cx="121.6" cy="147.5" rx="0.7" ry="1.0" transform="rotate(-22 121.6 147.5)" fill="#5a6a58" opacity="0.61"/>
<ellipse cx="104.5" cy="119.5" rx="0.8" ry="2.2" transform="rotate(-11 104.5 119.5)" fill="#e8f4f0" opacity="0.65"/>
<ellipse cx="115.0" cy="192.2" rx="0.8" ry="2.2" transform="rotate(4 115.0 192.2)" fill="#6a5e40" opacity="0.60"/>
<ellipse cx="93.6" cy="174.4" rx="0.4" ry="1.4" transform="rotate(10 93.6 174.4)" fill="#4a5a4a" opacity="0.67"/>
<ellipse cx="71.9" cy="207.8" rx="0.6" ry="1.1" transform="rotate(-17 71.9 207.8)" fill="#6a5e40" opacity="0.65"/>
<ellipse cx="49.1" cy="112.6" rx="0.6" ry="1.2" transform="rotate(-6 49.1 112.6)" fill="#2a3a32" opacity="0.81"/>
<ellipse cx="51.6" cy="175.8" rx="0.5" ry="1.1" transform="rotate(-26 51.6 175.8)" fill="#5a6a58" opacity="0.73"/>
<ellipse cx="24.9" cy="108.7" rx="0.7" ry="2.2" transform="rotate(-0 24.9 108.7)" fill="#2a3a32" opacity="0.68"/>
<ellipse cx="28.9" cy="146.3" rx="0.8" ry="0.9" transform="rotate(-23 28.9 146.3)" fill="#7a7048" opacity="0.88"/>
<ellipse cx="100.6" cy="136.9" rx="0.5" ry="0.9" transform="rotate(15 100.6 136.9)" fill="#7a7048" opacity="0.58"/>
<ellipse cx="115.1" cy="125.8" rx="0.5" ry="1.5" transform="rotate(-5 115.1 125.8)" fill="#a8bcb0" opacity="0.53"/>
<ellipse cx="100.0" cy="163.5" rx="0.7" ry="1.2" transform="rotate(9 100.0 163.5)" fill="#e8f4f0" opacity="0.66"/>
<ellipse cx="111.0" cy="133.5" rx="0.8" ry="1.2" transform="rotate(22 111.0 133.5)" fill="#b0c8c0" opacity="0.38"/>
<ellipse cx="76.2" cy="218.1" rx="0.7" ry="1.9" transform="rotate(-10 76.2 218.1)" fill="#34463e" opacity="0.83"/>
<ellipse cx="117.4" cy="172.9" rx="0.7" ry="1.0" transform="rotate(-7 117.4 172.9)" fill="#b0c8c0" opacity="0.57"/>
<ellipse cx="82.2" cy="220.9" rx="0.9" ry="1.2" transform="rotate(-7 82.2 220.9)" fill="#a8bcb0" opacity="0.63"/>
<ellipse cx="108.0" cy="125.4" rx="0.6" ry="2.3" transform="rotate(-2 108.0 125.4)" fill="#5a6a58" opacity="0.55"/>
<ellipse cx="41.7" cy="192.8" rx="0.8" ry="1.7" transform="rotate(14 41.7 192.8)" fill="#2a3a32" opacity="0.55"/>
<ellipse cx="114.4" cy="207.0" rx="0.7" ry="1.0" transform="rotate(-4 114.4 207.0)" fill="#4a5a4a" opacity="0.78"/>
<ellipse cx="26.8" cy="208.8" rx="0.5" ry="1.3" transform="rotate(34 26.8 208.8)" fill="#b0c8c0" opacity="0.71"/>
<ellipse cx="25.2" cy="112.0" rx="0.6" ry="1.2" transform="rotate(14 25.2 112.0)" fill="#b0c8c0" opacity="0.38"/>
<ellipse cx="56.9" cy="172.8" rx="0.5" ry="1.9" transform="rotate(1 56.9 172.8)" fill="#6a5e40" opacity="0.62"/>
<ellipse cx="50.1" cy="182.0" rx="0.5" ry="1.0" transform="rotate(24 50.1 182.0)" fill="#4a5a4a" opacity="0.76"/>
<ellipse cx="38.7" cy="162.5" rx="0.6" ry="1.5" transform="rotate(-8 38.7 162.5)" fill="#2a3a32" opacity="0.58"/>
<ellipse cx="91.9" cy="160.1" rx="0.7" ry="2.0" transform="rotate(16 91.9 160.1)" fill="#b0c8c0" opacity="0.51"/>
<ellipse cx="22.2" cy="172.2" rx="0.6" ry="2.4" transform="rotate(-19 22.2 172.2)" fill="#34463e" opacity="0.85"/>
<ellipse cx="103.8" cy="145.8" rx="0.9" ry="2.1" transform="rotate(1 103.8 145.8)" fill="#e8f4f0" opacity="0.69"/>
<ellipse cx="39.0" cy="119.7" rx="0.5" ry="1.8" transform="rotate(16 39.0 119.7)" fill="#6a5e40" opacity="0.59"/>
<ellipse cx="116.5" cy="133.4" rx="0.6" ry="2.1" transform="rotate(2 116.5 133.4)" fill="#7a7048" opacity="0.62"/>
<ellipse cx="56.6" cy="213.6" rx="0.9" ry="1.1" transform="rotate(15 56.6 213.6)" fill="#c8e0d8" opacity="0.45"/>
<ellipse cx="59.2" cy="129.9" rx="0.7" ry="1.4" transform="rotate(34 59.2 129.9)" fill="#4a5a4a" opacity="0.77"/>
<ellipse cx="80.9" cy="176.8" rx="0.5" ry="2.2" transform="rotate(22 80.9 176.8)" fill="#c8e0d8" opacity="0.36"/>
<ellipse cx="22.3" cy="108.0" rx="0.7" ry="1.0" transform="rotate(-25 22.3 108.0)" fill="#c8e0d8" opacity="0.68"/>
<ellipse cx="33.5" cy="205.1" rx="0.8" ry="0.9" transform="rotate(-6 33.5 205.1)" fill="#c8e0d8" opacity="0.38"/>
<ellipse cx="48.3" cy="112.5" rx="0.5" ry="1.0" transform="rotate(22 48.3 112.5)" fill="#b0c8c0" opacity="0.36"/>
<ellipse cx="61.5" cy="211.8" rx="0.8" ry="1.1" transform="rotate(-25 61.5 211.8)" fill="#5a6a58" opacity="0.59"/>
<ellipse cx="78.9" cy="194.5" rx="0.8" ry="2.6" transform="rotate(18 78.9 194.5)" fill="#b0c8c0" opacity="0.57"/>
<ellipse cx="99.5" cy="174.6" rx="0.9" ry="1.5" transform="rotate(-19 99.5 174.6)" fill="#e8f4f0" opacity="0.42"/>
<ellipse cx="49.6" cy="199.9" rx="0.8" ry="1.2" transform="rotate(-28 49.6 199.9)" fill="#7a7048" opacity="0.84"/>
<ellipse cx="17.4" cy="114.0" rx="0.6" ry="1.7" transform="rotate(25 17.4 114.0)" fill="#c8e0d8" opacity="0.40"/>
<ellipse cx="36.4" cy="213.5" rx="0.4" ry="1.7" transform="rotate(-1 36.4 213.5)" fill="#e8f4f0" opacity="0.51"/>
<ellipse cx="18.1" cy="172.7" rx="0.7" ry="1.2" transform="rotate(5 18.1 172.7)" fill="#5a6a58" opacity="0.77"/>
<ellipse cx="87.3" cy="130.9" rx="0.4" ry="1.7" transform="rotate(13 87.3 130.9)" fill="#34463e" opacity="0.84"/>
<ellipse cx="92.5" cy="217.0" rx="0.8" ry="1.0" transform="rotate(32 92.5 217.0)" fill="#b0c8c0" opacity="0.58"/>
<ellipse cx="80.8" cy="186.4" rx="0.9" ry="1.4" transform="rotate(1 80.8 186.4)" fill="#6a5e40" opacity="0.61"/>
<ellipse cx="97.9" cy="205.0" rx="0.4" ry="1.6" transform="rotate(-8 97.9 205.0)" fill="#34463e" opacity="0.89"/>
<ellipse cx="24.6" cy="213.9" rx="0.8" ry="2.1" transform="rotate(19 24.6 213.9)" fill="#5a6a58" opacity="0.73"/>
<ellipse cx="77.4" cy="132.7" rx="0.4" ry="1.8" transform="rotate(13 77.4 132.7)" fill="#b0c8c0" opacity="0.58"/>
<ellipse cx="42.1" cy="143.3" rx="0.9" ry="1.0" transform="rotate(6 42.1 143.3)" fill="#a8bcb0" opacity="0.46"/>
<ellipse cx="50.2" cy="182.3" rx="0.8" ry="1.1" transform="rotate(20 50.2 182.3)" fill="#e8f4f0" opacity="0.40"/>
<ellipse cx="98.2" cy="206.1" rx="0.7" ry="2.2" transform="rotate(-7 98.2 206.1)" fill="#7a7048" opacity="0.65"/>
<ellipse cx="42.9" cy="180.4" rx="0.9" ry="2.2" transform="rotate(-22 42.9 180.4)" fill="#4a5a4a" opacity="0.56"/>
<ellipse cx="83.6" cy="175.2" rx="0.5" ry="1.9" transform="rotate(32 83.6 175.2)" fill="#6a5e40" opacity="0.51"/>
<ellipse cx="19.3" cy="136.2" rx="0.8" ry="1.4" transform="rotate(34 19.3 136.2)" fill="#5a6a58" opacity="0.64"/>
<ellipse cx="55.0" cy="194.5" rx="0.4" ry="1.4" transform="rotate(17 55.0 194.5)" fill="#4a5a4a" opacity="0.60"/>
<ellipse cx="73.6" cy="114.6" rx="0.8" ry="1.4" transform="rotate(-3 73.6 114.6)" fill="#dceee8" opacity="0.44"/>
<ellipse cx="48.1" cy="215.3" rx="0.5" ry="0.8" transform="rotate(17 48.1 215.3)" fill="#5a6a58" opacity="0.82"/>
<ellipse cx="37.9" cy="208.4" rx="0.6" ry="2.2" transform="rotate(-19 37.9 208.4)" fill="#6a5e40" opacity="0.54"/>
<ellipse cx="104.6" cy="146.6" rx="0.9" ry="1.5" transform="rotate(29 104.6 146.6)" fill="#a8bcb0" opacity="0.71"/>
<ellipse cx="111.5" cy="177.2" rx="0.7" ry="1.9" transform="rotate(32 111.5 177.2)" fill="#a8bcb0" opacity="0.69"/>
<ellipse cx="79.0" cy="143.9" rx="0.9" ry="1.0" transform="rotate(-10 79.0 143.9)" fill="#5a6a58" opacity="0.85"/>
<ellipse cx="70.9" cy="178.1" rx="0.8" ry="2.6" transform="rotate(6 70.9 178.1)" fill="#a8bcb0" opacity="0.69"/>
<ellipse cx="121.4" cy="208.4" rx="0.8" ry="1.9" transform="rotate(1 121.4 208.4)" fill="#2a3a32" opacity="0.61"/>
<ellipse cx="18.8" cy="177.9" rx="0.8" ry="1.2" transform="rotate(27 18.8 177.9)" fill="#34463e" opacity="0.84"/>
<ellipse cx="44.2" cy="204.3" rx="0.4" ry="1.7" transform="rotate(-31 44.2 204.3)" fill="#c8e0d8" opacity="0.65"/>
<ellipse cx="38.0" cy="160.9" rx="0.4" ry="1.8" transform="rotate(20 38.0 160.9)" fill="#4a5a4a" opacity="0.57"/>
<ellipse cx="118.7" cy="121.7" rx="0.9" ry="2.5" transform="rotate(5 118.7 121.7)" fill="#34463e" opacity="0.54"/>
<ellipse cx="113.2" cy="203.1" rx="0.6" ry="1.5" transform="rotate(29 113.2 203.1)" fill="#e8f4f0" opacity="0.53"/>
<ellipse cx="56.0" cy="166.7" rx="0.6" ry="1.1" transform="rotate(26 56.0 166.7)" fill="#2a3a32" opacity="0.86"/>
<ellipse cx="68.9" cy="99.5" rx="0.8" ry="0.8" transform="rotate(-28 68.9 99.5)" fill="#6a5e40" opacity="0.67"/>
<ellipse cx="86.4" cy="116.0" rx="0.5" ry="2.1" transform="rotate(-5 86.4 116.0)" fill="#4a5a4a" opacity="0.68"/>
</g>
<path d="M50 138Q54 150 60 160L56 162Q50 152 48 140Z" fill="#e0f4ee" opacity="0.7"/>
<path d="M86 136Q83 150 77 160L81 162Q86 152 88 138Z" fill="#e0f4ee" opacity="0.7"/>
<path d="M60 126Q67 122 74 126L73 140L61 140Z" fill="#d8ece6" opacity="0.5"/>
<path d="M41 146L41 118Q42 106 52 102Q66 98 80 101Q90 104 93 113L93 160L86 166L55 166L47 158Z" fill="url(#hshade)"/>
<path d="M48 106Q66 98 86 104L84 110Q66 104 50 112Z" fill="#8a7a50" opacity="0.5"/>
<ellipse cx="50.5" cy="122.8" rx="5.6" ry="4.8" fill="#2a3028" opacity="0.8"/><ellipse cx="50.8" cy="122.5" rx="3.6" ry="3.2" fill="#141810"/>
<ellipse cx="51" cy="122.3" rx="2.6" ry="2.3" fill="#8a5a30"/>
<circle cx="51" cy="122.3" r="1.2" fill="#180c06"/>
<ellipse cx="82" cy="121.3" rx="5.6" ry="4.8" fill="#2a3028" opacity="0.8"/><ellipse cx="81.8" cy="121" rx="3.6" ry="3.2" fill="#141810"/>
<ellipse cx="81.8" cy="121" rx="2.6" ry="2.3" fill="#8a5a30"/>
<circle cx="81.8" cy="121" r="1.2" fill="#180c06"/>
<path d="M45 143Q48 158 57 168" stroke="#101a14" stroke-width="2.4" fill="none"/>
<path d="M90 142Q88 156 80 167" stroke="#101a14" stroke-width="2.4" fill="none"/>
<path d="M46 176L56.5 197" stroke="#e8302a" stroke-width="2.8"/>
<path d="M91.5 180L83 200" stroke="#e8302a" stroke-width="2.8"/>
<path d="M60 162Q68 159 77 162Q80 176 82 195Q83 215 73 222L62 222Q56 212 56.5 198Q57.5 178 60 162Z" fill="#ecc6d0"/>
<path d="M60 166Q68 164 77 166Q80 190 79 205Q76 216 68 218Q60 214 59 200Z" fill="#f6dce4" opacity="0.85"/>
<path d="M69.5 176L70 218" stroke="#d8a4b0" stroke-width="0.9"/>
<ellipse cx="67.6" cy="154" rx="9.2" ry="7" fill="#080808"/>
<ellipse cx="65" cy="151.2" rx="3.2" ry="1.6" fill="#4a4a4a"/>
</svg>
<div style="position:absolute;left:214px;top:97px;width:216px;height:21px;background:#fff;"></div>
<div style="position:absolute;left:214px;top:97px;width:215px;height:20px;background:#aca899;"></div>
<div style="position:absolute;left:215px;top:98px;width:214px;height:19px;background:#f1efe2;"></div>
<div style="position:absolute;left:215px;top:98px;width:213px;height:18px;background:#716f64;"></div>
<div style="position:absolute;left:216px;top:99px;width:212px;height:17px;background:#fff;"></div>
<div style="position:absolute;left:167.00px;top:101px;font-size:12px;line-height:14px;white-space:pre;transform:scaleX(0.8944);transform-origin:0 0;filter:url(#tc);">Race title:</div>
<div style="position:absolute;left:217.00px;top:100px;font-size:12px;line-height:14px;white-space:pre;transform:scaleX(0.8961);transform-origin:0 0;filter:url(#tc);">Channel425.com Stakes</div>
<div style="position:absolute;left:214px;top:135px;width:164px;height:21px;background:#fff;"></div>
<div style="position:absolute;left:214px;top:135px;width:163px;height:20px;background:#aca899;"></div>
<div style="position:absolute;left:215px;top:136px;width:162px;height:19px;background:#f1efe2;"></div>
<div style="position:absolute;left:215px;top:136px;width:161px;height:18px;background:#716f64;"></div>
<div style="position:absolute;left:216px;top:137px;width:160px;height:17px;background:#fff;"></div>
<div style="position:absolute;left:183.00px;top:139px;font-size:12px;line-height:14px;white-space:pre;transform:scaleX(0.9126);transform-origin:0 0;filter:url(#tc);">Track:</div>
<div style="position:absolute;left:217.00px;top:138px;font-size:12px;line-height:14px;white-space:pre;transform:scaleX(0.9263);transform-origin:0 0;filter:url(#tc);">Swindon</div>
<div style="position:absolute;left:360px;top:137px;width:16px;height:17px;background:#716f64;"></div>
<div style="position:absolute;left:360px;top:137px;width:15px;height:16px;background:#f1efe2;"></div>
<div style="position:absolute;left:361px;top:138px;width:14px;height:15px;background:#aca899;"></div>
<div style="position:absolute;left:361px;top:138px;width:13px;height:14px;background:#fff;"></div>
<div style="position:absolute;left:362px;top:139px;width:12px;height:13px;background:#ece9d8;"></div>
<svg style="left:365px;top:144px" width="7" height="4" viewBox="0 0 7 4" shape-rendering="crispEdges"><path d="M0 0h7v1h-1v1h-1v1h-1v1h-1v-1h-1v-1h-1v-1h-1z" fill="#000"/></svg>
<div style="position:absolute;left:214px;top:170px;width:164px;height:21px;background:#fff;"></div>
<div style="position:absolute;left:214px;top:170px;width:163px;height:20px;background:#aca899;"></div>
<div style="position:absolute;left:215px;top:171px;width:162px;height:19px;background:#f1efe2;"></div>
<div style="position:absolute;left:215px;top:171px;width:161px;height:18px;background:#716f64;"></div>
<div style="position:absolute;left:216px;top:172px;width:160px;height:17px;background:#fff;"></div>
<div style="position:absolute;left:186.00px;top:174px;font-size:12px;line-height:14px;white-space:pre;transform:scaleX(0.9600);transform-origin:0 0;filter:url(#tc);">Date:</div>
<div style="position:absolute;left:218.00px;top:174px;font-size:12px;line-height:14px;white-space:pre;transform:scaleX(0.9330);transform-origin:0 0;filter:url(#tc);">Wed 11 Jan  2006</div>
<div style="position:absolute;left:360px;top:172px;width:16px;height:17px;background:#716f64;"></div>
<div style="position:absolute;left:360px;top:172px;width:15px;height:16px;background:#f1efe2;"></div>
<div style="position:absolute;left:361px;top:173px;width:14px;height:15px;background:#aca899;"></div>
<div style="position:absolute;left:361px;top:173px;width:13px;height:14px;background:#fff;"></div>
<div style="position:absolute;left:362px;top:174px;width:12px;height:13px;background:#ece9d8;"></div>
<svg style="left:365px;top:179px" width="7" height="4" viewBox="0 0 7 4" shape-rendering="crispEdges"><path d="M0 0h7v1h-1v1h-1v1h-1v1h-1v-1h-1v-1h-1v-1h-1z" fill="#000"/></svg>
<div style="position:absolute;left:214px;top:205px;width:57px;height:21px;background:#fff;"></div>
<div style="position:absolute;left:214px;top:205px;width:56px;height:20px;background:#aca899;"></div>
<div style="position:absolute;left:215px;top:206px;width:55px;height:19px;background:#f1efe2;"></div>
<div style="position:absolute;left:215px;top:206px;width:54px;height:18px;background:#716f64;"></div>
<div style="position:absolute;left:216px;top:207px;width:53px;height:17px;background:#fff;"></div>
<div style="position:absolute;left:168.00px;top:208px;font-size:12px;line-height:14px;white-space:pre;transform:scaleX(0.8500);transform-origin:0 0;filter:url(#tc);">Start time:</div>
<div style="position:absolute;left:217.00px;top:208px;font-size:12px;line-height:14px;white-space:pre;transform:scaleX(0.9590);transform-origin:0 0;filter:url(#tc);">20.45</div>
<div style="position:absolute;left:483px;top:97px;width:141px;height:21px;background:#fff;"></div>
<div style="position:absolute;left:483px;top:97px;width:140px;height:20px;background:#aca899;"></div>
<div style="position:absolute;left:484px;top:98px;width:139px;height:19px;background:#f1efe2;"></div>
<div style="position:absolute;left:484px;top:98px;width:138px;height:18px;background:#716f64;"></div>
<div style="position:absolute;left:485px;top:99px;width:137px;height:17px;background:#fff;"></div>
<div style="position:absolute;left:455.00px;top:101px;font-size:12px;line-height:14px;white-space:pre;transform:scaleX(0.8800);transform-origin:0 0;filter:url(#tc);">Prize:</div>
<div style="position:absolute;left:486.00px;top:100px;font-size:12px;line-height:14px;white-space:pre;transform:scaleX(0.8996);transform-origin:0 0;filter:url(#tc);">1st £56, Others £16</div>
<div style="position:absolute;left:483px;top:135px;width:45px;height:21px;background:#fff;"></div>
<div style="position:absolute;left:483px;top:135px;width:44px;height:20px;background:#aca899;"></div>
<div style="position:absolute;left:484px;top:136px;width:43px;height:19px;background:#f1efe2;"></div>
<div style="position:absolute;left:484px;top:136px;width:42px;height:18px;background:#716f64;"></div>
<div style="position:absolute;left:485px;top:137px;width:41px;height:17px;background:#fff;"></div>
<div style="position:absolute;left:450.00px;top:139px;font-size:12px;line-height:14px;white-space:pre;transform:scaleX(0.9103);transform-origin:0 0;filter:url(#tc);">Grade:</div>
<div style="position:absolute;left:486.00px;top:138px;font-size:12px;line-height:14px;white-space:pre;transform:scaleX(0.9657);transform-origin:0 0;filter:url(#tc);">A3</div>
<div style="position:absolute;left:483px;top:170px;width:45px;height:21px;background:#fff;"></div>
<div style="position:absolute;left:483px;top:170px;width:44px;height:20px;background:#aca899;"></div>
<div style="position:absolute;left:484px;top:171px;width:43px;height:19px;background:#f1efe2;"></div>
<div style="position:absolute;left:484px;top:171px;width:42px;height:18px;background:#716f64;"></div>
<div style="position:absolute;left:485px;top:172px;width:41px;height:17px;background:#fff;"></div>
<div style="position:absolute;left:438.00px;top:174px;font-size:12px;line-height:14px;white-space:pre;transform:scaleX(0.9015);transform-origin:0 0;filter:url(#tc);">Distance:</div>
<div style="position:absolute;left:487.00px;top:173px;font-size:12px;line-height:14px;white-space:pre;transform:scaleX(0.8814);transform-origin:0 0;filter:url(#tc);">480m</div>
<div style="position:absolute;left:483px;top:205px;width:141px;height:21px;background:#fff;"></div>
<div style="position:absolute;left:483px;top:205px;width:140px;height:20px;background:#aca899;"></div>
<div style="position:absolute;left:484px;top:206px;width:139px;height:19px;background:#f1efe2;"></div>
<div style="position:absolute;left:484px;top:206px;width:138px;height:18px;background:#716f64;"></div>
<div style="position:absolute;left:485px;top:207px;width:137px;height:17px;background:#fff;"></div>
<div style="position:absolute;left:450.00px;top:208px;font-size:12px;line-height:14px;white-space:pre;transform:scaleX(0.9114);transform-origin:0 0;filter:url(#tc);">Going:</div>
<div style="position:absolute;left:15px;top:248px;width:611px;height:199px;background:#fff;"></div>
<div style="position:absolute;left:15px;top:248px;width:610px;height:198px;background:#aca899;"></div>
<div style="position:absolute;left:16px;top:249px;width:609px;height:197px;background:#f1efe2;"></div>
<div style="position:absolute;left:16px;top:249px;width:608px;height:196px;background:#716f64;"></div>
<div style="position:absolute;left:17px;top:250px;width:607px;height:195px;background:#fff;"></div>
<div style="position:absolute;left:17px;top:250px;width:36px;height:17px;background:#000;"></div>
<div style="position:absolute;left:17px;top:250px;width:35px;height:16px;background:#fff;"></div>
<div style="position:absolute;left:18px;top:251px;width:34px;height:15px;background:#008000;"></div>
<div style="position:absolute;left:17px;top:251px;width:36px;text-align:center;font-size:11px;line-height:14px;color:#fff;letter-spacing:-0.1px;filter:url(#tc);">Trap</div>
<div style="position:absolute;left:53px;top:250px;width:36px;height:17px;background:#000;"></div>
<div style="position:absolute;left:53px;top:250px;width:35px;height:16px;background:#fff;"></div>
<div style="position:absolute;left:54px;top:251px;width:34px;height:15px;background:#008000;"></div>
<div style="position:absolute;left:53px;top:251px;width:36px;text-align:center;font-size:11px;line-height:14px;color:#fff;letter-spacing:-0.1px;filter:url(#tc);">Sex</div>
<div style="position:absolute;left:89px;top:250px;width:55px;height:17px;background:#000;"></div>
<div style="position:absolute;left:89px;top:250px;width:54px;height:16px;background:#fff;"></div>
<div style="position:absolute;left:90px;top:251px;width:53px;height:15px;background:#008000;"></div>
<div style="position:absolute;left:89px;top:251px;width:55px;text-align:center;font-size:11px;line-height:14px;color:#fff;letter-spacing:-0.1px;filter:url(#tc);">Form</div>
<div style="position:absolute;left:144px;top:250px;width:140px;height:17px;background:#000;"></div>
<div style="position:absolute;left:144px;top:250px;width:139px;height:16px;background:#fff;"></div>
<div style="position:absolute;left:145px;top:251px;width:138px;height:15px;background:#008000;"></div>
<div style="position:absolute;left:146px;top:251px;font-size:11px;line-height:14px;color:#fff;letter-spacing:-0.1px;filter:url(#tc);white-space:pre;">Name</div>
<div style="position:absolute;left:284px;top:250px;width:97px;height:17px;background:#000;"></div>
<div style="position:absolute;left:284px;top:250px;width:96px;height:16px;background:#fff;"></div>
<div style="position:absolute;left:285px;top:251px;width:95px;height:15px;background:#008000;"></div>
<div style="position:absolute;left:286px;top:251px;font-size:11px;line-height:14px;color:#fff;letter-spacing:-0.1px;filter:url(#tc);white-space:pre;">Trainer</div>
<div style="position:absolute;left:381px;top:250px;width:97px;height:17px;background:#000;"></div>
<div style="position:absolute;left:381px;top:250px;width:96px;height:16px;background:#fff;"></div>
<div style="position:absolute;left:382px;top:251px;width:95px;height:15px;background:#008000;"></div>
<div style="position:absolute;left:381px;top:251px;width:97px;text-align:center;font-size:11px;line-height:14px;color:#fff;letter-spacing:-0.1px;filter:url(#tc);">Time</div>
<div style="position:absolute;left:478px;top:250px;width:61px;height:17px;background:#000;"></div>
<div style="position:absolute;left:478px;top:250px;width:60px;height:16px;background:#fff;"></div>
<div style="position:absolute;left:479px;top:251px;width:59px;height:15px;background:#008000;"></div>
<div style="position:absolute;left:478px;top:251px;width:61px;text-align:center;font-size:11px;line-height:14px;color:#fff;letter-spacing:-0.1px;filter:url(#tc);">Section</div>
<div style="position:absolute;left:539px;top:250px;width:43px;height:17px;background:#000;"></div>
<div style="position:absolute;left:539px;top:250px;width:42px;height:16px;background:#fff;"></div>
<div style="position:absolute;left:540px;top:251px;width:41px;height:15px;background:#008000;"></div>
<div style="position:absolute;left:539px;top:251px;width:43px;text-align:center;font-size:11px;line-height:14px;color:#fff;letter-spacing:-0.1px;filter:url(#tc);">Score</div>
<div style="position:absolute;left:582px;top:250px;width:42px;height:17px;background:#000;"></div>
<div style="position:absolute;left:582px;top:250px;width:42px;height:16px;background:#fff;"></div>
<div style="position:absolute;left:583px;top:251px;width:41px;height:15px;background:#008000;"></div>
<div style="position:absolute;left:582px;top:251px;width:42px;text-align:center;font-size:11px;line-height:14px;color:#fff;letter-spacing:-0.1px;filter:url(#tc);">Result</div>
<div style="position:absolute;left:17px;top:318px;width:607px;height:16px;background:#c6fac6;"></div>
<div style="position:absolute;left:17px;top:283px;width:607px;height:1px;background:#c8c8c8;"></div>
<div style="position:absolute;left:17px;top:300px;width:607px;height:1px;background:#c8c8c8;"></div>
<div style="position:absolute;left:17px;top:317px;width:607px;height:1px;background:#c8c8c8;"></div>
<div style="position:absolute;left:17px;top:334px;width:607px;height:1px;background:#c8c8c8;"></div>
<div style="position:absolute;left:17px;top:351px;width:607px;height:1px;background:#c8c8c8;"></div>
<div style="position:absolute;left:17px;top:368px;width:607px;height:1px;background:#c8c8c8;"></div>
<div style="position:absolute;left:17px;top:385px;width:607px;height:1px;background:#c8c8c8;"></div>
<div style="position:absolute;left:17px;top:402px;width:607px;height:1px;background:#c8c8c8;"></div>
<div style="position:absolute;left:17px;top:419px;width:607px;height:1px;background:#c8c8c8;"></div>
<div style="position:absolute;left:52px;top:267px;width:1px;height:161px;background:#c8c8c8;"></div>
<div style="position:absolute;left:88px;top:267px;width:1px;height:161px;background:#c8c8c8;"></div>
<div style="position:absolute;left:143px;top:267px;width:1px;height:161px;background:#c8c8c8;"></div>
<div style="position:absolute;left:283px;top:267px;width:1px;height:161px;background:#c8c8c8;"></div>
<div style="position:absolute;left:380px;top:267px;width:1px;height:161px;background:#c8c8c8;"></div>
<div style="position:absolute;left:477px;top:267px;width:1px;height:161px;background:#c8c8c8;"></div>
<div style="position:absolute;left:538px;top:267px;width:1px;height:161px;background:#c8c8c8;"></div>
<div style="position:absolute;left:581px;top:267px;width:1px;height:161px;background:#c8c8c8;"></div>
<div style="position:absolute;left:17px;top:268px;width:35px;text-align:center;font-size:11px;line-height:14px;letter-spacing:-0.1px;filter:url(#tc);">1</div>
<div style="position:absolute;left:53px;top:268px;width:35px;text-align:center;font-size:11px;line-height:14px;letter-spacing:-0.1px;filter:url(#tc);">B</div>
<div style="position:absolute;left:89px;top:268px;width:54px;text-align:center;font-size:11px;line-height:14px;letter-spacing:-0.1px;filter:url(#tc);">31211</div>
<div style="position:absolute;left:146px;top:268px;font-size:11px;line-height:14px;letter-spacing:-0.1px;filter:url(#tc);white-space:pre;">Grease The Pan</div>
<div style="position:absolute;left:286px;top:268px;font-size:11px;line-height:14px;letter-spacing:-0.1px;filter:url(#tc);white-space:pre;">D L R Elliott</div>
<div style="position:absolute;left:381px;top:268px;width:96px;text-align:center;font-size:11px;line-height:14px;letter-spacing:-0.1px;filter:url(#tc);">29.976</div>
<div style="position:absolute;left:478px;top:268px;width:60px;text-align:center;font-size:11px;line-height:14px;letter-spacing:-0.1px;filter:url(#tc);">2.5625</div>
<div style="position:absolute;left:539px;top:268px;width:42px;text-align:center;font-size:11px;line-height:14px;letter-spacing:-0.1px;filter:url(#tc);">152</div>
<div style="position:absolute;left:582px;top:268px;width:41px;text-align:center;font-size:11px;line-height:14px;letter-spacing:-0.1px;filter:url(#tc);">5</div>
<div style="position:absolute;left:17px;top:285px;width:35px;text-align:center;font-size:11px;line-height:14px;letter-spacing:-0.1px;filter:url(#tc);">2</div>
<div style="position:absolute;left:53px;top:285px;width:35px;text-align:center;font-size:11px;line-height:14px;letter-spacing:-0.1px;filter:url(#tc);">D</div>
<div style="position:absolute;left:89px;top:285px;width:54px;text-align:center;font-size:11px;line-height:14px;letter-spacing:-0.1px;filter:url(#tc);">54514</div>
<div style="position:absolute;left:146px;top:285px;font-size:11px;line-height:14px;letter-spacing:-0.1px;filter:url(#tc);white-space:pre;">Rustenburgcastle</div>
<div style="position:absolute;left:286px;top:285px;font-size:11px;line-height:14px;letter-spacing:-0.1px;filter:url(#tc);white-space:pre;">T Kibble</div>
<div style="position:absolute;left:381px;top:285px;width:96px;text-align:center;font-size:11px;line-height:14px;letter-spacing:-0.1px;filter:url(#tc);">29.940</div>
<div style="position:absolute;left:478px;top:285px;width:60px;text-align:center;font-size:11px;line-height:14px;letter-spacing:-0.1px;filter:url(#tc);">2.6425</div>
<div style="position:absolute;left:539px;top:285px;width:42px;text-align:center;font-size:11px;line-height:14px;letter-spacing:-0.1px;filter:url(#tc);">129</div>
<div style="position:absolute;left:582px;top:285px;width:41px;text-align:center;font-size:11px;line-height:14px;letter-spacing:-0.1px;filter:url(#tc);">3</div>
<div style="position:absolute;left:17px;top:302px;width:35px;text-align:center;font-size:11px;line-height:14px;letter-spacing:-0.1px;filter:url(#tc);">3</div>
<div style="position:absolute;left:53px;top:302px;width:35px;text-align:center;font-size:11px;line-height:14px;letter-spacing:-0.1px;filter:url(#tc);">B</div>
<div style="position:absolute;left:89px;top:302px;width:54px;text-align:center;font-size:11px;line-height:14px;letter-spacing:-0.1px;filter:url(#tc);">53425</div>
<div style="position:absolute;left:146px;top:302px;font-size:11px;line-height:14px;letter-spacing:-0.1px;filter:url(#tc);white-space:pre;">Calders Last Gem</div>
<div style="position:absolute;left:286px;top:302px;font-size:11px;line-height:14px;letter-spacing:-0.1px;filter:url(#tc);white-space:pre;">L D Wallington</div>
<div style="position:absolute;left:381px;top:302px;width:96px;text-align:center;font-size:11px;line-height:14px;letter-spacing:-0.1px;filter:url(#tc);">30.031</div>
<div style="position:absolute;left:478px;top:302px;width:60px;text-align:center;font-size:11px;line-height:14px;letter-spacing:-0.1px;filter:url(#tc);">2.635</div>
<div style="position:absolute;left:539px;top:302px;width:42px;text-align:center;font-size:11px;line-height:14px;letter-spacing:-0.1px;filter:url(#tc);">133</div>
<div style="position:absolute;left:582px;top:302px;width:41px;text-align:center;font-size:11px;line-height:14px;letter-spacing:-0.1px;filter:url(#tc);">6</div>
<div style="position:absolute;left:17px;top:319px;width:35px;text-align:center;font-size:11px;line-height:14px;letter-spacing:-0.1px;filter:url(#tc);">4</div>
<div style="position:absolute;left:53px;top:319px;width:35px;text-align:center;font-size:11px;line-height:14px;letter-spacing:-0.1px;filter:url(#tc);">B</div>
<div style="position:absolute;left:89px;top:319px;width:54px;text-align:center;font-size:11px;line-height:14px;letter-spacing:-0.1px;filter:url(#tc);">13355</div>
<div style="position:absolute;left:146px;top:319px;font-size:11px;line-height:14px;letter-spacing:-0.1px;filter:url(#tc);white-space:pre;">Galmonian Kiley</div>
<div style="position:absolute;left:286px;top:319px;font-size:11px;line-height:14px;letter-spacing:-0.1px;filter:url(#tc);white-space:pre;">D D Porter</div>
<div style="position:absolute;left:381px;top:319px;width:96px;text-align:center;font-size:11px;line-height:14px;letter-spacing:-0.1px;filter:url(#tc);">30.278</div>
<div style="position:absolute;left:478px;top:319px;width:60px;text-align:center;font-size:11px;line-height:14px;letter-spacing:-0.1px;filter:url(#tc);">2.49</div>
<div style="position:absolute;left:539px;top:319px;width:42px;text-align:center;font-size:11px;line-height:14px;letter-spacing:-0.1px;filter:url(#tc);">138</div>
<div style="position:absolute;left:582px;top:319px;width:41px;text-align:center;font-size:11px;line-height:14px;letter-spacing:-0.1px;filter:url(#tc);">1</div>
<div style="position:absolute;left:17px;top:336px;width:35px;text-align:center;font-size:11px;line-height:14px;letter-spacing:-0.1px;filter:url(#tc);">5</div>
<div style="position:absolute;left:53px;top:336px;width:35px;text-align:center;font-size:11px;line-height:14px;letter-spacing:-0.1px;filter:url(#tc);">B</div>
<div style="position:absolute;left:89px;top:336px;width:54px;text-align:center;font-size:11px;line-height:14px;letter-spacing:-0.1px;filter:url(#tc);">62215</div>
<div style="position:absolute;left:146px;top:336px;font-size:11px;line-height:14px;letter-spacing:-0.1px;filter:url(#tc);white-space:pre;">Goulane Linda</div>
<div style="position:absolute;left:286px;top:336px;font-size:11px;line-height:14px;letter-spacing:-0.1px;filter:url(#tc);white-space:pre;">R P Smith</div>
<div style="position:absolute;left:381px;top:336px;width:96px;text-align:center;font-size:11px;line-height:14px;letter-spacing:-0.1px;filter:url(#tc);">30.159</div>
<div style="position:absolute;left:478px;top:336px;width:60px;text-align:center;font-size:11px;line-height:14px;letter-spacing:-0.1px;filter:url(#tc);">2.56</div>
<div style="position:absolute;left:539px;top:336px;width:42px;text-align:center;font-size:11px;line-height:14px;letter-spacing:-0.1px;filter:url(#tc);">134</div>
<div style="position:absolute;left:582px;top:336px;width:41px;text-align:center;font-size:11px;line-height:14px;letter-spacing:-0.1px;filter:url(#tc);">4</div>
<div style="position:absolute;left:17px;top:353px;width:35px;text-align:center;font-size:11px;line-height:14px;letter-spacing:-0.1px;filter:url(#tc);">6</div>
<div style="position:absolute;left:53px;top:353px;width:35px;text-align:center;font-size:11px;line-height:14px;letter-spacing:-0.1px;filter:url(#tc);">B</div>
<div style="position:absolute;left:89px;top:353px;width:54px;text-align:center;font-size:11px;line-height:14px;letter-spacing:-0.1px;filter:url(#tc);">56114</div>
<div style="position:absolute;left:146px;top:353px;font-size:11px;line-height:14px;letter-spacing:-0.1px;filter:url(#tc);white-space:pre;">Switchtheswitch</div>
<div style="position:absolute;left:286px;top:353px;font-size:11px;line-height:14px;letter-spacing:-0.1px;filter:url(#tc);white-space:pre;">A B Mcdowell</div>
<div style="position:absolute;left:381px;top:353px;width:96px;text-align:center;font-size:11px;line-height:14px;letter-spacing:-0.1px;filter:url(#tc);">30.041</div>
<div style="position:absolute;left:478px;top:353px;width:60px;text-align:center;font-size:11px;line-height:14px;letter-spacing:-0.1px;filter:url(#tc);">2.5825</div>
<div style="position:absolute;left:539px;top:353px;width:42px;text-align:center;font-size:11px;line-height:14px;letter-spacing:-0.1px;filter:url(#tc);">126</div>
<div style="position:absolute;left:582px;top:353px;width:41px;text-align:center;font-size:11px;line-height:14px;letter-spacing:-0.1px;filter:url(#tc);">2</div>
<div style="position:absolute;left:17px;top:428px;width:607px;height:17px;background:repeating-conic-gradient(#fff 0 25%,#ece9d8 0 50%) 0 0/2px 2px;"></div>
<div style="position:absolute;left:17px;top:428px;width:17px;height:17px;background:#716f64;"></div>
<div style="position:absolute;left:17px;top:428px;width:16px;height:16px;background:#f1efe2;"></div>
<div style="position:absolute;left:18px;top:429px;width:15px;height:15px;background:#aca899;"></div>
<div style="position:absolute;left:18px;top:429px;width:14px;height:14px;background:#fff;"></div>
<div style="position:absolute;left:19px;top:430px;width:13px;height:13px;background:#ece9d8;"></div>
<div style="position:absolute;left:34px;top:428px;width:17px;height:17px;background:#716f64;"></div>
<div style="position:absolute;left:34px;top:428px;width:16px;height:16px;background:#f1efe2;"></div>
<div style="position:absolute;left:35px;top:429px;width:15px;height:15px;background:#aca899;"></div>
<div style="position:absolute;left:35px;top:429px;width:14px;height:14px;background:#fff;"></div>
<div style="position:absolute;left:36px;top:430px;width:13px;height:13px;background:#ece9d8;"></div>
<div style="position:absolute;left:607px;top:428px;width:17px;height:17px;background:#716f64;"></div>
<div style="position:absolute;left:607px;top:428px;width:16px;height:16px;background:#f1efe2;"></div>
<div style="position:absolute;left:608px;top:429px;width:15px;height:15px;background:#aca899;"></div>
<div style="position:absolute;left:608px;top:429px;width:14px;height:14px;background:#fff;"></div>
<div style="position:absolute;left:609px;top:430px;width:13px;height:13px;background:#ece9d8;"></div>
<svg style="left:22px;top:433px" width="4" height="7" viewBox="0 0 4 7" shape-rendering="crispEdges"><path d="M3 0h1v7h-1v-1h-1v-1h-1v-1h-1v-1h1v-1h1v-1h1z"/></svg>
<svg style="left:614px;top:433px" width="4" height="7" viewBox="0 0 4 7" shape-rendering="crispEdges"><path d="M0 0h1v1h1v1h1v1h1v1h-1v1h-1v1h-1v1h-1z"/></svg>
</body></html>
